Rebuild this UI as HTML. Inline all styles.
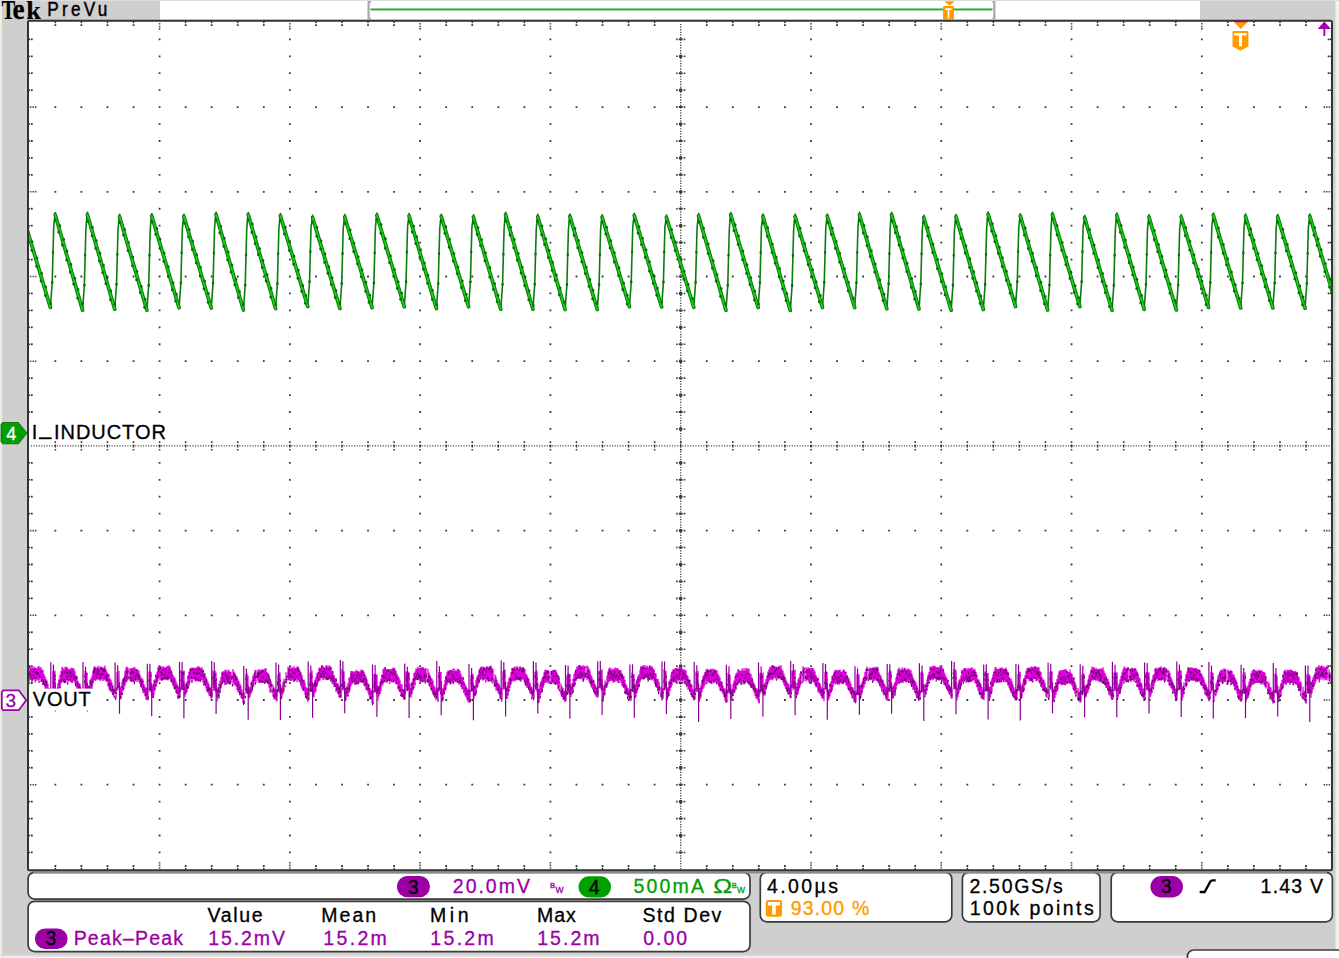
<!DOCTYPE html><html><head><meta charset="utf-8"><style>
html,body{margin:0;padding:0;background:#cfcfcf;}
svg{display:block;}
text{font-family:"Liberation Sans",sans-serif;}
</style></head><body>
<svg width="1339" height="958" viewBox="0 0 1339 958">

<rect x="0" y="0" width="1339" height="958" fill="#cfcfcf"/>
<rect x="0" y="0" width="2" height="958" fill="#ededdf"/>
<rect x="1335.5" y="0" width="3.5" height="958" fill="#f3f3e3"/>
<rect x="0" y="0" width="1339" height="1" fill="#dcdcdc"/>
<rect x="0" y="955" width="1339" height="1.5" fill="#dedede"/>
<rect x="0" y="956.5" width="1339" height="1.5" fill="#f4f4f0"/>
<rect x="160" y="1" width="1040" height="18.7" fill="#ffffff"/>
<rect x="28" y="21" width="1304" height="849" fill="#ffffff"/>
<path d="M158.78 23.00h1.6v1.6h-1.6zM158.78 25.70h1.6v1.6h-1.6zM158.78 28.10h1.6v1.6h-1.6zM158.78 861.90h1.6v1.6h-1.6zM158.78 864.60h1.6v1.6h-1.6zM158.78 867.20h1.6v1.6h-1.6zM289.06 23.00h1.6v1.6h-1.6zM289.06 25.70h1.6v1.6h-1.6zM289.06 28.10h1.6v1.6h-1.6zM289.06 861.90h1.6v1.6h-1.6zM289.06 864.60h1.6v1.6h-1.6zM289.06 867.20h1.6v1.6h-1.6zM419.34 23.00h1.6v1.6h-1.6zM419.34 25.70h1.6v1.6h-1.6zM419.34 28.10h1.6v1.6h-1.6zM419.34 861.90h1.6v1.6h-1.6zM419.34 864.60h1.6v1.6h-1.6zM419.34 867.20h1.6v1.6h-1.6zM549.62 23.00h1.6v1.6h-1.6zM549.62 25.70h1.6v1.6h-1.6zM549.62 28.10h1.6v1.6h-1.6zM549.62 861.90h1.6v1.6h-1.6zM549.62 864.60h1.6v1.6h-1.6zM549.62 867.20h1.6v1.6h-1.6zM810.18 23.00h1.6v1.6h-1.6zM810.18 25.70h1.6v1.6h-1.6zM810.18 28.10h1.6v1.6h-1.6zM810.18 861.90h1.6v1.6h-1.6zM810.18 864.60h1.6v1.6h-1.6zM810.18 867.20h1.6v1.6h-1.6zM940.46 23.00h1.6v1.6h-1.6zM940.46 25.70h1.6v1.6h-1.6zM940.46 28.10h1.6v1.6h-1.6zM940.46 861.90h1.6v1.6h-1.6zM940.46 864.60h1.6v1.6h-1.6zM940.46 867.20h1.6v1.6h-1.6zM1070.74 23.00h1.6v1.6h-1.6zM1070.74 25.70h1.6v1.6h-1.6zM1070.74 28.10h1.6v1.6h-1.6zM1070.74 861.90h1.6v1.6h-1.6zM1070.74 864.60h1.6v1.6h-1.6zM1070.74 867.20h1.6v1.6h-1.6zM1201.02 23.00h1.6v1.6h-1.6zM1201.02 25.70h1.6v1.6h-1.6zM1201.02 28.10h1.6v1.6h-1.6zM1201.02 861.90h1.6v1.6h-1.6zM1201.02 864.60h1.6v1.6h-1.6zM1201.02 867.20h1.6v1.6h-1.6zM29.80 106.30h1.6v1.6h-1.6zM32.50 106.30h1.6v1.6h-1.6zM34.90 106.30h1.6v1.6h-1.6zM1323.50 106.30h1.6v1.6h-1.6zM1325.90 106.30h1.6v1.6h-1.6zM1328.60 106.30h1.6v1.6h-1.6zM29.80 191.00h1.6v1.6h-1.6zM32.50 191.00h1.6v1.6h-1.6zM34.90 191.00h1.6v1.6h-1.6zM1323.50 191.00h1.6v1.6h-1.6zM1325.90 191.00h1.6v1.6h-1.6zM1328.60 191.00h1.6v1.6h-1.6zM29.80 275.70h1.6v1.6h-1.6zM32.50 275.70h1.6v1.6h-1.6zM34.90 275.70h1.6v1.6h-1.6zM1323.50 275.70h1.6v1.6h-1.6zM1325.90 275.70h1.6v1.6h-1.6zM1328.60 275.70h1.6v1.6h-1.6zM29.80 360.40h1.6v1.6h-1.6zM32.50 360.40h1.6v1.6h-1.6zM34.90 360.40h1.6v1.6h-1.6zM1323.50 360.40h1.6v1.6h-1.6zM1325.90 360.40h1.6v1.6h-1.6zM1328.60 360.40h1.6v1.6h-1.6zM29.80 529.80h1.6v1.6h-1.6zM32.50 529.80h1.6v1.6h-1.6zM34.90 529.80h1.6v1.6h-1.6zM1323.50 529.80h1.6v1.6h-1.6zM1325.90 529.80h1.6v1.6h-1.6zM1328.60 529.80h1.6v1.6h-1.6zM29.80 614.50h1.6v1.6h-1.6zM32.50 614.50h1.6v1.6h-1.6zM34.90 614.50h1.6v1.6h-1.6zM1323.50 614.50h1.6v1.6h-1.6zM1325.90 614.50h1.6v1.6h-1.6zM1328.60 614.50h1.6v1.6h-1.6zM29.80 699.20h1.6v1.6h-1.6zM32.50 699.20h1.6v1.6h-1.6zM34.90 699.20h1.6v1.6h-1.6zM1323.50 699.20h1.6v1.6h-1.6zM1325.90 699.20h1.6v1.6h-1.6zM1328.60 699.20h1.6v1.6h-1.6zM29.80 783.90h1.6v1.6h-1.6zM32.50 783.90h1.6v1.6h-1.6zM34.90 783.90h1.6v1.6h-1.6zM1323.50 783.90h1.6v1.6h-1.6zM1325.90 783.90h1.6v1.6h-1.6zM1328.60 783.90h1.6v1.6h-1.6z" fill="#555"/>
<path d="M158.68 38.44h1.8v1.8h-1.8zM158.68 55.38h1.8v1.8h-1.8zM158.68 72.32h1.8v1.8h-1.8zM158.68 89.26h1.8v1.8h-1.8zM158.68 106.20h1.8v1.8h-1.8zM158.68 123.14h1.8v1.8h-1.8zM158.68 140.08h1.8v1.8h-1.8zM158.68 157.02h1.8v1.8h-1.8zM158.68 173.96h1.8v1.8h-1.8zM158.68 190.90h1.8v1.8h-1.8zM158.68 207.84h1.8v1.8h-1.8zM158.68 224.78h1.8v1.8h-1.8zM158.68 241.72h1.8v1.8h-1.8zM158.68 258.66h1.8v1.8h-1.8zM158.68 275.60h1.8v1.8h-1.8zM158.68 292.54h1.8v1.8h-1.8zM158.68 309.48h1.8v1.8h-1.8zM158.68 326.42h1.8v1.8h-1.8zM158.68 343.36h1.8v1.8h-1.8zM158.68 360.30h1.8v1.8h-1.8zM158.68 377.24h1.8v1.8h-1.8zM158.68 394.18h1.8v1.8h-1.8zM158.68 411.12h1.8v1.8h-1.8zM158.68 428.06h1.8v1.8h-1.8zM158.68 445.00h1.8v1.8h-1.8zM158.68 461.94h1.8v1.8h-1.8zM158.68 478.88h1.8v1.8h-1.8zM158.68 495.82h1.8v1.8h-1.8zM158.68 512.76h1.8v1.8h-1.8zM158.68 529.70h1.8v1.8h-1.8zM158.68 546.64h1.8v1.8h-1.8zM158.68 563.58h1.8v1.8h-1.8zM158.68 580.52h1.8v1.8h-1.8zM158.68 597.46h1.8v1.8h-1.8zM158.68 614.40h1.8v1.8h-1.8zM158.68 631.34h1.8v1.8h-1.8zM158.68 648.28h1.8v1.8h-1.8zM158.68 665.22h1.8v1.8h-1.8zM158.68 682.16h1.8v1.8h-1.8zM158.68 699.10h1.8v1.8h-1.8zM158.68 716.04h1.8v1.8h-1.8zM158.68 732.98h1.8v1.8h-1.8zM158.68 749.92h1.8v1.8h-1.8zM158.68 766.86h1.8v1.8h-1.8zM158.68 783.80h1.8v1.8h-1.8zM158.68 800.74h1.8v1.8h-1.8zM158.68 817.68h1.8v1.8h-1.8zM158.68 834.62h1.8v1.8h-1.8zM158.68 851.56h1.8v1.8h-1.8zM288.96 38.44h1.8v1.8h-1.8zM288.96 55.38h1.8v1.8h-1.8zM288.96 72.32h1.8v1.8h-1.8zM288.96 89.26h1.8v1.8h-1.8zM288.96 106.20h1.8v1.8h-1.8zM288.96 123.14h1.8v1.8h-1.8zM288.96 140.08h1.8v1.8h-1.8zM288.96 157.02h1.8v1.8h-1.8zM288.96 173.96h1.8v1.8h-1.8zM288.96 190.90h1.8v1.8h-1.8zM288.96 207.84h1.8v1.8h-1.8zM288.96 224.78h1.8v1.8h-1.8zM288.96 241.72h1.8v1.8h-1.8zM288.96 258.66h1.8v1.8h-1.8zM288.96 275.60h1.8v1.8h-1.8zM288.96 292.54h1.8v1.8h-1.8zM288.96 309.48h1.8v1.8h-1.8zM288.96 326.42h1.8v1.8h-1.8zM288.96 343.36h1.8v1.8h-1.8zM288.96 360.30h1.8v1.8h-1.8zM288.96 377.24h1.8v1.8h-1.8zM288.96 394.18h1.8v1.8h-1.8zM288.96 411.12h1.8v1.8h-1.8zM288.96 428.06h1.8v1.8h-1.8zM288.96 445.00h1.8v1.8h-1.8zM288.96 461.94h1.8v1.8h-1.8zM288.96 478.88h1.8v1.8h-1.8zM288.96 495.82h1.8v1.8h-1.8zM288.96 512.76h1.8v1.8h-1.8zM288.96 529.70h1.8v1.8h-1.8zM288.96 546.64h1.8v1.8h-1.8zM288.96 563.58h1.8v1.8h-1.8zM288.96 580.52h1.8v1.8h-1.8zM288.96 597.46h1.8v1.8h-1.8zM288.96 614.40h1.8v1.8h-1.8zM288.96 631.34h1.8v1.8h-1.8zM288.96 648.28h1.8v1.8h-1.8zM288.96 665.22h1.8v1.8h-1.8zM288.96 682.16h1.8v1.8h-1.8zM288.96 699.10h1.8v1.8h-1.8zM288.96 716.04h1.8v1.8h-1.8zM288.96 732.98h1.8v1.8h-1.8zM288.96 749.92h1.8v1.8h-1.8zM288.96 766.86h1.8v1.8h-1.8zM288.96 783.80h1.8v1.8h-1.8zM288.96 800.74h1.8v1.8h-1.8zM288.96 817.68h1.8v1.8h-1.8zM288.96 834.62h1.8v1.8h-1.8zM288.96 851.56h1.8v1.8h-1.8zM419.24 38.44h1.8v1.8h-1.8zM419.24 55.38h1.8v1.8h-1.8zM419.24 72.32h1.8v1.8h-1.8zM419.24 89.26h1.8v1.8h-1.8zM419.24 106.20h1.8v1.8h-1.8zM419.24 123.14h1.8v1.8h-1.8zM419.24 140.08h1.8v1.8h-1.8zM419.24 157.02h1.8v1.8h-1.8zM419.24 173.96h1.8v1.8h-1.8zM419.24 190.90h1.8v1.8h-1.8zM419.24 207.84h1.8v1.8h-1.8zM419.24 224.78h1.8v1.8h-1.8zM419.24 241.72h1.8v1.8h-1.8zM419.24 258.66h1.8v1.8h-1.8zM419.24 275.60h1.8v1.8h-1.8zM419.24 292.54h1.8v1.8h-1.8zM419.24 309.48h1.8v1.8h-1.8zM419.24 326.42h1.8v1.8h-1.8zM419.24 343.36h1.8v1.8h-1.8zM419.24 360.30h1.8v1.8h-1.8zM419.24 377.24h1.8v1.8h-1.8zM419.24 394.18h1.8v1.8h-1.8zM419.24 411.12h1.8v1.8h-1.8zM419.24 428.06h1.8v1.8h-1.8zM419.24 445.00h1.8v1.8h-1.8zM419.24 461.94h1.8v1.8h-1.8zM419.24 478.88h1.8v1.8h-1.8zM419.24 495.82h1.8v1.8h-1.8zM419.24 512.76h1.8v1.8h-1.8zM419.24 529.70h1.8v1.8h-1.8zM419.24 546.64h1.8v1.8h-1.8zM419.24 563.58h1.8v1.8h-1.8zM419.24 580.52h1.8v1.8h-1.8zM419.24 597.46h1.8v1.8h-1.8zM419.24 614.40h1.8v1.8h-1.8zM419.24 631.34h1.8v1.8h-1.8zM419.24 648.28h1.8v1.8h-1.8zM419.24 665.22h1.8v1.8h-1.8zM419.24 682.16h1.8v1.8h-1.8zM419.24 699.10h1.8v1.8h-1.8zM419.24 716.04h1.8v1.8h-1.8zM419.24 732.98h1.8v1.8h-1.8zM419.24 749.92h1.8v1.8h-1.8zM419.24 766.86h1.8v1.8h-1.8zM419.24 783.80h1.8v1.8h-1.8zM419.24 800.74h1.8v1.8h-1.8zM419.24 817.68h1.8v1.8h-1.8zM419.24 834.62h1.8v1.8h-1.8zM419.24 851.56h1.8v1.8h-1.8zM549.52 38.44h1.8v1.8h-1.8zM549.52 55.38h1.8v1.8h-1.8zM549.52 72.32h1.8v1.8h-1.8zM549.52 89.26h1.8v1.8h-1.8zM549.52 106.20h1.8v1.8h-1.8zM549.52 123.14h1.8v1.8h-1.8zM549.52 140.08h1.8v1.8h-1.8zM549.52 157.02h1.8v1.8h-1.8zM549.52 173.96h1.8v1.8h-1.8zM549.52 190.90h1.8v1.8h-1.8zM549.52 207.84h1.8v1.8h-1.8zM549.52 224.78h1.8v1.8h-1.8zM549.52 241.72h1.8v1.8h-1.8zM549.52 258.66h1.8v1.8h-1.8zM549.52 275.60h1.8v1.8h-1.8zM549.52 292.54h1.8v1.8h-1.8zM549.52 309.48h1.8v1.8h-1.8zM549.52 326.42h1.8v1.8h-1.8zM549.52 343.36h1.8v1.8h-1.8zM549.52 360.30h1.8v1.8h-1.8zM549.52 377.24h1.8v1.8h-1.8zM549.52 394.18h1.8v1.8h-1.8zM549.52 411.12h1.8v1.8h-1.8zM549.52 428.06h1.8v1.8h-1.8zM549.52 445.00h1.8v1.8h-1.8zM549.52 461.94h1.8v1.8h-1.8zM549.52 478.88h1.8v1.8h-1.8zM549.52 495.82h1.8v1.8h-1.8zM549.52 512.76h1.8v1.8h-1.8zM549.52 529.70h1.8v1.8h-1.8zM549.52 546.64h1.8v1.8h-1.8zM549.52 563.58h1.8v1.8h-1.8zM549.52 580.52h1.8v1.8h-1.8zM549.52 597.46h1.8v1.8h-1.8zM549.52 614.40h1.8v1.8h-1.8zM549.52 631.34h1.8v1.8h-1.8zM549.52 648.28h1.8v1.8h-1.8zM549.52 665.22h1.8v1.8h-1.8zM549.52 682.16h1.8v1.8h-1.8zM549.52 699.10h1.8v1.8h-1.8zM549.52 716.04h1.8v1.8h-1.8zM549.52 732.98h1.8v1.8h-1.8zM549.52 749.92h1.8v1.8h-1.8zM549.52 766.86h1.8v1.8h-1.8zM549.52 783.80h1.8v1.8h-1.8zM549.52 800.74h1.8v1.8h-1.8zM549.52 817.68h1.8v1.8h-1.8zM549.52 834.62h1.8v1.8h-1.8zM549.52 851.56h1.8v1.8h-1.8zM810.08 38.44h1.8v1.8h-1.8zM810.08 55.38h1.8v1.8h-1.8zM810.08 72.32h1.8v1.8h-1.8zM810.08 89.26h1.8v1.8h-1.8zM810.08 106.20h1.8v1.8h-1.8zM810.08 123.14h1.8v1.8h-1.8zM810.08 140.08h1.8v1.8h-1.8zM810.08 157.02h1.8v1.8h-1.8zM810.08 173.96h1.8v1.8h-1.8zM810.08 190.90h1.8v1.8h-1.8zM810.08 207.84h1.8v1.8h-1.8zM810.08 224.78h1.8v1.8h-1.8zM810.08 241.72h1.8v1.8h-1.8zM810.08 258.66h1.8v1.8h-1.8zM810.08 275.60h1.8v1.8h-1.8zM810.08 292.54h1.8v1.8h-1.8zM810.08 309.48h1.8v1.8h-1.8zM810.08 326.42h1.8v1.8h-1.8zM810.08 343.36h1.8v1.8h-1.8zM810.08 360.30h1.8v1.8h-1.8zM810.08 377.24h1.8v1.8h-1.8zM810.08 394.18h1.8v1.8h-1.8zM810.08 411.12h1.8v1.8h-1.8zM810.08 428.06h1.8v1.8h-1.8zM810.08 445.00h1.8v1.8h-1.8zM810.08 461.94h1.8v1.8h-1.8zM810.08 478.88h1.8v1.8h-1.8zM810.08 495.82h1.8v1.8h-1.8zM810.08 512.76h1.8v1.8h-1.8zM810.08 529.70h1.8v1.8h-1.8zM810.08 546.64h1.8v1.8h-1.8zM810.08 563.58h1.8v1.8h-1.8zM810.08 580.52h1.8v1.8h-1.8zM810.08 597.46h1.8v1.8h-1.8zM810.08 614.40h1.8v1.8h-1.8zM810.08 631.34h1.8v1.8h-1.8zM810.08 648.28h1.8v1.8h-1.8zM810.08 665.22h1.8v1.8h-1.8zM810.08 682.16h1.8v1.8h-1.8zM810.08 699.10h1.8v1.8h-1.8zM810.08 716.04h1.8v1.8h-1.8zM810.08 732.98h1.8v1.8h-1.8zM810.08 749.92h1.8v1.8h-1.8zM810.08 766.86h1.8v1.8h-1.8zM810.08 783.80h1.8v1.8h-1.8zM810.08 800.74h1.8v1.8h-1.8zM810.08 817.68h1.8v1.8h-1.8zM810.08 834.62h1.8v1.8h-1.8zM810.08 851.56h1.8v1.8h-1.8zM940.36 38.44h1.8v1.8h-1.8zM940.36 55.38h1.8v1.8h-1.8zM940.36 72.32h1.8v1.8h-1.8zM940.36 89.26h1.8v1.8h-1.8zM940.36 106.20h1.8v1.8h-1.8zM940.36 123.14h1.8v1.8h-1.8zM940.36 140.08h1.8v1.8h-1.8zM940.36 157.02h1.8v1.8h-1.8zM940.36 173.96h1.8v1.8h-1.8zM940.36 190.90h1.8v1.8h-1.8zM940.36 207.84h1.8v1.8h-1.8zM940.36 224.78h1.8v1.8h-1.8zM940.36 241.72h1.8v1.8h-1.8zM940.36 258.66h1.8v1.8h-1.8zM940.36 275.60h1.8v1.8h-1.8zM940.36 292.54h1.8v1.8h-1.8zM940.36 309.48h1.8v1.8h-1.8zM940.36 326.42h1.8v1.8h-1.8zM940.36 343.36h1.8v1.8h-1.8zM940.36 360.30h1.8v1.8h-1.8zM940.36 377.24h1.8v1.8h-1.8zM940.36 394.18h1.8v1.8h-1.8zM940.36 411.12h1.8v1.8h-1.8zM940.36 428.06h1.8v1.8h-1.8zM940.36 445.00h1.8v1.8h-1.8zM940.36 461.94h1.8v1.8h-1.8zM940.36 478.88h1.8v1.8h-1.8zM940.36 495.82h1.8v1.8h-1.8zM940.36 512.76h1.8v1.8h-1.8zM940.36 529.70h1.8v1.8h-1.8zM940.36 546.64h1.8v1.8h-1.8zM940.36 563.58h1.8v1.8h-1.8zM940.36 580.52h1.8v1.8h-1.8zM940.36 597.46h1.8v1.8h-1.8zM940.36 614.40h1.8v1.8h-1.8zM940.36 631.34h1.8v1.8h-1.8zM940.36 648.28h1.8v1.8h-1.8zM940.36 665.22h1.8v1.8h-1.8zM940.36 682.16h1.8v1.8h-1.8zM940.36 699.10h1.8v1.8h-1.8zM940.36 716.04h1.8v1.8h-1.8zM940.36 732.98h1.8v1.8h-1.8zM940.36 749.92h1.8v1.8h-1.8zM940.36 766.86h1.8v1.8h-1.8zM940.36 783.80h1.8v1.8h-1.8zM940.36 800.74h1.8v1.8h-1.8zM940.36 817.68h1.8v1.8h-1.8zM940.36 834.62h1.8v1.8h-1.8zM940.36 851.56h1.8v1.8h-1.8zM1070.64 38.44h1.8v1.8h-1.8zM1070.64 55.38h1.8v1.8h-1.8zM1070.64 72.32h1.8v1.8h-1.8zM1070.64 89.26h1.8v1.8h-1.8zM1070.64 106.20h1.8v1.8h-1.8zM1070.64 123.14h1.8v1.8h-1.8zM1070.64 140.08h1.8v1.8h-1.8zM1070.64 157.02h1.8v1.8h-1.8zM1070.64 173.96h1.8v1.8h-1.8zM1070.64 190.90h1.8v1.8h-1.8zM1070.64 207.84h1.8v1.8h-1.8zM1070.64 224.78h1.8v1.8h-1.8zM1070.64 241.72h1.8v1.8h-1.8zM1070.64 258.66h1.8v1.8h-1.8zM1070.64 275.60h1.8v1.8h-1.8zM1070.64 292.54h1.8v1.8h-1.8zM1070.64 309.48h1.8v1.8h-1.8zM1070.64 326.42h1.8v1.8h-1.8zM1070.64 343.36h1.8v1.8h-1.8zM1070.64 360.30h1.8v1.8h-1.8zM1070.64 377.24h1.8v1.8h-1.8zM1070.64 394.18h1.8v1.8h-1.8zM1070.64 411.12h1.8v1.8h-1.8zM1070.64 428.06h1.8v1.8h-1.8zM1070.64 445.00h1.8v1.8h-1.8zM1070.64 461.94h1.8v1.8h-1.8zM1070.64 478.88h1.8v1.8h-1.8zM1070.64 495.82h1.8v1.8h-1.8zM1070.64 512.76h1.8v1.8h-1.8zM1070.64 529.70h1.8v1.8h-1.8zM1070.64 546.64h1.8v1.8h-1.8zM1070.64 563.58h1.8v1.8h-1.8zM1070.64 580.52h1.8v1.8h-1.8zM1070.64 597.46h1.8v1.8h-1.8zM1070.64 614.40h1.8v1.8h-1.8zM1070.64 631.34h1.8v1.8h-1.8zM1070.64 648.28h1.8v1.8h-1.8zM1070.64 665.22h1.8v1.8h-1.8zM1070.64 682.16h1.8v1.8h-1.8zM1070.64 699.10h1.8v1.8h-1.8zM1070.64 716.04h1.8v1.8h-1.8zM1070.64 732.98h1.8v1.8h-1.8zM1070.64 749.92h1.8v1.8h-1.8zM1070.64 766.86h1.8v1.8h-1.8zM1070.64 783.80h1.8v1.8h-1.8zM1070.64 800.74h1.8v1.8h-1.8zM1070.64 817.68h1.8v1.8h-1.8zM1070.64 834.62h1.8v1.8h-1.8zM1070.64 851.56h1.8v1.8h-1.8zM1200.92 38.44h1.8v1.8h-1.8zM1200.92 55.38h1.8v1.8h-1.8zM1200.92 72.32h1.8v1.8h-1.8zM1200.92 89.26h1.8v1.8h-1.8zM1200.92 106.20h1.8v1.8h-1.8zM1200.92 123.14h1.8v1.8h-1.8zM1200.92 140.08h1.8v1.8h-1.8zM1200.92 157.02h1.8v1.8h-1.8zM1200.92 173.96h1.8v1.8h-1.8zM1200.92 190.90h1.8v1.8h-1.8zM1200.92 207.84h1.8v1.8h-1.8zM1200.92 224.78h1.8v1.8h-1.8zM1200.92 241.72h1.8v1.8h-1.8zM1200.92 258.66h1.8v1.8h-1.8zM1200.92 275.60h1.8v1.8h-1.8zM1200.92 292.54h1.8v1.8h-1.8zM1200.92 309.48h1.8v1.8h-1.8zM1200.92 326.42h1.8v1.8h-1.8zM1200.92 343.36h1.8v1.8h-1.8zM1200.92 360.30h1.8v1.8h-1.8zM1200.92 377.24h1.8v1.8h-1.8zM1200.92 394.18h1.8v1.8h-1.8zM1200.92 411.12h1.8v1.8h-1.8zM1200.92 428.06h1.8v1.8h-1.8zM1200.92 445.00h1.8v1.8h-1.8zM1200.92 461.94h1.8v1.8h-1.8zM1200.92 478.88h1.8v1.8h-1.8zM1200.92 495.82h1.8v1.8h-1.8zM1200.92 512.76h1.8v1.8h-1.8zM1200.92 529.70h1.8v1.8h-1.8zM1200.92 546.64h1.8v1.8h-1.8zM1200.92 563.58h1.8v1.8h-1.8zM1200.92 580.52h1.8v1.8h-1.8zM1200.92 597.46h1.8v1.8h-1.8zM1200.92 614.40h1.8v1.8h-1.8zM1200.92 631.34h1.8v1.8h-1.8zM1200.92 648.28h1.8v1.8h-1.8zM1200.92 665.22h1.8v1.8h-1.8zM1200.92 682.16h1.8v1.8h-1.8zM1200.92 699.10h1.8v1.8h-1.8zM1200.92 716.04h1.8v1.8h-1.8zM1200.92 732.98h1.8v1.8h-1.8zM1200.92 749.92h1.8v1.8h-1.8zM1200.92 766.86h1.8v1.8h-1.8zM1200.92 783.80h1.8v1.8h-1.8zM1200.92 800.74h1.8v1.8h-1.8zM1200.92 817.68h1.8v1.8h-1.8zM1200.92 834.62h1.8v1.8h-1.8zM1200.92 851.56h1.8v1.8h-1.8zM54.46 106.20h1.8v1.8h-1.8zM80.51 106.20h1.8v1.8h-1.8zM106.57 106.20h1.8v1.8h-1.8zM132.62 106.20h1.8v1.8h-1.8zM184.74 106.20h1.8v1.8h-1.8zM210.79 106.20h1.8v1.8h-1.8zM236.85 106.20h1.8v1.8h-1.8zM262.90 106.20h1.8v1.8h-1.8zM315.02 106.20h1.8v1.8h-1.8zM341.07 106.20h1.8v1.8h-1.8zM367.13 106.20h1.8v1.8h-1.8zM393.18 106.20h1.8v1.8h-1.8zM445.30 106.20h1.8v1.8h-1.8zM471.35 106.20h1.8v1.8h-1.8zM497.41 106.20h1.8v1.8h-1.8zM523.46 106.20h1.8v1.8h-1.8zM575.58 106.20h1.8v1.8h-1.8zM601.63 106.20h1.8v1.8h-1.8zM627.69 106.20h1.8v1.8h-1.8zM653.74 106.20h1.8v1.8h-1.8zM705.86 106.20h1.8v1.8h-1.8zM731.91 106.20h1.8v1.8h-1.8zM757.97 106.20h1.8v1.8h-1.8zM784.02 106.20h1.8v1.8h-1.8zM836.14 106.20h1.8v1.8h-1.8zM862.19 106.20h1.8v1.8h-1.8zM888.25 106.20h1.8v1.8h-1.8zM914.30 106.20h1.8v1.8h-1.8zM966.42 106.20h1.8v1.8h-1.8zM992.47 106.20h1.8v1.8h-1.8zM1018.53 106.20h1.8v1.8h-1.8zM1044.58 106.20h1.8v1.8h-1.8zM1096.70 106.20h1.8v1.8h-1.8zM1122.75 106.20h1.8v1.8h-1.8zM1148.81 106.20h1.8v1.8h-1.8zM1174.86 106.20h1.8v1.8h-1.8zM1226.98 106.20h1.8v1.8h-1.8zM1253.03 106.20h1.8v1.8h-1.8zM1279.09 106.20h1.8v1.8h-1.8zM1305.14 106.20h1.8v1.8h-1.8zM54.46 190.90h1.8v1.8h-1.8zM80.51 190.90h1.8v1.8h-1.8zM106.57 190.90h1.8v1.8h-1.8zM132.62 190.90h1.8v1.8h-1.8zM184.74 190.90h1.8v1.8h-1.8zM210.79 190.90h1.8v1.8h-1.8zM236.85 190.90h1.8v1.8h-1.8zM262.90 190.90h1.8v1.8h-1.8zM315.02 190.90h1.8v1.8h-1.8zM341.07 190.90h1.8v1.8h-1.8zM367.13 190.90h1.8v1.8h-1.8zM393.18 190.90h1.8v1.8h-1.8zM445.30 190.90h1.8v1.8h-1.8zM471.35 190.90h1.8v1.8h-1.8zM497.41 190.90h1.8v1.8h-1.8zM523.46 190.90h1.8v1.8h-1.8zM575.58 190.90h1.8v1.8h-1.8zM601.63 190.90h1.8v1.8h-1.8zM627.69 190.90h1.8v1.8h-1.8zM653.74 190.90h1.8v1.8h-1.8zM705.86 190.90h1.8v1.8h-1.8zM731.91 190.90h1.8v1.8h-1.8zM757.97 190.90h1.8v1.8h-1.8zM784.02 190.90h1.8v1.8h-1.8zM836.14 190.90h1.8v1.8h-1.8zM862.19 190.90h1.8v1.8h-1.8zM888.25 190.90h1.8v1.8h-1.8zM914.30 190.90h1.8v1.8h-1.8zM966.42 190.90h1.8v1.8h-1.8zM992.47 190.90h1.8v1.8h-1.8zM1018.53 190.90h1.8v1.8h-1.8zM1044.58 190.90h1.8v1.8h-1.8zM1096.70 190.90h1.8v1.8h-1.8zM1122.75 190.90h1.8v1.8h-1.8zM1148.81 190.90h1.8v1.8h-1.8zM1174.86 190.90h1.8v1.8h-1.8zM1226.98 190.90h1.8v1.8h-1.8zM1253.03 190.90h1.8v1.8h-1.8zM1279.09 190.90h1.8v1.8h-1.8zM1305.14 190.90h1.8v1.8h-1.8zM54.46 275.60h1.8v1.8h-1.8zM80.51 275.60h1.8v1.8h-1.8zM106.57 275.60h1.8v1.8h-1.8zM132.62 275.60h1.8v1.8h-1.8zM184.74 275.60h1.8v1.8h-1.8zM210.79 275.60h1.8v1.8h-1.8zM236.85 275.60h1.8v1.8h-1.8zM262.90 275.60h1.8v1.8h-1.8zM315.02 275.60h1.8v1.8h-1.8zM341.07 275.60h1.8v1.8h-1.8zM367.13 275.60h1.8v1.8h-1.8zM393.18 275.60h1.8v1.8h-1.8zM445.30 275.60h1.8v1.8h-1.8zM471.35 275.60h1.8v1.8h-1.8zM497.41 275.60h1.8v1.8h-1.8zM523.46 275.60h1.8v1.8h-1.8zM575.58 275.60h1.8v1.8h-1.8zM601.63 275.60h1.8v1.8h-1.8zM627.69 275.60h1.8v1.8h-1.8zM653.74 275.60h1.8v1.8h-1.8zM705.86 275.60h1.8v1.8h-1.8zM731.91 275.60h1.8v1.8h-1.8zM757.97 275.60h1.8v1.8h-1.8zM784.02 275.60h1.8v1.8h-1.8zM836.14 275.60h1.8v1.8h-1.8zM862.19 275.60h1.8v1.8h-1.8zM888.25 275.60h1.8v1.8h-1.8zM914.30 275.60h1.8v1.8h-1.8zM966.42 275.60h1.8v1.8h-1.8zM992.47 275.60h1.8v1.8h-1.8zM1018.53 275.60h1.8v1.8h-1.8zM1044.58 275.60h1.8v1.8h-1.8zM1096.70 275.60h1.8v1.8h-1.8zM1122.75 275.60h1.8v1.8h-1.8zM1148.81 275.60h1.8v1.8h-1.8zM1174.86 275.60h1.8v1.8h-1.8zM1226.98 275.60h1.8v1.8h-1.8zM1253.03 275.60h1.8v1.8h-1.8zM1279.09 275.60h1.8v1.8h-1.8zM1305.14 275.60h1.8v1.8h-1.8zM54.46 360.30h1.8v1.8h-1.8zM80.51 360.30h1.8v1.8h-1.8zM106.57 360.30h1.8v1.8h-1.8zM132.62 360.30h1.8v1.8h-1.8zM184.74 360.30h1.8v1.8h-1.8zM210.79 360.30h1.8v1.8h-1.8zM236.85 360.30h1.8v1.8h-1.8zM262.90 360.30h1.8v1.8h-1.8zM315.02 360.30h1.8v1.8h-1.8zM341.07 360.30h1.8v1.8h-1.8zM367.13 360.30h1.8v1.8h-1.8zM393.18 360.30h1.8v1.8h-1.8zM445.30 360.30h1.8v1.8h-1.8zM471.35 360.30h1.8v1.8h-1.8zM497.41 360.30h1.8v1.8h-1.8zM523.46 360.30h1.8v1.8h-1.8zM575.58 360.30h1.8v1.8h-1.8zM601.63 360.30h1.8v1.8h-1.8zM627.69 360.30h1.8v1.8h-1.8zM653.74 360.30h1.8v1.8h-1.8zM705.86 360.30h1.8v1.8h-1.8zM731.91 360.30h1.8v1.8h-1.8zM757.97 360.30h1.8v1.8h-1.8zM784.02 360.30h1.8v1.8h-1.8zM836.14 360.30h1.8v1.8h-1.8zM862.19 360.30h1.8v1.8h-1.8zM888.25 360.30h1.8v1.8h-1.8zM914.30 360.30h1.8v1.8h-1.8zM966.42 360.30h1.8v1.8h-1.8zM992.47 360.30h1.8v1.8h-1.8zM1018.53 360.30h1.8v1.8h-1.8zM1044.58 360.30h1.8v1.8h-1.8zM1096.70 360.30h1.8v1.8h-1.8zM1122.75 360.30h1.8v1.8h-1.8zM1148.81 360.30h1.8v1.8h-1.8zM1174.86 360.30h1.8v1.8h-1.8zM1226.98 360.30h1.8v1.8h-1.8zM1253.03 360.30h1.8v1.8h-1.8zM1279.09 360.30h1.8v1.8h-1.8zM1305.14 360.30h1.8v1.8h-1.8zM54.46 529.70h1.8v1.8h-1.8zM80.51 529.70h1.8v1.8h-1.8zM106.57 529.70h1.8v1.8h-1.8zM132.62 529.70h1.8v1.8h-1.8zM184.74 529.70h1.8v1.8h-1.8zM210.79 529.70h1.8v1.8h-1.8zM236.85 529.70h1.8v1.8h-1.8zM262.90 529.70h1.8v1.8h-1.8zM315.02 529.70h1.8v1.8h-1.8zM341.07 529.70h1.8v1.8h-1.8zM367.13 529.70h1.8v1.8h-1.8zM393.18 529.70h1.8v1.8h-1.8zM445.30 529.70h1.8v1.8h-1.8zM471.35 529.70h1.8v1.8h-1.8zM497.41 529.70h1.8v1.8h-1.8zM523.46 529.70h1.8v1.8h-1.8zM575.58 529.70h1.8v1.8h-1.8zM601.63 529.70h1.8v1.8h-1.8zM627.69 529.70h1.8v1.8h-1.8zM653.74 529.70h1.8v1.8h-1.8zM705.86 529.70h1.8v1.8h-1.8zM731.91 529.70h1.8v1.8h-1.8zM757.97 529.70h1.8v1.8h-1.8zM784.02 529.70h1.8v1.8h-1.8zM836.14 529.70h1.8v1.8h-1.8zM862.19 529.70h1.8v1.8h-1.8zM888.25 529.70h1.8v1.8h-1.8zM914.30 529.70h1.8v1.8h-1.8zM966.42 529.70h1.8v1.8h-1.8zM992.47 529.70h1.8v1.8h-1.8zM1018.53 529.70h1.8v1.8h-1.8zM1044.58 529.70h1.8v1.8h-1.8zM1096.70 529.70h1.8v1.8h-1.8zM1122.75 529.70h1.8v1.8h-1.8zM1148.81 529.70h1.8v1.8h-1.8zM1174.86 529.70h1.8v1.8h-1.8zM1226.98 529.70h1.8v1.8h-1.8zM1253.03 529.70h1.8v1.8h-1.8zM1279.09 529.70h1.8v1.8h-1.8zM1305.14 529.70h1.8v1.8h-1.8zM54.46 614.40h1.8v1.8h-1.8zM80.51 614.40h1.8v1.8h-1.8zM106.57 614.40h1.8v1.8h-1.8zM132.62 614.40h1.8v1.8h-1.8zM184.74 614.40h1.8v1.8h-1.8zM210.79 614.40h1.8v1.8h-1.8zM236.85 614.40h1.8v1.8h-1.8zM262.90 614.40h1.8v1.8h-1.8zM315.02 614.40h1.8v1.8h-1.8zM341.07 614.40h1.8v1.8h-1.8zM367.13 614.40h1.8v1.8h-1.8zM393.18 614.40h1.8v1.8h-1.8zM445.30 614.40h1.8v1.8h-1.8zM471.35 614.40h1.8v1.8h-1.8zM497.41 614.40h1.8v1.8h-1.8zM523.46 614.40h1.8v1.8h-1.8zM575.58 614.40h1.8v1.8h-1.8zM601.63 614.40h1.8v1.8h-1.8zM627.69 614.40h1.8v1.8h-1.8zM653.74 614.40h1.8v1.8h-1.8zM705.86 614.40h1.8v1.8h-1.8zM731.91 614.40h1.8v1.8h-1.8zM757.97 614.40h1.8v1.8h-1.8zM784.02 614.40h1.8v1.8h-1.8zM836.14 614.40h1.8v1.8h-1.8zM862.19 614.40h1.8v1.8h-1.8zM888.25 614.40h1.8v1.8h-1.8zM914.30 614.40h1.8v1.8h-1.8zM966.42 614.40h1.8v1.8h-1.8zM992.47 614.40h1.8v1.8h-1.8zM1018.53 614.40h1.8v1.8h-1.8zM1044.58 614.40h1.8v1.8h-1.8zM1096.70 614.40h1.8v1.8h-1.8zM1122.75 614.40h1.8v1.8h-1.8zM1148.81 614.40h1.8v1.8h-1.8zM1174.86 614.40h1.8v1.8h-1.8zM1226.98 614.40h1.8v1.8h-1.8zM1253.03 614.40h1.8v1.8h-1.8zM1279.09 614.40h1.8v1.8h-1.8zM1305.14 614.40h1.8v1.8h-1.8zM54.46 699.10h1.8v1.8h-1.8zM80.51 699.10h1.8v1.8h-1.8zM106.57 699.10h1.8v1.8h-1.8zM132.62 699.10h1.8v1.8h-1.8zM184.74 699.10h1.8v1.8h-1.8zM210.79 699.10h1.8v1.8h-1.8zM236.85 699.10h1.8v1.8h-1.8zM262.90 699.10h1.8v1.8h-1.8zM315.02 699.10h1.8v1.8h-1.8zM341.07 699.10h1.8v1.8h-1.8zM367.13 699.10h1.8v1.8h-1.8zM393.18 699.10h1.8v1.8h-1.8zM445.30 699.10h1.8v1.8h-1.8zM471.35 699.10h1.8v1.8h-1.8zM497.41 699.10h1.8v1.8h-1.8zM523.46 699.10h1.8v1.8h-1.8zM575.58 699.10h1.8v1.8h-1.8zM601.63 699.10h1.8v1.8h-1.8zM627.69 699.10h1.8v1.8h-1.8zM653.74 699.10h1.8v1.8h-1.8zM705.86 699.10h1.8v1.8h-1.8zM731.91 699.10h1.8v1.8h-1.8zM757.97 699.10h1.8v1.8h-1.8zM784.02 699.10h1.8v1.8h-1.8zM836.14 699.10h1.8v1.8h-1.8zM862.19 699.10h1.8v1.8h-1.8zM888.25 699.10h1.8v1.8h-1.8zM914.30 699.10h1.8v1.8h-1.8zM966.42 699.10h1.8v1.8h-1.8zM992.47 699.10h1.8v1.8h-1.8zM1018.53 699.10h1.8v1.8h-1.8zM1044.58 699.10h1.8v1.8h-1.8zM1096.70 699.10h1.8v1.8h-1.8zM1122.75 699.10h1.8v1.8h-1.8zM1148.81 699.10h1.8v1.8h-1.8zM1174.86 699.10h1.8v1.8h-1.8zM1226.98 699.10h1.8v1.8h-1.8zM1253.03 699.10h1.8v1.8h-1.8zM1279.09 699.10h1.8v1.8h-1.8zM1305.14 699.10h1.8v1.8h-1.8zM54.46 783.80h1.8v1.8h-1.8zM80.51 783.80h1.8v1.8h-1.8zM106.57 783.80h1.8v1.8h-1.8zM132.62 783.80h1.8v1.8h-1.8zM184.74 783.80h1.8v1.8h-1.8zM210.79 783.80h1.8v1.8h-1.8zM236.85 783.80h1.8v1.8h-1.8zM262.90 783.80h1.8v1.8h-1.8zM315.02 783.80h1.8v1.8h-1.8zM341.07 783.80h1.8v1.8h-1.8zM367.13 783.80h1.8v1.8h-1.8zM393.18 783.80h1.8v1.8h-1.8zM445.30 783.80h1.8v1.8h-1.8zM471.35 783.80h1.8v1.8h-1.8zM497.41 783.80h1.8v1.8h-1.8zM523.46 783.80h1.8v1.8h-1.8zM575.58 783.80h1.8v1.8h-1.8zM601.63 783.80h1.8v1.8h-1.8zM627.69 783.80h1.8v1.8h-1.8zM653.74 783.80h1.8v1.8h-1.8zM705.86 783.80h1.8v1.8h-1.8zM731.91 783.80h1.8v1.8h-1.8zM757.97 783.80h1.8v1.8h-1.8zM784.02 783.80h1.8v1.8h-1.8zM836.14 783.80h1.8v1.8h-1.8zM862.19 783.80h1.8v1.8h-1.8zM888.25 783.80h1.8v1.8h-1.8zM914.30 783.80h1.8v1.8h-1.8zM966.42 783.80h1.8v1.8h-1.8zM992.47 783.80h1.8v1.8h-1.8zM1018.53 783.80h1.8v1.8h-1.8zM1044.58 783.80h1.8v1.8h-1.8zM1096.70 783.80h1.8v1.8h-1.8zM1122.75 783.80h1.8v1.8h-1.8zM1148.81 783.80h1.8v1.8h-1.8zM1174.86 783.80h1.8v1.8h-1.8zM1226.98 783.80h1.8v1.8h-1.8zM1253.03 783.80h1.8v1.8h-1.8zM1279.09 783.80h1.8v1.8h-1.8zM1305.14 783.80h1.8v1.8h-1.8zM54.46 24.30h1.8v1.8h-1.8zM54.46 865.10h1.8v1.8h-1.8zM80.51 24.30h1.8v1.8h-1.8zM80.51 865.10h1.8v1.8h-1.8zM106.57 24.30h1.8v1.8h-1.8zM106.57 865.10h1.8v1.8h-1.8zM132.62 24.30h1.8v1.8h-1.8zM132.62 865.10h1.8v1.8h-1.8zM184.74 24.30h1.8v1.8h-1.8zM184.74 865.10h1.8v1.8h-1.8zM210.79 24.30h1.8v1.8h-1.8zM210.79 865.10h1.8v1.8h-1.8zM236.85 24.30h1.8v1.8h-1.8zM236.85 865.10h1.8v1.8h-1.8zM262.90 24.30h1.8v1.8h-1.8zM262.90 865.10h1.8v1.8h-1.8zM315.02 24.30h1.8v1.8h-1.8zM315.02 865.10h1.8v1.8h-1.8zM341.07 24.30h1.8v1.8h-1.8zM341.07 865.10h1.8v1.8h-1.8zM367.13 24.30h1.8v1.8h-1.8zM367.13 865.10h1.8v1.8h-1.8zM393.18 24.30h1.8v1.8h-1.8zM393.18 865.10h1.8v1.8h-1.8zM445.30 24.30h1.8v1.8h-1.8zM445.30 865.10h1.8v1.8h-1.8zM471.35 24.30h1.8v1.8h-1.8zM471.35 865.10h1.8v1.8h-1.8zM497.41 24.30h1.8v1.8h-1.8zM497.41 865.10h1.8v1.8h-1.8zM523.46 24.30h1.8v1.8h-1.8zM523.46 865.10h1.8v1.8h-1.8zM575.58 24.30h1.8v1.8h-1.8zM575.58 865.10h1.8v1.8h-1.8zM601.63 24.30h1.8v1.8h-1.8zM601.63 865.10h1.8v1.8h-1.8zM627.69 24.30h1.8v1.8h-1.8zM627.69 865.10h1.8v1.8h-1.8zM653.74 24.30h1.8v1.8h-1.8zM653.74 865.10h1.8v1.8h-1.8zM705.86 24.30h1.8v1.8h-1.8zM705.86 865.10h1.8v1.8h-1.8zM731.91 24.30h1.8v1.8h-1.8zM731.91 865.10h1.8v1.8h-1.8zM757.97 24.30h1.8v1.8h-1.8zM757.97 865.10h1.8v1.8h-1.8zM784.02 24.30h1.8v1.8h-1.8zM784.02 865.10h1.8v1.8h-1.8zM836.14 24.30h1.8v1.8h-1.8zM836.14 865.10h1.8v1.8h-1.8zM862.19 24.30h1.8v1.8h-1.8zM862.19 865.10h1.8v1.8h-1.8zM888.25 24.30h1.8v1.8h-1.8zM888.25 865.10h1.8v1.8h-1.8zM914.30 24.30h1.8v1.8h-1.8zM914.30 865.10h1.8v1.8h-1.8zM966.42 24.30h1.8v1.8h-1.8zM966.42 865.10h1.8v1.8h-1.8zM992.47 24.30h1.8v1.8h-1.8zM992.47 865.10h1.8v1.8h-1.8zM1018.53 24.30h1.8v1.8h-1.8zM1018.53 865.10h1.8v1.8h-1.8zM1044.58 24.30h1.8v1.8h-1.8zM1044.58 865.10h1.8v1.8h-1.8zM1096.70 24.30h1.8v1.8h-1.8zM1096.70 865.10h1.8v1.8h-1.8zM1122.75 24.30h1.8v1.8h-1.8zM1122.75 865.10h1.8v1.8h-1.8zM1148.81 24.30h1.8v1.8h-1.8zM1148.81 865.10h1.8v1.8h-1.8zM1174.86 24.30h1.8v1.8h-1.8zM1174.86 865.10h1.8v1.8h-1.8zM1226.98 24.30h1.8v1.8h-1.8zM1226.98 865.10h1.8v1.8h-1.8zM1253.03 24.30h1.8v1.8h-1.8zM1253.03 865.10h1.8v1.8h-1.8zM1279.09 24.30h1.8v1.8h-1.8zM1279.09 865.10h1.8v1.8h-1.8zM1305.14 24.30h1.8v1.8h-1.8zM1305.14 865.10h1.8v1.8h-1.8zM30.90 38.44h1.8v1.8h-1.8zM1327.70 38.44h1.8v1.8h-1.8zM30.90 55.38h1.8v1.8h-1.8zM1327.70 55.38h1.8v1.8h-1.8zM30.90 72.32h1.8v1.8h-1.8zM1327.70 72.32h1.8v1.8h-1.8zM30.90 89.26h1.8v1.8h-1.8zM1327.70 89.26h1.8v1.8h-1.8zM30.90 123.14h1.8v1.8h-1.8zM1327.70 123.14h1.8v1.8h-1.8zM30.90 140.08h1.8v1.8h-1.8zM1327.70 140.08h1.8v1.8h-1.8zM30.90 157.02h1.8v1.8h-1.8zM1327.70 157.02h1.8v1.8h-1.8zM30.90 173.96h1.8v1.8h-1.8zM1327.70 173.96h1.8v1.8h-1.8zM30.90 207.84h1.8v1.8h-1.8zM1327.70 207.84h1.8v1.8h-1.8zM30.90 224.78h1.8v1.8h-1.8zM1327.70 224.78h1.8v1.8h-1.8zM30.90 241.72h1.8v1.8h-1.8zM1327.70 241.72h1.8v1.8h-1.8zM30.90 258.66h1.8v1.8h-1.8zM1327.70 258.66h1.8v1.8h-1.8zM30.90 292.54h1.8v1.8h-1.8zM1327.70 292.54h1.8v1.8h-1.8zM30.90 309.48h1.8v1.8h-1.8zM1327.70 309.48h1.8v1.8h-1.8zM30.90 326.42h1.8v1.8h-1.8zM1327.70 326.42h1.8v1.8h-1.8zM30.90 343.36h1.8v1.8h-1.8zM1327.70 343.36h1.8v1.8h-1.8zM30.90 377.24h1.8v1.8h-1.8zM1327.70 377.24h1.8v1.8h-1.8zM30.90 394.18h1.8v1.8h-1.8zM1327.70 394.18h1.8v1.8h-1.8zM30.90 411.12h1.8v1.8h-1.8zM1327.70 411.12h1.8v1.8h-1.8zM30.90 428.06h1.8v1.8h-1.8zM1327.70 428.06h1.8v1.8h-1.8zM30.90 461.94h1.8v1.8h-1.8zM1327.70 461.94h1.8v1.8h-1.8zM30.90 478.88h1.8v1.8h-1.8zM1327.70 478.88h1.8v1.8h-1.8zM30.90 495.82h1.8v1.8h-1.8zM1327.70 495.82h1.8v1.8h-1.8zM30.90 512.76h1.8v1.8h-1.8zM1327.70 512.76h1.8v1.8h-1.8zM30.90 546.64h1.8v1.8h-1.8zM1327.70 546.64h1.8v1.8h-1.8zM30.90 563.58h1.8v1.8h-1.8zM1327.70 563.58h1.8v1.8h-1.8zM30.90 580.52h1.8v1.8h-1.8zM1327.70 580.52h1.8v1.8h-1.8zM30.90 597.46h1.8v1.8h-1.8zM1327.70 597.46h1.8v1.8h-1.8zM30.90 631.34h1.8v1.8h-1.8zM1327.70 631.34h1.8v1.8h-1.8zM30.90 648.28h1.8v1.8h-1.8zM1327.70 648.28h1.8v1.8h-1.8zM30.90 665.22h1.8v1.8h-1.8zM1327.70 665.22h1.8v1.8h-1.8zM30.90 682.16h1.8v1.8h-1.8zM1327.70 682.16h1.8v1.8h-1.8zM30.90 716.04h1.8v1.8h-1.8zM1327.70 716.04h1.8v1.8h-1.8zM30.90 732.98h1.8v1.8h-1.8zM1327.70 732.98h1.8v1.8h-1.8zM30.90 749.92h1.8v1.8h-1.8zM1327.70 749.92h1.8v1.8h-1.8zM30.90 766.86h1.8v1.8h-1.8zM1327.70 766.86h1.8v1.8h-1.8zM30.90 800.74h1.8v1.8h-1.8zM1327.70 800.74h1.8v1.8h-1.8zM30.90 817.68h1.8v1.8h-1.8zM1327.70 817.68h1.8v1.8h-1.8zM30.90 834.62h1.8v1.8h-1.8zM1327.70 834.62h1.8v1.8h-1.8zM30.90 851.56h1.8v1.8h-1.8zM1327.70 851.56h1.8v1.8h-1.8z" fill="#3a3a3a"/>
<path d="M680.00 23.90h1.4v1.2h-1.4zM680.00 26.51h1.4v1.2h-1.4zM680.00 29.11h1.4v1.2h-1.4zM680.00 31.72h1.4v1.2h-1.4zM680.00 34.32h1.4v1.2h-1.4zM680.00 36.93h1.4v1.2h-1.4zM680.00 39.54h1.4v1.2h-1.4zM680.00 42.14h1.4v1.2h-1.4zM680.00 44.75h1.4v1.2h-1.4zM680.00 47.35h1.4v1.2h-1.4zM680.00 49.96h1.4v1.2h-1.4zM680.00 52.57h1.4v1.2h-1.4zM680.00 55.17h1.4v1.2h-1.4zM680.00 57.78h1.4v1.2h-1.4zM680.00 60.38h1.4v1.2h-1.4zM680.00 62.99h1.4v1.2h-1.4zM680.00 65.60h1.4v1.2h-1.4zM680.00 68.20h1.4v1.2h-1.4zM680.00 70.81h1.4v1.2h-1.4zM680.00 73.41h1.4v1.2h-1.4zM680.00 76.02h1.4v1.2h-1.4zM680.00 78.63h1.4v1.2h-1.4zM680.00 81.23h1.4v1.2h-1.4zM680.00 83.84h1.4v1.2h-1.4zM680.00 86.44h1.4v1.2h-1.4zM680.00 89.05h1.4v1.2h-1.4zM680.00 91.66h1.4v1.2h-1.4zM680.00 94.26h1.4v1.2h-1.4zM680.00 96.87h1.4v1.2h-1.4zM680.00 99.47h1.4v1.2h-1.4zM680.00 102.08h1.4v1.2h-1.4zM680.00 104.69h1.4v1.2h-1.4zM680.00 107.29h1.4v1.2h-1.4zM680.00 109.90h1.4v1.2h-1.4zM680.00 112.50h1.4v1.2h-1.4zM680.00 115.11h1.4v1.2h-1.4zM680.00 117.72h1.4v1.2h-1.4zM680.00 120.32h1.4v1.2h-1.4zM680.00 122.93h1.4v1.2h-1.4zM680.00 125.53h1.4v1.2h-1.4zM680.00 128.14h1.4v1.2h-1.4zM680.00 130.75h1.4v1.2h-1.4zM680.00 133.35h1.4v1.2h-1.4zM680.00 135.96h1.4v1.2h-1.4zM680.00 138.56h1.4v1.2h-1.4zM680.00 141.17h1.4v1.2h-1.4zM680.00 143.78h1.4v1.2h-1.4zM680.00 146.38h1.4v1.2h-1.4zM680.00 148.99h1.4v1.2h-1.4zM680.00 151.59h1.4v1.2h-1.4zM680.00 154.20h1.4v1.2h-1.4zM680.00 156.81h1.4v1.2h-1.4zM680.00 159.41h1.4v1.2h-1.4zM680.00 162.02h1.4v1.2h-1.4zM680.00 164.62h1.4v1.2h-1.4zM680.00 167.23h1.4v1.2h-1.4zM680.00 169.84h1.4v1.2h-1.4zM680.00 172.44h1.4v1.2h-1.4zM680.00 175.05h1.4v1.2h-1.4zM680.00 177.65h1.4v1.2h-1.4zM680.00 180.26h1.4v1.2h-1.4zM680.00 182.87h1.4v1.2h-1.4zM680.00 185.47h1.4v1.2h-1.4zM680.00 188.08h1.4v1.2h-1.4zM680.00 190.68h1.4v1.2h-1.4zM680.00 193.29h1.4v1.2h-1.4zM680.00 195.90h1.4v1.2h-1.4zM680.00 198.50h1.4v1.2h-1.4zM680.00 201.11h1.4v1.2h-1.4zM680.00 203.71h1.4v1.2h-1.4zM680.00 206.32h1.4v1.2h-1.4zM680.00 208.93h1.4v1.2h-1.4zM680.00 211.53h1.4v1.2h-1.4zM680.00 214.14h1.4v1.2h-1.4zM680.00 216.74h1.4v1.2h-1.4zM680.00 219.35h1.4v1.2h-1.4zM680.00 221.96h1.4v1.2h-1.4zM680.00 224.56h1.4v1.2h-1.4zM680.00 227.17h1.4v1.2h-1.4zM680.00 229.77h1.4v1.2h-1.4zM680.00 232.38h1.4v1.2h-1.4zM680.00 234.99h1.4v1.2h-1.4zM680.00 237.59h1.4v1.2h-1.4zM680.00 240.20h1.4v1.2h-1.4zM680.00 242.80h1.4v1.2h-1.4zM680.00 245.41h1.4v1.2h-1.4zM680.00 248.02h1.4v1.2h-1.4zM680.00 250.62h1.4v1.2h-1.4zM680.00 253.23h1.4v1.2h-1.4zM680.00 255.83h1.4v1.2h-1.4zM680.00 258.44h1.4v1.2h-1.4zM680.00 261.05h1.4v1.2h-1.4zM680.00 263.65h1.4v1.2h-1.4zM680.00 266.26h1.4v1.2h-1.4zM680.00 268.86h1.4v1.2h-1.4zM680.00 271.47h1.4v1.2h-1.4zM680.00 274.08h1.4v1.2h-1.4zM680.00 276.68h1.4v1.2h-1.4zM680.00 279.29h1.4v1.2h-1.4zM680.00 281.89h1.4v1.2h-1.4zM680.00 284.50h1.4v1.2h-1.4zM680.00 287.11h1.4v1.2h-1.4zM680.00 289.71h1.4v1.2h-1.4zM680.00 292.32h1.4v1.2h-1.4zM680.00 294.92h1.4v1.2h-1.4zM680.00 297.53h1.4v1.2h-1.4zM680.00 300.14h1.4v1.2h-1.4zM680.00 302.74h1.4v1.2h-1.4zM680.00 305.35h1.4v1.2h-1.4zM680.00 307.95h1.4v1.2h-1.4zM680.00 310.56h1.4v1.2h-1.4zM680.00 313.17h1.4v1.2h-1.4zM680.00 315.77h1.4v1.2h-1.4zM680.00 318.38h1.4v1.2h-1.4zM680.00 320.98h1.4v1.2h-1.4zM680.00 323.59h1.4v1.2h-1.4zM680.00 326.20h1.4v1.2h-1.4zM680.00 328.80h1.4v1.2h-1.4zM680.00 331.41h1.4v1.2h-1.4zM680.00 334.01h1.4v1.2h-1.4zM680.00 336.62h1.4v1.2h-1.4zM680.00 339.23h1.4v1.2h-1.4zM680.00 341.83h1.4v1.2h-1.4zM680.00 344.44h1.4v1.2h-1.4zM680.00 347.04h1.4v1.2h-1.4zM680.00 349.65h1.4v1.2h-1.4zM680.00 352.26h1.4v1.2h-1.4zM680.00 354.86h1.4v1.2h-1.4zM680.00 357.47h1.4v1.2h-1.4zM680.00 360.07h1.4v1.2h-1.4zM680.00 362.68h1.4v1.2h-1.4zM680.00 365.29h1.4v1.2h-1.4zM680.00 367.89h1.4v1.2h-1.4zM680.00 370.50h1.4v1.2h-1.4zM680.00 373.10h1.4v1.2h-1.4zM680.00 375.71h1.4v1.2h-1.4zM680.00 378.32h1.4v1.2h-1.4zM680.00 380.92h1.4v1.2h-1.4zM680.00 383.53h1.4v1.2h-1.4zM680.00 386.13h1.4v1.2h-1.4zM680.00 388.74h1.4v1.2h-1.4zM680.00 391.35h1.4v1.2h-1.4zM680.00 393.95h1.4v1.2h-1.4zM680.00 396.56h1.4v1.2h-1.4zM680.00 399.16h1.4v1.2h-1.4zM680.00 401.77h1.4v1.2h-1.4zM680.00 404.38h1.4v1.2h-1.4zM680.00 406.98h1.4v1.2h-1.4zM680.00 409.59h1.4v1.2h-1.4zM680.00 412.19h1.4v1.2h-1.4zM680.00 414.80h1.4v1.2h-1.4zM680.00 417.41h1.4v1.2h-1.4zM680.00 420.01h1.4v1.2h-1.4zM680.00 422.62h1.4v1.2h-1.4zM680.00 425.22h1.4v1.2h-1.4zM680.00 427.83h1.4v1.2h-1.4zM680.00 430.44h1.4v1.2h-1.4zM680.00 433.04h1.4v1.2h-1.4zM680.00 435.65h1.4v1.2h-1.4zM680.00 438.25h1.4v1.2h-1.4zM680.00 440.86h1.4v1.2h-1.4zM680.00 443.47h1.4v1.2h-1.4zM680.00 446.07h1.4v1.2h-1.4zM680.00 448.68h1.4v1.2h-1.4zM680.00 451.28h1.4v1.2h-1.4zM680.00 453.89h1.4v1.2h-1.4zM680.00 456.50h1.4v1.2h-1.4zM680.00 459.10h1.4v1.2h-1.4zM680.00 461.71h1.4v1.2h-1.4zM680.00 464.31h1.4v1.2h-1.4zM680.00 466.92h1.4v1.2h-1.4zM680.00 469.53h1.4v1.2h-1.4zM680.00 472.13h1.4v1.2h-1.4zM680.00 474.74h1.4v1.2h-1.4zM680.00 477.34h1.4v1.2h-1.4zM680.00 479.95h1.4v1.2h-1.4zM680.00 482.56h1.4v1.2h-1.4zM680.00 485.16h1.4v1.2h-1.4zM680.00 487.77h1.4v1.2h-1.4zM680.00 490.37h1.4v1.2h-1.4zM680.00 492.98h1.4v1.2h-1.4zM680.00 495.59h1.4v1.2h-1.4zM680.00 498.19h1.4v1.2h-1.4zM680.00 500.80h1.4v1.2h-1.4zM680.00 503.40h1.4v1.2h-1.4zM680.00 506.01h1.4v1.2h-1.4zM680.00 508.62h1.4v1.2h-1.4zM680.00 511.22h1.4v1.2h-1.4zM680.00 513.83h1.4v1.2h-1.4zM680.00 516.43h1.4v1.2h-1.4zM680.00 519.04h1.4v1.2h-1.4zM680.00 521.65h1.4v1.2h-1.4zM680.00 524.25h1.4v1.2h-1.4zM680.00 526.86h1.4v1.2h-1.4zM680.00 529.46h1.4v1.2h-1.4zM680.00 532.07h1.4v1.2h-1.4zM680.00 534.68h1.4v1.2h-1.4zM680.00 537.28h1.4v1.2h-1.4zM680.00 539.89h1.4v1.2h-1.4zM680.00 542.49h1.4v1.2h-1.4zM680.00 545.10h1.4v1.2h-1.4zM680.00 547.71h1.4v1.2h-1.4zM680.00 550.31h1.4v1.2h-1.4zM680.00 552.92h1.4v1.2h-1.4zM680.00 555.52h1.4v1.2h-1.4zM680.00 558.13h1.4v1.2h-1.4zM680.00 560.74h1.4v1.2h-1.4zM680.00 563.34h1.4v1.2h-1.4zM680.00 565.95h1.4v1.2h-1.4zM680.00 568.55h1.4v1.2h-1.4zM680.00 571.16h1.4v1.2h-1.4zM680.00 573.77h1.4v1.2h-1.4zM680.00 576.37h1.4v1.2h-1.4zM680.00 578.98h1.4v1.2h-1.4zM680.00 581.58h1.4v1.2h-1.4zM680.00 584.19h1.4v1.2h-1.4zM680.00 586.80h1.4v1.2h-1.4zM680.00 589.40h1.4v1.2h-1.4zM680.00 592.01h1.4v1.2h-1.4zM680.00 594.61h1.4v1.2h-1.4zM680.00 597.22h1.4v1.2h-1.4zM680.00 599.83h1.4v1.2h-1.4zM680.00 602.43h1.4v1.2h-1.4zM680.00 605.04h1.4v1.2h-1.4zM680.00 607.64h1.4v1.2h-1.4zM680.00 610.25h1.4v1.2h-1.4zM680.00 612.86h1.4v1.2h-1.4zM680.00 615.46h1.4v1.2h-1.4zM680.00 618.07h1.4v1.2h-1.4zM680.00 620.67h1.4v1.2h-1.4zM680.00 623.28h1.4v1.2h-1.4zM680.00 625.89h1.4v1.2h-1.4zM680.00 628.49h1.4v1.2h-1.4zM680.00 631.10h1.4v1.2h-1.4zM680.00 633.70h1.4v1.2h-1.4zM680.00 636.31h1.4v1.2h-1.4zM680.00 638.92h1.4v1.2h-1.4zM680.00 641.52h1.4v1.2h-1.4zM680.00 644.13h1.4v1.2h-1.4zM680.00 646.73h1.4v1.2h-1.4zM680.00 649.34h1.4v1.2h-1.4zM680.00 651.95h1.4v1.2h-1.4zM680.00 654.55h1.4v1.2h-1.4zM680.00 657.16h1.4v1.2h-1.4zM680.00 659.76h1.4v1.2h-1.4zM680.00 662.37h1.4v1.2h-1.4zM680.00 664.98h1.4v1.2h-1.4zM680.00 667.58h1.4v1.2h-1.4zM680.00 670.19h1.4v1.2h-1.4zM680.00 672.79h1.4v1.2h-1.4zM680.00 675.40h1.4v1.2h-1.4zM680.00 678.01h1.4v1.2h-1.4zM680.00 680.61h1.4v1.2h-1.4zM680.00 683.22h1.4v1.2h-1.4zM680.00 685.82h1.4v1.2h-1.4zM680.00 688.43h1.4v1.2h-1.4zM680.00 691.04h1.4v1.2h-1.4zM680.00 693.64h1.4v1.2h-1.4zM680.00 696.25h1.4v1.2h-1.4zM680.00 698.85h1.4v1.2h-1.4zM680.00 701.46h1.4v1.2h-1.4zM680.00 704.07h1.4v1.2h-1.4zM680.00 706.67h1.4v1.2h-1.4zM680.00 709.28h1.4v1.2h-1.4zM680.00 711.88h1.4v1.2h-1.4zM680.00 714.49h1.4v1.2h-1.4zM680.00 717.10h1.4v1.2h-1.4zM680.00 719.70h1.4v1.2h-1.4zM680.00 722.31h1.4v1.2h-1.4zM680.00 724.91h1.4v1.2h-1.4zM680.00 727.52h1.4v1.2h-1.4zM680.00 730.13h1.4v1.2h-1.4zM680.00 732.73h1.4v1.2h-1.4zM680.00 735.34h1.4v1.2h-1.4zM680.00 737.94h1.4v1.2h-1.4zM680.00 740.55h1.4v1.2h-1.4zM680.00 743.16h1.4v1.2h-1.4zM680.00 745.76h1.4v1.2h-1.4zM680.00 748.37h1.4v1.2h-1.4zM680.00 750.97h1.4v1.2h-1.4zM680.00 753.58h1.4v1.2h-1.4zM680.00 756.19h1.4v1.2h-1.4zM680.00 758.79h1.4v1.2h-1.4zM680.00 761.40h1.4v1.2h-1.4zM680.00 764.00h1.4v1.2h-1.4zM680.00 766.61h1.4v1.2h-1.4zM680.00 769.22h1.4v1.2h-1.4zM680.00 771.82h1.4v1.2h-1.4zM680.00 774.43h1.4v1.2h-1.4zM680.00 777.03h1.4v1.2h-1.4zM680.00 779.64h1.4v1.2h-1.4zM680.00 782.25h1.4v1.2h-1.4zM680.00 784.85h1.4v1.2h-1.4zM680.00 787.46h1.4v1.2h-1.4zM680.00 790.06h1.4v1.2h-1.4zM680.00 792.67h1.4v1.2h-1.4zM680.00 795.28h1.4v1.2h-1.4zM680.00 797.88h1.4v1.2h-1.4zM680.00 800.49h1.4v1.2h-1.4zM680.00 803.09h1.4v1.2h-1.4zM680.00 805.70h1.4v1.2h-1.4zM680.00 808.31h1.4v1.2h-1.4zM680.00 810.91h1.4v1.2h-1.4zM680.00 813.52h1.4v1.2h-1.4zM680.00 816.12h1.4v1.2h-1.4zM680.00 818.73h1.4v1.2h-1.4zM680.00 821.34h1.4v1.2h-1.4zM680.00 823.94h1.4v1.2h-1.4zM680.00 826.55h1.4v1.2h-1.4zM680.00 829.15h1.4v1.2h-1.4zM680.00 831.76h1.4v1.2h-1.4zM680.00 834.37h1.4v1.2h-1.4zM680.00 836.97h1.4v1.2h-1.4zM680.00 839.58h1.4v1.2h-1.4zM680.00 842.18h1.4v1.2h-1.4zM680.00 844.79h1.4v1.2h-1.4zM680.00 847.40h1.4v1.2h-1.4zM680.00 850.00h1.4v1.2h-1.4zM680.00 852.61h1.4v1.2h-1.4zM680.00 855.21h1.4v1.2h-1.4zM680.00 857.82h1.4v1.2h-1.4zM680.00 860.43h1.4v1.2h-1.4zM680.00 863.03h1.4v1.2h-1.4zM680.00 865.64h1.4v1.2h-1.4zM680.00 868.24h1.4v1.2h-1.4zM30.80 445.20h1.2v1.4h-1.2zM33.41 445.20h1.2v1.4h-1.2zM36.01 445.20h1.2v1.4h-1.2zM38.62 445.20h1.2v1.4h-1.2zM41.22 445.20h1.2v1.4h-1.2zM43.83 445.20h1.2v1.4h-1.2zM46.44 445.20h1.2v1.4h-1.2zM49.04 445.20h1.2v1.4h-1.2zM51.65 445.20h1.2v1.4h-1.2zM54.25 445.20h1.2v1.4h-1.2zM56.86 445.20h1.2v1.4h-1.2zM59.47 445.20h1.2v1.4h-1.2zM62.07 445.20h1.2v1.4h-1.2zM64.68 445.20h1.2v1.4h-1.2zM67.28 445.20h1.2v1.4h-1.2zM69.89 445.20h1.2v1.4h-1.2zM72.50 445.20h1.2v1.4h-1.2zM75.10 445.20h1.2v1.4h-1.2zM77.71 445.20h1.2v1.4h-1.2zM80.31 445.20h1.2v1.4h-1.2zM82.92 445.20h1.2v1.4h-1.2zM85.53 445.20h1.2v1.4h-1.2zM88.13 445.20h1.2v1.4h-1.2zM90.74 445.20h1.2v1.4h-1.2zM93.34 445.20h1.2v1.4h-1.2zM95.95 445.20h1.2v1.4h-1.2zM98.56 445.20h1.2v1.4h-1.2zM101.16 445.20h1.2v1.4h-1.2zM103.77 445.20h1.2v1.4h-1.2zM106.37 445.20h1.2v1.4h-1.2zM108.98 445.20h1.2v1.4h-1.2zM111.59 445.20h1.2v1.4h-1.2zM114.19 445.20h1.2v1.4h-1.2zM116.80 445.20h1.2v1.4h-1.2zM119.40 445.20h1.2v1.4h-1.2zM122.01 445.20h1.2v1.4h-1.2zM124.62 445.20h1.2v1.4h-1.2zM127.22 445.20h1.2v1.4h-1.2zM129.83 445.20h1.2v1.4h-1.2zM132.43 445.20h1.2v1.4h-1.2zM135.04 445.20h1.2v1.4h-1.2zM137.65 445.20h1.2v1.4h-1.2zM140.25 445.20h1.2v1.4h-1.2zM142.86 445.20h1.2v1.4h-1.2zM145.46 445.20h1.2v1.4h-1.2zM148.07 445.20h1.2v1.4h-1.2zM150.68 445.20h1.2v1.4h-1.2zM153.28 445.20h1.2v1.4h-1.2zM155.89 445.20h1.2v1.4h-1.2zM158.49 445.20h1.2v1.4h-1.2zM161.10 445.20h1.2v1.4h-1.2zM163.71 445.20h1.2v1.4h-1.2zM166.31 445.20h1.2v1.4h-1.2zM168.92 445.20h1.2v1.4h-1.2zM171.52 445.20h1.2v1.4h-1.2zM174.13 445.20h1.2v1.4h-1.2zM176.74 445.20h1.2v1.4h-1.2zM179.34 445.20h1.2v1.4h-1.2zM181.95 445.20h1.2v1.4h-1.2zM184.55 445.20h1.2v1.4h-1.2zM187.16 445.20h1.2v1.4h-1.2zM189.77 445.20h1.2v1.4h-1.2zM192.37 445.20h1.2v1.4h-1.2zM194.98 445.20h1.2v1.4h-1.2zM197.58 445.20h1.2v1.4h-1.2zM200.19 445.20h1.2v1.4h-1.2zM202.80 445.20h1.2v1.4h-1.2zM205.40 445.20h1.2v1.4h-1.2zM208.01 445.20h1.2v1.4h-1.2zM210.61 445.20h1.2v1.4h-1.2zM213.22 445.20h1.2v1.4h-1.2zM215.83 445.20h1.2v1.4h-1.2zM218.43 445.20h1.2v1.4h-1.2zM221.04 445.20h1.2v1.4h-1.2zM223.64 445.20h1.2v1.4h-1.2zM226.25 445.20h1.2v1.4h-1.2zM228.86 445.20h1.2v1.4h-1.2zM231.46 445.20h1.2v1.4h-1.2zM234.07 445.20h1.2v1.4h-1.2zM236.67 445.20h1.2v1.4h-1.2zM239.28 445.20h1.2v1.4h-1.2zM241.89 445.20h1.2v1.4h-1.2zM244.49 445.20h1.2v1.4h-1.2zM247.10 445.20h1.2v1.4h-1.2zM249.70 445.20h1.2v1.4h-1.2zM252.31 445.20h1.2v1.4h-1.2zM254.92 445.20h1.2v1.4h-1.2zM257.52 445.20h1.2v1.4h-1.2zM260.13 445.20h1.2v1.4h-1.2zM262.73 445.20h1.2v1.4h-1.2zM265.34 445.20h1.2v1.4h-1.2zM267.95 445.20h1.2v1.4h-1.2zM270.55 445.20h1.2v1.4h-1.2zM273.16 445.20h1.2v1.4h-1.2zM275.76 445.20h1.2v1.4h-1.2zM278.37 445.20h1.2v1.4h-1.2zM280.98 445.20h1.2v1.4h-1.2zM283.58 445.20h1.2v1.4h-1.2zM286.19 445.20h1.2v1.4h-1.2zM288.79 445.20h1.2v1.4h-1.2zM291.40 445.20h1.2v1.4h-1.2zM294.01 445.20h1.2v1.4h-1.2zM296.61 445.20h1.2v1.4h-1.2zM299.22 445.20h1.2v1.4h-1.2zM301.82 445.20h1.2v1.4h-1.2zM304.43 445.20h1.2v1.4h-1.2zM307.04 445.20h1.2v1.4h-1.2zM309.64 445.20h1.2v1.4h-1.2zM312.25 445.20h1.2v1.4h-1.2zM314.85 445.20h1.2v1.4h-1.2zM317.46 445.20h1.2v1.4h-1.2zM320.07 445.20h1.2v1.4h-1.2zM322.67 445.20h1.2v1.4h-1.2zM325.28 445.20h1.2v1.4h-1.2zM327.88 445.20h1.2v1.4h-1.2zM330.49 445.20h1.2v1.4h-1.2zM333.10 445.20h1.2v1.4h-1.2zM335.70 445.20h1.2v1.4h-1.2zM338.31 445.20h1.2v1.4h-1.2zM340.91 445.20h1.2v1.4h-1.2zM343.52 445.20h1.2v1.4h-1.2zM346.13 445.20h1.2v1.4h-1.2zM348.73 445.20h1.2v1.4h-1.2zM351.34 445.20h1.2v1.4h-1.2zM353.94 445.20h1.2v1.4h-1.2zM356.55 445.20h1.2v1.4h-1.2zM359.16 445.20h1.2v1.4h-1.2zM361.76 445.20h1.2v1.4h-1.2zM364.37 445.20h1.2v1.4h-1.2zM366.97 445.20h1.2v1.4h-1.2zM369.58 445.20h1.2v1.4h-1.2zM372.19 445.20h1.2v1.4h-1.2zM374.79 445.20h1.2v1.4h-1.2zM377.40 445.20h1.2v1.4h-1.2zM380.00 445.20h1.2v1.4h-1.2zM382.61 445.20h1.2v1.4h-1.2zM385.22 445.20h1.2v1.4h-1.2zM387.82 445.20h1.2v1.4h-1.2zM390.43 445.20h1.2v1.4h-1.2zM393.03 445.20h1.2v1.4h-1.2zM395.64 445.20h1.2v1.4h-1.2zM398.25 445.20h1.2v1.4h-1.2zM400.85 445.20h1.2v1.4h-1.2zM403.46 445.20h1.2v1.4h-1.2zM406.06 445.20h1.2v1.4h-1.2zM408.67 445.20h1.2v1.4h-1.2zM411.28 445.20h1.2v1.4h-1.2zM413.88 445.20h1.2v1.4h-1.2zM416.49 445.20h1.2v1.4h-1.2zM419.09 445.20h1.2v1.4h-1.2zM421.70 445.20h1.2v1.4h-1.2zM424.31 445.20h1.2v1.4h-1.2zM426.91 445.20h1.2v1.4h-1.2zM429.52 445.20h1.2v1.4h-1.2zM432.12 445.20h1.2v1.4h-1.2zM434.73 445.20h1.2v1.4h-1.2zM437.34 445.20h1.2v1.4h-1.2zM439.94 445.20h1.2v1.4h-1.2zM442.55 445.20h1.2v1.4h-1.2zM445.15 445.20h1.2v1.4h-1.2zM447.76 445.20h1.2v1.4h-1.2zM450.37 445.20h1.2v1.4h-1.2zM452.97 445.20h1.2v1.4h-1.2zM455.58 445.20h1.2v1.4h-1.2zM458.18 445.20h1.2v1.4h-1.2zM460.79 445.20h1.2v1.4h-1.2zM463.40 445.20h1.2v1.4h-1.2zM466.00 445.20h1.2v1.4h-1.2zM468.61 445.20h1.2v1.4h-1.2zM471.21 445.20h1.2v1.4h-1.2zM473.82 445.20h1.2v1.4h-1.2zM476.43 445.20h1.2v1.4h-1.2zM479.03 445.20h1.2v1.4h-1.2zM481.64 445.20h1.2v1.4h-1.2zM484.24 445.20h1.2v1.4h-1.2zM486.85 445.20h1.2v1.4h-1.2zM489.46 445.20h1.2v1.4h-1.2zM492.06 445.20h1.2v1.4h-1.2zM494.67 445.20h1.2v1.4h-1.2zM497.27 445.20h1.2v1.4h-1.2zM499.88 445.20h1.2v1.4h-1.2zM502.49 445.20h1.2v1.4h-1.2zM505.09 445.20h1.2v1.4h-1.2zM507.70 445.20h1.2v1.4h-1.2zM510.30 445.20h1.2v1.4h-1.2zM512.91 445.20h1.2v1.4h-1.2zM515.52 445.20h1.2v1.4h-1.2zM518.12 445.20h1.2v1.4h-1.2zM520.73 445.20h1.2v1.4h-1.2zM523.33 445.20h1.2v1.4h-1.2zM525.94 445.20h1.2v1.4h-1.2zM528.55 445.20h1.2v1.4h-1.2zM531.15 445.20h1.2v1.4h-1.2zM533.76 445.20h1.2v1.4h-1.2zM536.36 445.20h1.2v1.4h-1.2zM538.97 445.20h1.2v1.4h-1.2zM541.58 445.20h1.2v1.4h-1.2zM544.18 445.20h1.2v1.4h-1.2zM546.79 445.20h1.2v1.4h-1.2zM549.39 445.20h1.2v1.4h-1.2zM552.00 445.20h1.2v1.4h-1.2zM554.61 445.20h1.2v1.4h-1.2zM557.21 445.20h1.2v1.4h-1.2zM559.82 445.20h1.2v1.4h-1.2zM562.42 445.20h1.2v1.4h-1.2zM565.03 445.20h1.2v1.4h-1.2zM567.64 445.20h1.2v1.4h-1.2zM570.24 445.20h1.2v1.4h-1.2zM572.85 445.20h1.2v1.4h-1.2zM575.45 445.20h1.2v1.4h-1.2zM578.06 445.20h1.2v1.4h-1.2zM580.67 445.20h1.2v1.4h-1.2zM583.27 445.20h1.2v1.4h-1.2zM585.88 445.20h1.2v1.4h-1.2zM588.48 445.20h1.2v1.4h-1.2zM591.09 445.20h1.2v1.4h-1.2zM593.70 445.20h1.2v1.4h-1.2zM596.30 445.20h1.2v1.4h-1.2zM598.91 445.20h1.2v1.4h-1.2zM601.51 445.20h1.2v1.4h-1.2zM604.12 445.20h1.2v1.4h-1.2zM606.73 445.20h1.2v1.4h-1.2zM609.33 445.20h1.2v1.4h-1.2zM611.94 445.20h1.2v1.4h-1.2zM614.54 445.20h1.2v1.4h-1.2zM617.15 445.20h1.2v1.4h-1.2zM619.76 445.20h1.2v1.4h-1.2zM622.36 445.20h1.2v1.4h-1.2zM624.97 445.20h1.2v1.4h-1.2zM627.57 445.20h1.2v1.4h-1.2zM630.18 445.20h1.2v1.4h-1.2zM632.79 445.20h1.2v1.4h-1.2zM635.39 445.20h1.2v1.4h-1.2zM638.00 445.20h1.2v1.4h-1.2zM640.60 445.20h1.2v1.4h-1.2zM643.21 445.20h1.2v1.4h-1.2zM645.82 445.20h1.2v1.4h-1.2zM648.42 445.20h1.2v1.4h-1.2zM651.03 445.20h1.2v1.4h-1.2zM653.63 445.20h1.2v1.4h-1.2zM656.24 445.20h1.2v1.4h-1.2zM658.85 445.20h1.2v1.4h-1.2zM661.45 445.20h1.2v1.4h-1.2zM664.06 445.20h1.2v1.4h-1.2zM666.66 445.20h1.2v1.4h-1.2zM669.27 445.20h1.2v1.4h-1.2zM671.88 445.20h1.2v1.4h-1.2zM674.48 445.20h1.2v1.4h-1.2zM677.09 445.20h1.2v1.4h-1.2zM679.69 445.20h1.2v1.4h-1.2zM682.30 445.20h1.2v1.4h-1.2zM684.91 445.20h1.2v1.4h-1.2zM687.51 445.20h1.2v1.4h-1.2zM690.12 445.20h1.2v1.4h-1.2zM692.72 445.20h1.2v1.4h-1.2zM695.33 445.20h1.2v1.4h-1.2zM697.94 445.20h1.2v1.4h-1.2zM700.54 445.20h1.2v1.4h-1.2zM703.15 445.20h1.2v1.4h-1.2zM705.75 445.20h1.2v1.4h-1.2zM708.36 445.20h1.2v1.4h-1.2zM710.97 445.20h1.2v1.4h-1.2zM713.57 445.20h1.2v1.4h-1.2zM716.18 445.20h1.2v1.4h-1.2zM718.78 445.20h1.2v1.4h-1.2zM721.39 445.20h1.2v1.4h-1.2zM724.00 445.20h1.2v1.4h-1.2zM726.60 445.20h1.2v1.4h-1.2zM729.21 445.20h1.2v1.4h-1.2zM731.81 445.20h1.2v1.4h-1.2zM734.42 445.20h1.2v1.4h-1.2zM737.03 445.20h1.2v1.4h-1.2zM739.63 445.20h1.2v1.4h-1.2zM742.24 445.20h1.2v1.4h-1.2zM744.84 445.20h1.2v1.4h-1.2zM747.45 445.20h1.2v1.4h-1.2zM750.06 445.20h1.2v1.4h-1.2zM752.66 445.20h1.2v1.4h-1.2zM755.27 445.20h1.2v1.4h-1.2zM757.87 445.20h1.2v1.4h-1.2zM760.48 445.20h1.2v1.4h-1.2zM763.09 445.20h1.2v1.4h-1.2zM765.69 445.20h1.2v1.4h-1.2zM768.30 445.20h1.2v1.4h-1.2zM770.90 445.20h1.2v1.4h-1.2zM773.51 445.20h1.2v1.4h-1.2zM776.12 445.20h1.2v1.4h-1.2zM778.72 445.20h1.2v1.4h-1.2zM781.33 445.20h1.2v1.4h-1.2zM783.93 445.20h1.2v1.4h-1.2zM786.54 445.20h1.2v1.4h-1.2zM789.15 445.20h1.2v1.4h-1.2zM791.75 445.20h1.2v1.4h-1.2zM794.36 445.20h1.2v1.4h-1.2zM796.96 445.20h1.2v1.4h-1.2zM799.57 445.20h1.2v1.4h-1.2zM802.18 445.20h1.2v1.4h-1.2zM804.78 445.20h1.2v1.4h-1.2zM807.39 445.20h1.2v1.4h-1.2zM809.99 445.20h1.2v1.4h-1.2zM812.60 445.20h1.2v1.4h-1.2zM815.21 445.20h1.2v1.4h-1.2zM817.81 445.20h1.2v1.4h-1.2zM820.42 445.20h1.2v1.4h-1.2zM823.02 445.20h1.2v1.4h-1.2zM825.63 445.20h1.2v1.4h-1.2zM828.24 445.20h1.2v1.4h-1.2zM830.84 445.20h1.2v1.4h-1.2zM833.45 445.20h1.2v1.4h-1.2zM836.05 445.20h1.2v1.4h-1.2zM838.66 445.20h1.2v1.4h-1.2zM841.27 445.20h1.2v1.4h-1.2zM843.87 445.20h1.2v1.4h-1.2zM846.48 445.20h1.2v1.4h-1.2zM849.08 445.20h1.2v1.4h-1.2zM851.69 445.20h1.2v1.4h-1.2zM854.30 445.20h1.2v1.4h-1.2zM856.90 445.20h1.2v1.4h-1.2zM859.51 445.20h1.2v1.4h-1.2zM862.11 445.20h1.2v1.4h-1.2zM864.72 445.20h1.2v1.4h-1.2zM867.33 445.20h1.2v1.4h-1.2zM869.93 445.20h1.2v1.4h-1.2zM872.54 445.20h1.2v1.4h-1.2zM875.14 445.20h1.2v1.4h-1.2zM877.75 445.20h1.2v1.4h-1.2zM880.36 445.20h1.2v1.4h-1.2zM882.96 445.20h1.2v1.4h-1.2zM885.57 445.20h1.2v1.4h-1.2zM888.17 445.20h1.2v1.4h-1.2zM890.78 445.20h1.2v1.4h-1.2zM893.39 445.20h1.2v1.4h-1.2zM895.99 445.20h1.2v1.4h-1.2zM898.60 445.20h1.2v1.4h-1.2zM901.20 445.20h1.2v1.4h-1.2zM903.81 445.20h1.2v1.4h-1.2zM906.42 445.20h1.2v1.4h-1.2zM909.02 445.20h1.2v1.4h-1.2zM911.63 445.20h1.2v1.4h-1.2zM914.23 445.20h1.2v1.4h-1.2zM916.84 445.20h1.2v1.4h-1.2zM919.45 445.20h1.2v1.4h-1.2zM922.05 445.20h1.2v1.4h-1.2zM924.66 445.20h1.2v1.4h-1.2zM927.26 445.20h1.2v1.4h-1.2zM929.87 445.20h1.2v1.4h-1.2zM932.48 445.20h1.2v1.4h-1.2zM935.08 445.20h1.2v1.4h-1.2zM937.69 445.20h1.2v1.4h-1.2zM940.29 445.20h1.2v1.4h-1.2zM942.90 445.20h1.2v1.4h-1.2zM945.51 445.20h1.2v1.4h-1.2zM948.11 445.20h1.2v1.4h-1.2zM950.72 445.20h1.2v1.4h-1.2zM953.32 445.20h1.2v1.4h-1.2zM955.93 445.20h1.2v1.4h-1.2zM958.54 445.20h1.2v1.4h-1.2zM961.14 445.20h1.2v1.4h-1.2zM963.75 445.20h1.2v1.4h-1.2zM966.35 445.20h1.2v1.4h-1.2zM968.96 445.20h1.2v1.4h-1.2zM971.57 445.20h1.2v1.4h-1.2zM974.17 445.20h1.2v1.4h-1.2zM976.78 445.20h1.2v1.4h-1.2zM979.38 445.20h1.2v1.4h-1.2zM981.99 445.20h1.2v1.4h-1.2zM984.60 445.20h1.2v1.4h-1.2zM987.20 445.20h1.2v1.4h-1.2zM989.81 445.20h1.2v1.4h-1.2zM992.41 445.20h1.2v1.4h-1.2zM995.02 445.20h1.2v1.4h-1.2zM997.63 445.20h1.2v1.4h-1.2zM1000.23 445.20h1.2v1.4h-1.2zM1002.84 445.20h1.2v1.4h-1.2zM1005.44 445.20h1.2v1.4h-1.2zM1008.05 445.20h1.2v1.4h-1.2zM1010.66 445.20h1.2v1.4h-1.2zM1013.26 445.20h1.2v1.4h-1.2zM1015.87 445.20h1.2v1.4h-1.2zM1018.47 445.20h1.2v1.4h-1.2zM1021.08 445.20h1.2v1.4h-1.2zM1023.69 445.20h1.2v1.4h-1.2zM1026.29 445.20h1.2v1.4h-1.2zM1028.90 445.20h1.2v1.4h-1.2zM1031.50 445.20h1.2v1.4h-1.2zM1034.11 445.20h1.2v1.4h-1.2zM1036.72 445.20h1.2v1.4h-1.2zM1039.32 445.20h1.2v1.4h-1.2zM1041.93 445.20h1.2v1.4h-1.2zM1044.53 445.20h1.2v1.4h-1.2zM1047.14 445.20h1.2v1.4h-1.2zM1049.75 445.20h1.2v1.4h-1.2zM1052.35 445.20h1.2v1.4h-1.2zM1054.96 445.20h1.2v1.4h-1.2zM1057.56 445.20h1.2v1.4h-1.2zM1060.17 445.20h1.2v1.4h-1.2zM1062.78 445.20h1.2v1.4h-1.2zM1065.38 445.20h1.2v1.4h-1.2zM1067.99 445.20h1.2v1.4h-1.2zM1070.59 445.20h1.2v1.4h-1.2zM1073.20 445.20h1.2v1.4h-1.2zM1075.81 445.20h1.2v1.4h-1.2zM1078.41 445.20h1.2v1.4h-1.2zM1081.02 445.20h1.2v1.4h-1.2zM1083.62 445.20h1.2v1.4h-1.2zM1086.23 445.20h1.2v1.4h-1.2zM1088.84 445.20h1.2v1.4h-1.2zM1091.44 445.20h1.2v1.4h-1.2zM1094.05 445.20h1.2v1.4h-1.2zM1096.65 445.20h1.2v1.4h-1.2zM1099.26 445.20h1.2v1.4h-1.2zM1101.87 445.20h1.2v1.4h-1.2zM1104.47 445.20h1.2v1.4h-1.2zM1107.08 445.20h1.2v1.4h-1.2zM1109.68 445.20h1.2v1.4h-1.2zM1112.29 445.20h1.2v1.4h-1.2zM1114.90 445.20h1.2v1.4h-1.2zM1117.50 445.20h1.2v1.4h-1.2zM1120.11 445.20h1.2v1.4h-1.2zM1122.71 445.20h1.2v1.4h-1.2zM1125.32 445.20h1.2v1.4h-1.2zM1127.93 445.20h1.2v1.4h-1.2zM1130.53 445.20h1.2v1.4h-1.2zM1133.14 445.20h1.2v1.4h-1.2zM1135.74 445.20h1.2v1.4h-1.2zM1138.35 445.20h1.2v1.4h-1.2zM1140.96 445.20h1.2v1.4h-1.2zM1143.56 445.20h1.2v1.4h-1.2zM1146.17 445.20h1.2v1.4h-1.2zM1148.77 445.20h1.2v1.4h-1.2zM1151.38 445.20h1.2v1.4h-1.2zM1153.99 445.20h1.2v1.4h-1.2zM1156.59 445.20h1.2v1.4h-1.2zM1159.20 445.20h1.2v1.4h-1.2zM1161.80 445.20h1.2v1.4h-1.2zM1164.41 445.20h1.2v1.4h-1.2zM1167.02 445.20h1.2v1.4h-1.2zM1169.62 445.20h1.2v1.4h-1.2zM1172.23 445.20h1.2v1.4h-1.2zM1174.83 445.20h1.2v1.4h-1.2zM1177.44 445.20h1.2v1.4h-1.2zM1180.05 445.20h1.2v1.4h-1.2zM1182.65 445.20h1.2v1.4h-1.2zM1185.26 445.20h1.2v1.4h-1.2zM1187.86 445.20h1.2v1.4h-1.2zM1190.47 445.20h1.2v1.4h-1.2zM1193.08 445.20h1.2v1.4h-1.2zM1195.68 445.20h1.2v1.4h-1.2zM1198.29 445.20h1.2v1.4h-1.2zM1200.89 445.20h1.2v1.4h-1.2zM1203.50 445.20h1.2v1.4h-1.2zM1206.11 445.20h1.2v1.4h-1.2zM1208.71 445.20h1.2v1.4h-1.2zM1211.32 445.20h1.2v1.4h-1.2zM1213.92 445.20h1.2v1.4h-1.2zM1216.53 445.20h1.2v1.4h-1.2zM1219.14 445.20h1.2v1.4h-1.2zM1221.74 445.20h1.2v1.4h-1.2zM1224.35 445.20h1.2v1.4h-1.2zM1226.95 445.20h1.2v1.4h-1.2zM1229.56 445.20h1.2v1.4h-1.2zM1232.17 445.20h1.2v1.4h-1.2zM1234.77 445.20h1.2v1.4h-1.2zM1237.38 445.20h1.2v1.4h-1.2zM1239.98 445.20h1.2v1.4h-1.2zM1242.59 445.20h1.2v1.4h-1.2zM1245.20 445.20h1.2v1.4h-1.2zM1247.80 445.20h1.2v1.4h-1.2zM1250.41 445.20h1.2v1.4h-1.2zM1253.01 445.20h1.2v1.4h-1.2zM1255.62 445.20h1.2v1.4h-1.2zM1258.23 445.20h1.2v1.4h-1.2zM1260.83 445.20h1.2v1.4h-1.2zM1263.44 445.20h1.2v1.4h-1.2zM1266.04 445.20h1.2v1.4h-1.2zM1268.65 445.20h1.2v1.4h-1.2zM1271.26 445.20h1.2v1.4h-1.2zM1273.86 445.20h1.2v1.4h-1.2zM1276.47 445.20h1.2v1.4h-1.2zM1279.07 445.20h1.2v1.4h-1.2zM1281.68 445.20h1.2v1.4h-1.2zM1284.29 445.20h1.2v1.4h-1.2zM1286.89 445.20h1.2v1.4h-1.2zM1289.50 445.20h1.2v1.4h-1.2zM1292.10 445.20h1.2v1.4h-1.2zM1294.71 445.20h1.2v1.4h-1.2zM1297.32 445.20h1.2v1.4h-1.2zM1299.92 445.20h1.2v1.4h-1.2zM1302.53 445.20h1.2v1.4h-1.2zM1305.13 445.20h1.2v1.4h-1.2zM1307.74 445.20h1.2v1.4h-1.2zM1310.35 445.20h1.2v1.4h-1.2zM1312.95 445.20h1.2v1.4h-1.2zM1315.56 445.20h1.2v1.4h-1.2zM1318.16 445.20h1.2v1.4h-1.2zM1320.77 445.20h1.2v1.4h-1.2zM1323.38 445.20h1.2v1.4h-1.2zM1325.98 445.20h1.2v1.4h-1.2zM1328.59 445.20h1.2v1.4h-1.2z" fill="#4a4a4a"/>
<path d="M676.10 38.54h1.6v1.6h-1.6zM683.70 38.54h1.6v1.6h-1.6zM678.80 38.34h3.8v2.0h-3.8zM676.10 55.48h1.6v1.6h-1.6zM683.70 55.48h1.6v1.6h-1.6zM678.80 56.28a1.9 1.9 0 1 0 3.8 0a1.9 1.9 0 1 0 -3.8 0zM676.10 72.42h1.6v1.6h-1.6zM683.70 72.42h1.6v1.6h-1.6zM678.80 72.22h3.8v2.0h-3.8zM676.10 89.36h1.6v1.6h-1.6zM683.70 89.36h1.6v1.6h-1.6zM678.80 90.16a1.9 1.9 0 1 0 3.8 0a1.9 1.9 0 1 0 -3.8 0zM676.10 106.30h1.6v1.6h-1.6zM683.70 106.30h1.6v1.6h-1.6zM678.80 106.10h3.8v2.0h-3.8zM676.10 123.24h1.6v1.6h-1.6zM683.70 123.24h1.6v1.6h-1.6zM678.80 124.04a1.9 1.9 0 1 0 3.8 0a1.9 1.9 0 1 0 -3.8 0zM676.10 140.18h1.6v1.6h-1.6zM683.70 140.18h1.6v1.6h-1.6zM678.80 139.98h3.8v2.0h-3.8zM676.10 157.12h1.6v1.6h-1.6zM683.70 157.12h1.6v1.6h-1.6zM678.80 157.92a1.9 1.9 0 1 0 3.8 0a1.9 1.9 0 1 0 -3.8 0zM676.10 174.06h1.6v1.6h-1.6zM683.70 174.06h1.6v1.6h-1.6zM678.80 173.86h3.8v2.0h-3.8zM676.10 191.00h1.6v1.6h-1.6zM683.70 191.00h1.6v1.6h-1.6zM678.80 191.80a1.9 1.9 0 1 0 3.8 0a1.9 1.9 0 1 0 -3.8 0zM676.10 207.94h1.6v1.6h-1.6zM683.70 207.94h1.6v1.6h-1.6zM678.80 207.74h3.8v2.0h-3.8zM676.10 224.88h1.6v1.6h-1.6zM683.70 224.88h1.6v1.6h-1.6zM678.80 225.68a1.9 1.9 0 1 0 3.8 0a1.9 1.9 0 1 0 -3.8 0zM676.10 241.82h1.6v1.6h-1.6zM683.70 241.82h1.6v1.6h-1.6zM678.80 241.62h3.8v2.0h-3.8zM676.10 258.76h1.6v1.6h-1.6zM683.70 258.76h1.6v1.6h-1.6zM678.80 259.56a1.9 1.9 0 1 0 3.8 0a1.9 1.9 0 1 0 -3.8 0zM676.10 275.70h1.6v1.6h-1.6zM683.70 275.70h1.6v1.6h-1.6zM678.80 275.50h3.8v2.0h-3.8zM676.10 292.64h1.6v1.6h-1.6zM683.70 292.64h1.6v1.6h-1.6zM678.80 293.44a1.9 1.9 0 1 0 3.8 0a1.9 1.9 0 1 0 -3.8 0zM676.10 309.58h1.6v1.6h-1.6zM683.70 309.58h1.6v1.6h-1.6zM678.80 309.38h3.8v2.0h-3.8zM676.10 326.52h1.6v1.6h-1.6zM683.70 326.52h1.6v1.6h-1.6zM678.80 327.32a1.9 1.9 0 1 0 3.8 0a1.9 1.9 0 1 0 -3.8 0zM676.10 343.46h1.6v1.6h-1.6zM683.70 343.46h1.6v1.6h-1.6zM678.80 343.26h3.8v2.0h-3.8zM676.10 360.40h1.6v1.6h-1.6zM683.70 360.40h1.6v1.6h-1.6zM678.80 361.20a1.9 1.9 0 1 0 3.8 0a1.9 1.9 0 1 0 -3.8 0zM676.10 377.34h1.6v1.6h-1.6zM683.70 377.34h1.6v1.6h-1.6zM678.80 377.14h3.8v2.0h-3.8zM676.10 394.28h1.6v1.6h-1.6zM683.70 394.28h1.6v1.6h-1.6zM678.80 395.08a1.9 1.9 0 1 0 3.8 0a1.9 1.9 0 1 0 -3.8 0zM676.10 411.22h1.6v1.6h-1.6zM683.70 411.22h1.6v1.6h-1.6zM678.80 411.02h3.8v2.0h-3.8zM676.10 428.16h1.6v1.6h-1.6zM683.70 428.16h1.6v1.6h-1.6zM678.80 428.96a1.9 1.9 0 1 0 3.8 0a1.9 1.9 0 1 0 -3.8 0zM676.10 462.04h1.6v1.6h-1.6zM683.70 462.04h1.6v1.6h-1.6zM678.80 462.84a1.9 1.9 0 1 0 3.8 0a1.9 1.9 0 1 0 -3.8 0zM676.10 478.98h1.6v1.6h-1.6zM683.70 478.98h1.6v1.6h-1.6zM678.80 478.78h3.8v2.0h-3.8zM676.10 495.92h1.6v1.6h-1.6zM683.70 495.92h1.6v1.6h-1.6zM678.80 496.72a1.9 1.9 0 1 0 3.8 0a1.9 1.9 0 1 0 -3.8 0zM676.10 512.86h1.6v1.6h-1.6zM683.70 512.86h1.6v1.6h-1.6zM678.80 512.66h3.8v2.0h-3.8zM676.10 529.80h1.6v1.6h-1.6zM683.70 529.80h1.6v1.6h-1.6zM678.80 530.60a1.9 1.9 0 1 0 3.8 0a1.9 1.9 0 1 0 -3.8 0zM676.10 546.74h1.6v1.6h-1.6zM683.70 546.74h1.6v1.6h-1.6zM678.80 546.54h3.8v2.0h-3.8zM676.10 563.68h1.6v1.6h-1.6zM683.70 563.68h1.6v1.6h-1.6zM678.80 564.48a1.9 1.9 0 1 0 3.8 0a1.9 1.9 0 1 0 -3.8 0zM676.10 580.62h1.6v1.6h-1.6zM683.70 580.62h1.6v1.6h-1.6zM678.80 580.42h3.8v2.0h-3.8zM676.10 597.56h1.6v1.6h-1.6zM683.70 597.56h1.6v1.6h-1.6zM678.80 598.36a1.9 1.9 0 1 0 3.8 0a1.9 1.9 0 1 0 -3.8 0zM676.10 614.50h1.6v1.6h-1.6zM683.70 614.50h1.6v1.6h-1.6zM678.80 614.30h3.8v2.0h-3.8zM676.10 631.44h1.6v1.6h-1.6zM683.70 631.44h1.6v1.6h-1.6zM678.80 632.24a1.9 1.9 0 1 0 3.8 0a1.9 1.9 0 1 0 -3.8 0zM676.10 648.38h1.6v1.6h-1.6zM683.70 648.38h1.6v1.6h-1.6zM678.80 648.18h3.8v2.0h-3.8zM676.10 665.32h1.6v1.6h-1.6zM683.70 665.32h1.6v1.6h-1.6zM678.80 666.12a1.9 1.9 0 1 0 3.8 0a1.9 1.9 0 1 0 -3.8 0zM676.10 682.26h1.6v1.6h-1.6zM683.70 682.26h1.6v1.6h-1.6zM678.80 682.06h3.8v2.0h-3.8zM676.10 699.20h1.6v1.6h-1.6zM683.70 699.20h1.6v1.6h-1.6zM678.80 700.00a1.9 1.9 0 1 0 3.8 0a1.9 1.9 0 1 0 -3.8 0zM676.10 716.14h1.6v1.6h-1.6zM683.70 716.14h1.6v1.6h-1.6zM678.80 715.94h3.8v2.0h-3.8zM676.10 733.08h1.6v1.6h-1.6zM683.70 733.08h1.6v1.6h-1.6zM678.80 733.88a1.9 1.9 0 1 0 3.8 0a1.9 1.9 0 1 0 -3.8 0zM676.10 750.02h1.6v1.6h-1.6zM683.70 750.02h1.6v1.6h-1.6zM678.80 749.82h3.8v2.0h-3.8zM676.10 766.96h1.6v1.6h-1.6zM683.70 766.96h1.6v1.6h-1.6zM678.80 767.76a1.9 1.9 0 1 0 3.8 0a1.9 1.9 0 1 0 -3.8 0zM676.10 783.90h1.6v1.6h-1.6zM683.70 783.90h1.6v1.6h-1.6zM678.80 783.70h3.8v2.0h-3.8zM676.10 800.84h1.6v1.6h-1.6zM683.70 800.84h1.6v1.6h-1.6zM678.80 801.64a1.9 1.9 0 1 0 3.8 0a1.9 1.9 0 1 0 -3.8 0zM676.10 817.78h1.6v1.6h-1.6zM683.70 817.78h1.6v1.6h-1.6zM678.80 817.58h3.8v2.0h-3.8zM676.10 834.72h1.6v1.6h-1.6zM683.70 834.72h1.6v1.6h-1.6zM678.80 835.52a1.9 1.9 0 1 0 3.8 0a1.9 1.9 0 1 0 -3.8 0zM676.10 851.66h1.6v1.6h-1.6zM683.70 851.66h1.6v1.6h-1.6zM678.80 851.46h3.8v2.0h-3.8zM54.56 441.30h1.6v1.6h-1.6zM54.56 448.90h1.6v1.6h-1.6zM54.66 444.40h1.4v3h-1.4zM80.61 441.30h1.6v1.6h-1.6zM80.61 448.90h1.6v1.6h-1.6zM80.71 444.40h1.4v3h-1.4zM106.67 441.30h1.6v1.6h-1.6zM106.67 448.90h1.6v1.6h-1.6zM106.77 444.40h1.4v3h-1.4zM132.72 441.30h1.6v1.6h-1.6zM132.72 448.90h1.6v1.6h-1.6zM132.82 444.40h1.4v3h-1.4zM158.78 441.30h1.6v1.6h-1.6zM158.78 448.90h1.6v1.6h-1.6zM158.88 444.40h1.4v3h-1.4zM184.84 441.30h1.6v1.6h-1.6zM184.84 448.90h1.6v1.6h-1.6zM184.94 444.40h1.4v3h-1.4zM210.89 441.30h1.6v1.6h-1.6zM210.89 448.90h1.6v1.6h-1.6zM210.99 444.40h1.4v3h-1.4zM236.95 441.30h1.6v1.6h-1.6zM236.95 448.90h1.6v1.6h-1.6zM237.05 444.40h1.4v3h-1.4zM263.00 441.30h1.6v1.6h-1.6zM263.00 448.90h1.6v1.6h-1.6zM263.10 444.40h1.4v3h-1.4zM289.06 441.30h1.6v1.6h-1.6zM289.06 448.90h1.6v1.6h-1.6zM289.16 444.40h1.4v3h-1.4zM315.12 441.30h1.6v1.6h-1.6zM315.12 448.90h1.6v1.6h-1.6zM315.22 444.40h1.4v3h-1.4zM341.17 441.30h1.6v1.6h-1.6zM341.17 448.90h1.6v1.6h-1.6zM341.27 444.40h1.4v3h-1.4zM367.23 441.30h1.6v1.6h-1.6zM367.23 448.90h1.6v1.6h-1.6zM367.33 444.40h1.4v3h-1.4zM393.28 441.30h1.6v1.6h-1.6zM393.28 448.90h1.6v1.6h-1.6zM393.38 444.40h1.4v3h-1.4zM419.34 441.30h1.6v1.6h-1.6zM419.34 448.90h1.6v1.6h-1.6zM419.44 444.40h1.4v3h-1.4zM445.40 441.30h1.6v1.6h-1.6zM445.40 448.90h1.6v1.6h-1.6zM445.50 444.40h1.4v3h-1.4zM471.45 441.30h1.6v1.6h-1.6zM471.45 448.90h1.6v1.6h-1.6zM471.55 444.40h1.4v3h-1.4zM497.51 441.30h1.6v1.6h-1.6zM497.51 448.90h1.6v1.6h-1.6zM497.61 444.40h1.4v3h-1.4zM523.56 441.30h1.6v1.6h-1.6zM523.56 448.90h1.6v1.6h-1.6zM523.66 444.40h1.4v3h-1.4zM549.62 441.30h1.6v1.6h-1.6zM549.62 448.90h1.6v1.6h-1.6zM549.72 444.40h1.4v3h-1.4zM575.68 441.30h1.6v1.6h-1.6zM575.68 448.90h1.6v1.6h-1.6zM575.78 444.40h1.4v3h-1.4zM601.73 441.30h1.6v1.6h-1.6zM601.73 448.90h1.6v1.6h-1.6zM601.83 444.40h1.4v3h-1.4zM627.79 441.30h1.6v1.6h-1.6zM627.79 448.90h1.6v1.6h-1.6zM627.89 444.40h1.4v3h-1.4zM653.84 441.30h1.6v1.6h-1.6zM653.84 448.90h1.6v1.6h-1.6zM653.94 444.40h1.4v3h-1.4zM679.90 441.30h1.6v1.6h-1.6zM679.90 448.90h1.6v1.6h-1.6zM680.00 444.40h1.4v3h-1.4zM705.96 441.30h1.6v1.6h-1.6zM705.96 448.90h1.6v1.6h-1.6zM706.06 444.40h1.4v3h-1.4zM732.01 441.30h1.6v1.6h-1.6zM732.01 448.90h1.6v1.6h-1.6zM732.11 444.40h1.4v3h-1.4zM758.07 441.30h1.6v1.6h-1.6zM758.07 448.90h1.6v1.6h-1.6zM758.17 444.40h1.4v3h-1.4zM784.12 441.30h1.6v1.6h-1.6zM784.12 448.90h1.6v1.6h-1.6zM784.22 444.40h1.4v3h-1.4zM810.18 441.30h1.6v1.6h-1.6zM810.18 448.90h1.6v1.6h-1.6zM810.28 444.40h1.4v3h-1.4zM836.24 441.30h1.6v1.6h-1.6zM836.24 448.90h1.6v1.6h-1.6zM836.34 444.40h1.4v3h-1.4zM862.29 441.30h1.6v1.6h-1.6zM862.29 448.90h1.6v1.6h-1.6zM862.39 444.40h1.4v3h-1.4zM888.35 441.30h1.6v1.6h-1.6zM888.35 448.90h1.6v1.6h-1.6zM888.45 444.40h1.4v3h-1.4zM914.40 441.30h1.6v1.6h-1.6zM914.40 448.90h1.6v1.6h-1.6zM914.50 444.40h1.4v3h-1.4zM940.46 441.30h1.6v1.6h-1.6zM940.46 448.90h1.6v1.6h-1.6zM940.56 444.40h1.4v3h-1.4zM966.52 441.30h1.6v1.6h-1.6zM966.52 448.90h1.6v1.6h-1.6zM966.62 444.40h1.4v3h-1.4zM992.57 441.30h1.6v1.6h-1.6zM992.57 448.90h1.6v1.6h-1.6zM992.67 444.40h1.4v3h-1.4zM1018.63 441.30h1.6v1.6h-1.6zM1018.63 448.90h1.6v1.6h-1.6zM1018.73 444.40h1.4v3h-1.4zM1044.68 441.30h1.6v1.6h-1.6zM1044.68 448.90h1.6v1.6h-1.6zM1044.78 444.40h1.4v3h-1.4zM1070.74 441.30h1.6v1.6h-1.6zM1070.74 448.90h1.6v1.6h-1.6zM1070.84 444.40h1.4v3h-1.4zM1096.80 441.30h1.6v1.6h-1.6zM1096.80 448.90h1.6v1.6h-1.6zM1096.90 444.40h1.4v3h-1.4zM1122.85 441.30h1.6v1.6h-1.6zM1122.85 448.90h1.6v1.6h-1.6zM1122.95 444.40h1.4v3h-1.4zM1148.91 441.30h1.6v1.6h-1.6zM1148.91 448.90h1.6v1.6h-1.6zM1149.01 444.40h1.4v3h-1.4zM1174.96 441.30h1.6v1.6h-1.6zM1174.96 448.90h1.6v1.6h-1.6zM1175.06 444.40h1.4v3h-1.4zM1201.02 441.30h1.6v1.6h-1.6zM1201.02 448.90h1.6v1.6h-1.6zM1201.12 444.40h1.4v3h-1.4zM1227.08 441.30h1.6v1.6h-1.6zM1227.08 448.90h1.6v1.6h-1.6zM1227.18 444.40h1.4v3h-1.4zM1253.13 441.30h1.6v1.6h-1.6zM1253.13 448.90h1.6v1.6h-1.6zM1253.23 444.40h1.4v3h-1.4zM1279.19 441.30h1.6v1.6h-1.6zM1279.19 448.90h1.6v1.6h-1.6zM1279.29 444.40h1.4v3h-1.4zM1305.24 441.30h1.6v1.6h-1.6zM1305.24 448.90h1.6v1.6h-1.6zM1305.34 444.40h1.4v3h-1.4z" fill="#3a3a3a"/>
<path d="M54.06 21.5h2.6l-1.3 2z M54.06 869.5h2.6l-1.3 -2zM80.11 21.5h2.6l-1.3 2z M80.11 869.5h2.6l-1.3 -2zM106.17 21.5h2.6l-1.3 2z M106.17 869.5h2.6l-1.3 -2zM132.22 21.5h2.6l-1.3 2z M132.22 869.5h2.6l-1.3 -2zM184.34 21.5h2.6l-1.3 2z M184.34 869.5h2.6l-1.3 -2zM210.39 21.5h2.6l-1.3 2z M210.39 869.5h2.6l-1.3 -2zM236.45 21.5h2.6l-1.3 2z M236.45 869.5h2.6l-1.3 -2zM262.50 21.5h2.6l-1.3 2z M262.50 869.5h2.6l-1.3 -2zM314.62 21.5h2.6l-1.3 2z M314.62 869.5h2.6l-1.3 -2zM340.67 21.5h2.6l-1.3 2z M340.67 869.5h2.6l-1.3 -2zM366.73 21.5h2.6l-1.3 2z M366.73 869.5h2.6l-1.3 -2zM392.78 21.5h2.6l-1.3 2z M392.78 869.5h2.6l-1.3 -2zM444.90 21.5h2.6l-1.3 2z M444.90 869.5h2.6l-1.3 -2zM470.95 21.5h2.6l-1.3 2z M470.95 869.5h2.6l-1.3 -2zM497.01 21.5h2.6l-1.3 2z M497.01 869.5h2.6l-1.3 -2zM523.06 21.5h2.6l-1.3 2z M523.06 869.5h2.6l-1.3 -2zM575.18 21.5h2.6l-1.3 2z M575.18 869.5h2.6l-1.3 -2zM601.23 21.5h2.6l-1.3 2z M601.23 869.5h2.6l-1.3 -2zM627.29 21.5h2.6l-1.3 2z M627.29 869.5h2.6l-1.3 -2zM653.34 21.5h2.6l-1.3 2z M653.34 869.5h2.6l-1.3 -2zM705.46 21.5h2.6l-1.3 2z M705.46 869.5h2.6l-1.3 -2zM731.51 21.5h2.6l-1.3 2z M731.51 869.5h2.6l-1.3 -2zM757.57 21.5h2.6l-1.3 2z M757.57 869.5h2.6l-1.3 -2zM783.62 21.5h2.6l-1.3 2z M783.62 869.5h2.6l-1.3 -2zM835.74 21.5h2.6l-1.3 2z M835.74 869.5h2.6l-1.3 -2zM861.79 21.5h2.6l-1.3 2z M861.79 869.5h2.6l-1.3 -2zM887.85 21.5h2.6l-1.3 2z M887.85 869.5h2.6l-1.3 -2zM913.90 21.5h2.6l-1.3 2z M913.90 869.5h2.6l-1.3 -2zM966.02 21.5h2.6l-1.3 2z M966.02 869.5h2.6l-1.3 -2zM992.07 21.5h2.6l-1.3 2z M992.07 869.5h2.6l-1.3 -2zM1018.13 21.5h2.6l-1.3 2z M1018.13 869.5h2.6l-1.3 -2zM1044.18 21.5h2.6l-1.3 2z M1044.18 869.5h2.6l-1.3 -2zM1096.30 21.5h2.6l-1.3 2z M1096.30 869.5h2.6l-1.3 -2zM1122.35 21.5h2.6l-1.3 2z M1122.35 869.5h2.6l-1.3 -2zM1148.41 21.5h2.6l-1.3 2z M1148.41 869.5h2.6l-1.3 -2zM1174.46 21.5h2.6l-1.3 2z M1174.46 869.5h2.6l-1.3 -2zM1226.58 21.5h2.6l-1.3 2z M1226.58 869.5h2.6l-1.3 -2zM1252.63 21.5h2.6l-1.3 2z M1252.63 869.5h2.6l-1.3 -2zM1278.69 21.5h2.6l-1.3 2z M1278.69 869.5h2.6l-1.3 -2zM1304.74 21.5h2.6l-1.3 2z M1304.74 869.5h2.6l-1.3 -2zM28.5 38.04v2.6l2 -1.3z M1331.5 38.04v2.6l-2 -1.3zM28.5 54.98v2.6l2 -1.3z M1331.5 54.98v2.6l-2 -1.3zM28.5 71.92v2.6l2 -1.3z M1331.5 71.92v2.6l-2 -1.3zM28.5 88.86v2.6l2 -1.3z M1331.5 88.86v2.6l-2 -1.3zM28.5 122.74v2.6l2 -1.3z M1331.5 122.74v2.6l-2 -1.3zM28.5 139.68v2.6l2 -1.3z M1331.5 139.68v2.6l-2 -1.3zM28.5 156.62v2.6l2 -1.3z M1331.5 156.62v2.6l-2 -1.3zM28.5 173.56v2.6l2 -1.3z M1331.5 173.56v2.6l-2 -1.3zM28.5 207.44v2.6l2 -1.3z M1331.5 207.44v2.6l-2 -1.3zM28.5 224.38v2.6l2 -1.3z M1331.5 224.38v2.6l-2 -1.3zM28.5 241.32v2.6l2 -1.3z M1331.5 241.32v2.6l-2 -1.3zM28.5 258.26v2.6l2 -1.3z M1331.5 258.26v2.6l-2 -1.3zM28.5 292.14v2.6l2 -1.3z M1331.5 292.14v2.6l-2 -1.3zM28.5 309.08v2.6l2 -1.3z M1331.5 309.08v2.6l-2 -1.3zM28.5 326.02v2.6l2 -1.3z M1331.5 326.02v2.6l-2 -1.3zM28.5 342.96v2.6l2 -1.3z M1331.5 342.96v2.6l-2 -1.3zM28.5 376.84v2.6l2 -1.3z M1331.5 376.84v2.6l-2 -1.3zM28.5 393.78v2.6l2 -1.3z M1331.5 393.78v2.6l-2 -1.3zM28.5 410.72v2.6l2 -1.3z M1331.5 410.72v2.6l-2 -1.3zM28.5 427.66v2.6l2 -1.3z M1331.5 427.66v2.6l-2 -1.3zM28.5 461.54v2.6l2 -1.3z M1331.5 461.54v2.6l-2 -1.3zM28.5 478.48v2.6l2 -1.3z M1331.5 478.48v2.6l-2 -1.3zM28.5 495.42v2.6l2 -1.3z M1331.5 495.42v2.6l-2 -1.3zM28.5 512.36v2.6l2 -1.3z M1331.5 512.36v2.6l-2 -1.3zM28.5 546.24v2.6l2 -1.3z M1331.5 546.24v2.6l-2 -1.3zM28.5 563.18v2.6l2 -1.3z M1331.5 563.18v2.6l-2 -1.3zM28.5 580.12v2.6l2 -1.3z M1331.5 580.12v2.6l-2 -1.3zM28.5 597.06v2.6l2 -1.3z M1331.5 597.06v2.6l-2 -1.3zM28.5 630.94v2.6l2 -1.3z M1331.5 630.94v2.6l-2 -1.3zM28.5 647.88v2.6l2 -1.3z M1331.5 647.88v2.6l-2 -1.3zM28.5 664.82v2.6l2 -1.3z M1331.5 664.82v2.6l-2 -1.3zM28.5 681.76v2.6l2 -1.3z M1331.5 681.76v2.6l-2 -1.3zM28.5 715.64v2.6l2 -1.3z M1331.5 715.64v2.6l-2 -1.3zM28.5 732.58v2.6l2 -1.3z M1331.5 732.58v2.6l-2 -1.3zM28.5 749.52v2.6l2 -1.3z M1331.5 749.52v2.6l-2 -1.3zM28.5 766.46v2.6l2 -1.3z M1331.5 766.46v2.6l-2 -1.3zM28.5 800.34v2.6l2 -1.3z M1331.5 800.34v2.6l-2 -1.3zM28.5 817.28v2.6l2 -1.3z M1331.5 817.28v2.6l-2 -1.3zM28.5 834.22v2.6l2 -1.3z M1331.5 834.22v2.6l-2 -1.3zM28.5 851.16v2.6l2 -1.3z M1331.5 851.16v2.6l-2 -1.3z" fill="#111"/>
<rect x="28" y="20.85" width="1304" height="849.4" rx="1.5" fill="none" stroke="#2f3532" stroke-width="2.0"/>
<defs><clipPath id="gclip"><rect x="29" y="22" width="1302" height="847"/></clipPath></defs>
<g clip-path="url(#gclip)">
<path d="M18.23 306.93L20.03 281.93L20.83 251.93L21.53 226.93L22.23 221.06L23.23 213.06M50.40 307.45L52.20 282.45L53.00 252.45L53.70 227.45L54.40 219.80L55.40 211.80M82.57 310.12L84.37 285.12L85.17 255.12L85.87 230.12L86.57 219.70L87.57 211.70M114.74 309.23L116.54 284.23L117.34 254.23L118.04 229.23L118.74 221.70L119.74 213.70M146.91 310.15L148.71 285.15L149.51 255.15L150.21 230.15L150.91 221.00L151.91 213.00M179.08 307.80L180.88 282.80L181.68 252.80L182.38 227.80L183.08 221.58L184.08 213.58M211.25 308.09L213.05 283.09L213.85 253.09L214.55 228.09L215.25 219.56L216.25 211.56M243.42 310.01L245.22 285.01L246.02 255.01L246.72 230.01L247.42 219.84L248.42 211.84M275.59 308.54L277.39 283.54L278.19 253.54L278.89 228.54L279.59 220.86L280.59 212.86M307.76 306.51L309.56 281.51L310.36 251.51L311.06 226.51L311.76 222.55L312.76 214.55M339.93 308.45L341.73 283.45L342.53 253.45L343.23 228.45L343.93 221.93L344.93 213.93M372.10 307.80L373.90 282.80L374.70 252.80L375.40 227.80L376.10 220.47L377.10 212.47M404.27 306.80L406.07 281.80L406.87 251.80L407.57 226.80L408.27 220.96L409.27 212.96M436.44 308.52L438.24 283.52L439.04 253.52L439.74 228.52L440.44 221.56L441.44 213.56M468.61 306.76L470.41 281.76L471.21 251.76L471.91 226.76L472.61 222.21L473.61 214.21M500.78 309.25L502.58 284.25L503.38 254.25L504.08 229.25L504.78 219.70L505.78 211.70M532.95 309.11L534.75 284.11L535.55 254.11L536.25 229.11L536.95 221.70L537.95 213.70M565.12 309.54L566.92 284.54L567.72 254.54L568.42 229.54L569.12 221.36L570.12 213.36M597.29 309.57L599.09 284.57L599.89 254.57L600.59 229.57L601.29 222.18L602.29 214.18M629.46 306.75L631.26 281.75L632.06 251.75L632.76 226.75L633.46 220.58L634.46 212.58M661.63 306.92L663.43 281.92L664.23 251.92L664.93 226.92L665.63 222.40L666.63 214.40M693.80 307.25L695.60 282.25L696.40 252.25L697.10 227.25L697.80 220.90L698.80 212.90M725.97 310.18L727.77 285.18L728.57 255.18L729.27 230.18L729.97 219.83L730.97 211.83M758.14 307.46L759.94 282.46L760.74 252.46L761.44 227.46L762.14 221.36L763.14 213.36M790.31 310.42L792.11 285.42L792.91 255.42L793.61 230.42L794.31 221.51L795.31 213.51M822.48 307.37L824.28 282.37L825.08 252.37L825.78 227.37L826.48 221.39L827.48 213.39M854.65 307.52L856.45 282.52L857.25 252.52L857.95 227.52L858.65 219.69L859.65 211.69M886.82 308.70L888.62 283.70L889.42 253.70L890.12 228.70L890.82 219.82L891.82 211.82M918.99 308.87L920.79 283.87L921.59 253.87L922.29 228.87L922.99 222.59L923.99 214.59M951.16 310.17L952.96 285.17L953.76 255.17L954.46 230.17L955.16 221.80L956.16 213.80M983.33 309.42L985.13 284.42L985.93 254.42L986.63 229.42L987.33 219.38L988.33 211.38M1015.50 306.57L1017.30 281.57L1018.10 251.57L1018.80 226.57L1019.50 221.12L1020.50 213.12M1047.67 310.01L1049.47 285.01L1050.27 255.01L1050.97 230.01L1051.67 219.62L1052.67 211.62M1079.84 306.68L1081.64 281.68L1082.44 251.68L1083.14 226.68L1083.84 222.74L1084.84 214.74M1112.01 310.21L1113.81 285.21L1114.61 255.21L1115.31 230.21L1116.01 220.31L1117.01 212.31M1144.18 309.35L1145.98 284.35L1146.78 254.35L1147.48 229.35L1148.18 222.10L1149.18 214.10M1176.35 309.91L1178.15 284.91L1178.95 254.91L1179.65 229.91L1180.35 222.07L1181.35 214.07M1208.52 307.42L1210.32 282.42L1211.12 252.42L1211.82 227.42L1212.52 220.28L1213.52 212.28M1240.69 307.97L1242.49 282.97L1243.29 252.97L1243.99 227.97L1244.69 221.23L1245.69 213.23M1272.86 307.93L1274.66 282.93L1275.46 252.93L1276.16 227.93L1276.86 221.83L1277.86 213.83M1305.03 308.32L1306.83 283.32L1307.63 253.32L1308.33 228.32L1309.03 221.30L1310.03 213.30M1337.20 308.09L1339.00 283.09L1339.80 253.09L1340.50 228.09L1341.20 219.67L1342.20 211.67" fill="none" stroke="#0b7d0b" stroke-width="1.6" stroke-linejoin="round"/>
<path d="M23.03 216.06L50.40 307.45M55.20 214.80L82.57 310.12M87.37 214.70L114.74 309.23M119.54 216.70L146.91 310.15M151.71 216.00L179.08 307.80M183.88 216.58L211.25 308.09M216.05 214.56L243.42 310.01M248.22 214.84L275.59 308.54M280.39 215.86L307.76 306.51M312.56 217.55L339.93 308.45M344.73 216.93L372.10 307.80M376.90 215.47L404.27 306.80M409.07 215.96L436.44 308.52M441.24 216.56L468.61 306.76M473.41 217.21L500.78 309.25M505.58 214.70L532.95 309.11M537.75 216.70L565.12 309.54M569.92 216.36L597.29 309.57M602.09 217.18L629.46 306.75M634.26 215.58L661.63 306.92M666.43 217.40L693.80 307.25M698.60 215.90L725.97 310.18M730.77 214.83L758.14 307.46M762.94 216.36L790.31 310.42M795.11 216.51L822.48 307.37M827.28 216.39L854.65 307.52M859.45 214.69L886.82 308.70M891.62 214.82L918.99 308.87M923.79 217.59L951.16 310.17M955.96 216.80L983.33 309.42M988.13 214.38L1015.50 306.57M1020.30 216.12L1047.67 310.01M1052.47 214.62L1079.84 306.68M1084.64 217.74L1112.01 310.21M1116.81 215.31L1144.18 309.35M1148.98 217.10L1176.35 309.91M1181.15 217.07L1208.52 307.42M1213.32 215.28L1240.69 307.97M1245.49 216.23L1272.86 307.93M1277.66 216.83L1305.03 308.32M1309.83 216.30L1337.20 308.09M1342.00 214.67L1369.37 307.16" fill="none" stroke="#0a740a" stroke-width="3.7" stroke-linecap="round" stroke-linejoin="round"/>
<path d="M23.03 216.06L50.40 307.45M55.20 214.80L82.57 310.12M87.37 214.70L114.74 309.23M119.54 216.70L146.91 310.15M151.71 216.00L179.08 307.80M183.88 216.58L211.25 308.09M216.05 214.56L243.42 310.01M248.22 214.84L275.59 308.54M280.39 215.86L307.76 306.51M312.56 217.55L339.93 308.45M344.73 216.93L372.10 307.80M376.90 215.47L404.27 306.80M409.07 215.96L436.44 308.52M441.24 216.56L468.61 306.76M473.41 217.21L500.78 309.25M505.58 214.70L532.95 309.11M537.75 216.70L565.12 309.54M569.92 216.36L597.29 309.57M602.09 217.18L629.46 306.75M634.26 215.58L661.63 306.92M666.43 217.40L693.80 307.25M698.60 215.90L725.97 310.18M730.77 214.83L758.14 307.46M762.94 216.36L790.31 310.42M795.11 216.51L822.48 307.37M827.28 216.39L854.65 307.52M859.45 214.69L886.82 308.70M891.62 214.82L918.99 308.87M923.79 217.59L951.16 310.17M955.96 216.80L983.33 309.42M988.13 214.38L1015.50 306.57M1020.30 216.12L1047.67 310.01M1052.47 214.62L1079.84 306.68M1084.64 217.74L1112.01 310.21M1116.81 215.31L1144.18 309.35M1148.98 217.10L1176.35 309.91M1181.15 217.07L1208.52 307.42M1213.32 215.28L1240.69 307.97M1245.49 216.23L1272.86 307.93M1277.66 216.83L1305.03 308.32M1309.83 216.30L1337.20 308.09M1342.00 214.67L1369.37 307.16" fill="none" stroke="#16d016" stroke-width="1.8" stroke-linecap="round" stroke-linejoin="round"/>
<path d="M20.03 281.93m-1.3 0a1.3 1.6 0 1 0 2.6 0a1.3 1.6 0 1 0 -2.6 0M20.83 251.93m-1.2 0a1.2 1.6 0 1 0 2.4 0a1.2 1.6 0 1 0 -2.4 0M21.80 221.50a1.4 1.5 0 1 0 2.8 0a1.4 1.5 0 1 0 -2.8 0M26.56 227.65a1.4 1.5 0 1 0 2.8 0a1.4 1.5 0 1 0 -2.8 0M25.96 235.38a1.4 1.5 0 1 0 2.8 0a1.4 1.5 0 1 0 -2.8 0M30.75 241.63a1.4 1.5 0 1 0 2.8 0a1.4 1.5 0 1 0 -2.8 0M30.42 250.29a1.4 1.5 0 1 0 2.8 0a1.4 1.5 0 1 0 -2.8 0M35.65 257.98a1.4 1.5 0 1 0 2.8 0a1.4 1.5 0 1 0 -2.8 0M35.17 266.15a1.4 1.5 0 1 0 2.8 0a1.4 1.5 0 1 0 -2.8 0M40.21 273.23a1.4 1.5 0 1 0 2.8 0a1.4 1.5 0 1 0 -2.8 0M39.62 281.01a1.4 1.5 0 1 0 2.8 0a1.4 1.5 0 1 0 -2.8 0M44.28 286.81a1.4 1.5 0 1 0 2.8 0a1.4 1.5 0 1 0 -2.8 0M43.99 295.61a1.4 1.5 0 1 0 2.8 0a1.4 1.5 0 1 0 -2.8 0M49.25 303.41a1.4 1.5 0 1 0 2.8 0a1.4 1.5 0 1 0 -2.8 0M52.20 282.45m-1.3 0a1.3 1.6 0 1 0 2.6 0a1.3 1.6 0 1 0 -2.6 0M53.00 252.45m-1.2 0a1.2 1.6 0 1 0 2.4 0a1.2 1.6 0 1 0 -2.4 0M53.94 220.36a1.4 1.5 0 1 0 2.8 0a1.4 1.5 0 1 0 -2.8 0M58.42 225.83a1.4 1.5 0 1 0 2.8 0a1.4 1.5 0 1 0 -2.8 0M57.27 231.94a1.4 1.5 0 1 0 2.8 0a1.4 1.5 0 1 0 -2.8 0M62.29 239.31a1.4 1.5 0 1 0 2.8 0a1.4 1.5 0 1 0 -2.8 0M60.99 244.91a1.4 1.5 0 1 0 2.8 0a1.4 1.5 0 1 0 -2.8 0M65.62 250.88a1.4 1.5 0 1 0 2.8 0a1.4 1.5 0 1 0 -2.8 0M65.30 259.91a1.4 1.5 0 1 0 2.8 0a1.4 1.5 0 1 0 -2.8 0M69.46 264.25a1.4 1.5 0 1 0 2.8 0a1.4 1.5 0 1 0 -2.8 0M68.76 271.96a1.4 1.5 0 1 0 2.8 0a1.4 1.5 0 1 0 -2.8 0M73.51 278.37a1.4 1.5 0 1 0 2.8 0a1.4 1.5 0 1 0 -2.8 0M72.24 284.10a1.4 1.5 0 1 0 2.8 0a1.4 1.5 0 1 0 -2.8 0M76.73 289.59a1.4 1.5 0 1 0 2.8 0a1.4 1.5 0 1 0 -2.8 0M76.20 297.88a1.4 1.5 0 1 0 2.8 0a1.4 1.5 0 1 0 -2.8 0M80.77 303.65a1.4 1.5 0 1 0 2.8 0a1.4 1.5 0 1 0 -2.8 0M84.37 285.12m-1.3 0a1.3 1.6 0 1 0 2.6 0a1.3 1.6 0 1 0 -2.6 0M85.17 255.12m-1.2 0a1.2 1.6 0 1 0 2.4 0a1.2 1.6 0 1 0 -2.4 0M86.52 221.62a1.4 1.5 0 1 0 2.8 0a1.4 1.5 0 1 0 -2.8 0M91.03 227.13a1.4 1.5 0 1 0 2.8 0a1.4 1.5 0 1 0 -2.8 0M90.64 235.87a1.4 1.5 0 1 0 2.8 0a1.4 1.5 0 1 0 -2.8 0M95.00 240.85a1.4 1.5 0 1 0 2.8 0a1.4 1.5 0 1 0 -2.8 0M94.24 248.28a1.4 1.5 0 1 0 2.8 0a1.4 1.5 0 1 0 -2.8 0M98.62 253.36a1.4 1.5 0 1 0 2.8 0a1.4 1.5 0 1 0 -2.8 0M97.93 261.02a1.4 1.5 0 1 0 2.8 0a1.4 1.5 0 1 0 -2.8 0M102.09 265.33a1.4 1.5 0 1 0 2.8 0a1.4 1.5 0 1 0 -2.8 0M101.25 272.52a1.4 1.5 0 1 0 2.8 0a1.4 1.5 0 1 0 -2.8 0M105.69 277.75a1.4 1.5 0 1 0 2.8 0a1.4 1.5 0 1 0 -2.8 0M104.43 283.49a1.4 1.5 0 1 0 2.8 0a1.4 1.5 0 1 0 -2.8 0M109.42 290.65a1.4 1.5 0 1 0 2.8 0a1.4 1.5 0 1 0 -2.8 0M109.13 299.73a1.4 1.5 0 1 0 2.8 0a1.4 1.5 0 1 0 -2.8 0M113.38 304.34a1.4 1.5 0 1 0 2.8 0a1.4 1.5 0 1 0 -2.8 0M116.54 284.23m-1.3 0a1.3 1.6 0 1 0 2.6 0a1.3 1.6 0 1 0 -2.6 0M117.34 254.23m-1.2 0a1.2 1.6 0 1 0 2.4 0a1.2 1.6 0 1 0 -2.4 0M118.40 222.56a1.4 1.5 0 1 0 2.8 0a1.4 1.5 0 1 0 -2.8 0M123.32 229.41a1.4 1.5 0 1 0 2.8 0a1.4 1.5 0 1 0 -2.8 0M122.06 235.08a1.4 1.5 0 1 0 2.8 0a1.4 1.5 0 1 0 -2.8 0M127.15 242.48a1.4 1.5 0 1 0 2.8 0a1.4 1.5 0 1 0 -2.8 0M126.58 250.49a1.4 1.5 0 1 0 2.8 0a1.4 1.5 0 1 0 -2.8 0M131.40 257.01a1.4 1.5 0 1 0 2.8 0a1.4 1.5 0 1 0 -2.8 0M131.07 265.84a1.4 1.5 0 1 0 2.8 0a1.4 1.5 0 1 0 -2.8 0M135.55 271.17a1.4 1.5 0 1 0 2.8 0a1.4 1.5 0 1 0 -2.8 0M135.17 279.82a1.4 1.5 0 1 0 2.8 0a1.4 1.5 0 1 0 -2.8 0M140.02 286.43a1.4 1.5 0 1 0 2.8 0a1.4 1.5 0 1 0 -2.8 0M138.89 292.52a1.4 1.5 0 1 0 2.8 0a1.4 1.5 0 1 0 -2.8 0M143.78 299.25a1.4 1.5 0 1 0 2.8 0a1.4 1.5 0 1 0 -2.8 0M143.16 307.13a1.4 1.5 0 1 0 2.8 0a1.4 1.5 0 1 0 -2.8 0M148.71 285.15m-1.3 0a1.3 1.6 0 1 0 2.6 0a1.3 1.6 0 1 0 -2.6 0M149.51 255.15m-1.2 0a1.2 1.6 0 1 0 2.4 0a1.2 1.6 0 1 0 -2.4 0M150.67 222.10a1.4 1.5 0 1 0 2.8 0a1.4 1.5 0 1 0 -2.8 0M155.53 228.61a1.4 1.5 0 1 0 2.8 0a1.4 1.5 0 1 0 -2.8 0M154.31 234.32a1.4 1.5 0 1 0 2.8 0a1.4 1.5 0 1 0 -2.8 0M158.59 238.88a1.4 1.5 0 1 0 2.8 0a1.4 1.5 0 1 0 -2.8 0M158.45 248.20a1.4 1.5 0 1 0 2.8 0a1.4 1.5 0 1 0 -2.8 0M162.78 252.93a1.4 1.5 0 1 0 2.8 0a1.4 1.5 0 1 0 -2.8 0M162.31 261.15a1.4 1.5 0 1 0 2.8 0a1.4 1.5 0 1 0 -2.8 0M166.93 266.84a1.4 1.5 0 1 0 2.8 0a1.4 1.5 0 1 0 -2.8 0M166.78 276.13a1.4 1.5 0 1 0 2.8 0a1.4 1.5 0 1 0 -2.8 0M171.68 282.77a1.4 1.5 0 1 0 2.8 0a1.4 1.5 0 1 0 -2.8 0M170.80 289.63a1.4 1.5 0 1 0 2.8 0a1.4 1.5 0 1 0 -2.8 0M175.09 294.22a1.4 1.5 0 1 0 2.8 0a1.4 1.5 0 1 0 -2.8 0M174.20 301.03a1.4 1.5 0 1 0 2.8 0a1.4 1.5 0 1 0 -2.8 0M180.88 282.80m-1.3 0a1.3 1.6 0 1 0 2.6 0a1.3 1.6 0 1 0 -2.6 0M181.68 252.80m-1.2 0a1.2 1.6 0 1 0 2.4 0a1.2 1.6 0 1 0 -2.4 0M182.99 223.18a1.4 1.5 0 1 0 2.8 0a1.4 1.5 0 1 0 -2.8 0M187.84 229.61a1.4 1.5 0 1 0 2.8 0a1.4 1.5 0 1 0 -2.8 0M187.12 237.00a1.4 1.5 0 1 0 2.8 0a1.4 1.5 0 1 0 -2.8 0M191.33 241.29a1.4 1.5 0 1 0 2.8 0a1.4 1.5 0 1 0 -2.8 0M190.89 249.60a1.4 1.5 0 1 0 2.8 0a1.4 1.5 0 1 0 -2.8 0M195.34 254.71a1.4 1.5 0 1 0 2.8 0a1.4 1.5 0 1 0 -2.8 0M194.85 262.82a1.4 1.5 0 1 0 2.8 0a1.4 1.5 0 1 0 -2.8 0M199.12 267.34a1.4 1.5 0 1 0 2.8 0a1.4 1.5 0 1 0 -2.8 0M198.78 275.96a1.4 1.5 0 1 0 2.8 0a1.4 1.5 0 1 0 -2.8 0M203.21 281.02a1.4 1.5 0 1 0 2.8 0a1.4 1.5 0 1 0 -2.8 0M202.58 288.66a1.4 1.5 0 1 0 2.8 0a1.4 1.5 0 1 0 -2.8 0M206.98 293.61a1.4 1.5 0 1 0 2.8 0a1.4 1.5 0 1 0 -2.8 0M206.65 302.28a1.4 1.5 0 1 0 2.8 0a1.4 1.5 0 1 0 -2.8 0M213.05 283.09m-1.3 0a1.3 1.6 0 1 0 2.6 0a1.3 1.6 0 1 0 -2.6 0M213.85 253.09m-1.2 0a1.2 1.6 0 1 0 2.4 0a1.2 1.6 0 1 0 -2.4 0M214.70 219.83a1.4 1.5 0 1 0 2.8 0a1.4 1.5 0 1 0 -2.8 0M219.47 226.29a1.4 1.5 0 1 0 2.8 0a1.4 1.5 0 1 0 -2.8 0M218.39 232.67a1.4 1.5 0 1 0 2.8 0a1.4 1.5 0 1 0 -2.8 0M222.91 238.29a1.4 1.5 0 1 0 2.8 0a1.4 1.5 0 1 0 -2.8 0M222.31 246.36a1.4 1.5 0 1 0 2.8 0a1.4 1.5 0 1 0 -2.8 0M226.85 252.05a1.4 1.5 0 1 0 2.8 0a1.4 1.5 0 1 0 -2.8 0M226.17 259.82a1.4 1.5 0 1 0 2.8 0a1.4 1.5 0 1 0 -2.8 0M230.59 265.07a1.4 1.5 0 1 0 2.8 0a1.4 1.5 0 1 0 -2.8 0M229.63 271.89a1.4 1.5 0 1 0 2.8 0a1.4 1.5 0 1 0 -2.8 0M234.65 279.21a1.4 1.5 0 1 0 2.8 0a1.4 1.5 0 1 0 -2.8 0M233.34 284.83a1.4 1.5 0 1 0 2.8 0a1.4 1.5 0 1 0 -2.8 0M238.16 291.46a1.4 1.5 0 1 0 2.8 0a1.4 1.5 0 1 0 -2.8 0M236.97 297.47a1.4 1.5 0 1 0 2.8 0a1.4 1.5 0 1 0 -2.8 0M241.96 304.71a1.4 1.5 0 1 0 2.8 0a1.4 1.5 0 1 0 -2.8 0M245.22 285.01m-1.3 0a1.3 1.6 0 1 0 2.6 0a1.3 1.6 0 1 0 -2.6 0M246.02 255.01m-1.2 0a1.2 1.6 0 1 0 2.4 0a1.2 1.6 0 1 0 -2.4 0M246.79 219.74a1.4 1.5 0 1 0 2.8 0a1.4 1.5 0 1 0 -2.8 0M250.97 224.04a1.4 1.5 0 1 0 2.8 0a1.4 1.5 0 1 0 -2.8 0M250.42 232.15a1.4 1.5 0 1 0 2.8 0a1.4 1.5 0 1 0 -2.8 0M254.67 236.72a1.4 1.5 0 1 0 2.8 0a1.4 1.5 0 1 0 -2.8 0M253.71 243.41a1.4 1.5 0 1 0 2.8 0a1.4 1.5 0 1 0 -2.8 0M258.18 248.72a1.4 1.5 0 1 0 2.8 0a1.4 1.5 0 1 0 -2.8 0M256.92 254.41a1.4 1.5 0 1 0 2.8 0a1.4 1.5 0 1 0 -2.8 0M261.64 260.58a1.4 1.5 0 1 0 2.8 0a1.4 1.5 0 1 0 -2.8 0M260.74 267.48a1.4 1.5 0 1 0 2.8 0a1.4 1.5 0 1 0 -2.8 0M265.75 274.66a1.4 1.5 0 1 0 2.8 0a1.4 1.5 0 1 0 -2.8 0M264.68 280.98a1.4 1.5 0 1 0 2.8 0a1.4 1.5 0 1 0 -2.8 0M269.70 288.16a1.4 1.5 0 1 0 2.8 0a1.4 1.5 0 1 0 -2.8 0M269.34 296.92a1.4 1.5 0 1 0 2.8 0a1.4 1.5 0 1 0 -2.8 0M274.48 304.55a1.4 1.5 0 1 0 2.8 0a1.4 1.5 0 1 0 -2.8 0M277.39 283.54m-1.3 0a1.3 1.6 0 1 0 2.6 0a1.3 1.6 0 1 0 -2.6 0M278.19 253.54m-1.2 0a1.2 1.6 0 1 0 2.4 0a1.2 1.6 0 1 0 -2.4 0M278.95 220.56a1.4 1.5 0 1 0 2.8 0a1.4 1.5 0 1 0 -2.8 0M283.93 227.38a1.4 1.5 0 1 0 2.8 0a1.4 1.5 0 1 0 -2.8 0M282.98 233.93a1.4 1.5 0 1 0 2.8 0a1.4 1.5 0 1 0 -2.8 0M288.13 241.29a1.4 1.5 0 1 0 2.8 0a1.4 1.5 0 1 0 -2.8 0M287.95 250.38a1.4 1.5 0 1 0 2.8 0a1.4 1.5 0 1 0 -2.8 0M292.64 256.24a1.4 1.5 0 1 0 2.8 0a1.4 1.5 0 1 0 -2.8 0M292.11 264.16a1.4 1.5 0 1 0 2.8 0a1.4 1.5 0 1 0 -2.8 0M296.91 270.38a1.4 1.5 0 1 0 2.8 0a1.4 1.5 0 1 0 -2.8 0M296.40 278.37a1.4 1.5 0 1 0 2.8 0a1.4 1.5 0 1 0 -2.8 0M301.49 285.52a1.4 1.5 0 1 0 2.8 0a1.4 1.5 0 1 0 -2.8 0M300.33 291.38a1.4 1.5 0 1 0 2.8 0a1.4 1.5 0 1 0 -2.8 0M304.48 295.45a1.4 1.5 0 1 0 2.8 0a1.4 1.5 0 1 0 -2.8 0M303.94 303.34a1.4 1.5 0 1 0 2.8 0a1.4 1.5 0 1 0 -2.8 0M309.56 281.51m-1.3 0a1.3 1.6 0 1 0 2.6 0a1.3 1.6 0 1 0 -2.6 0M310.36 251.51m-1.2 0a1.2 1.6 0 1 0 2.4 0a1.2 1.6 0 1 0 -2.4 0M311.08 222.15a1.4 1.5 0 1 0 2.8 0a1.4 1.5 0 1 0 -2.8 0M315.57 227.36a1.4 1.5 0 1 0 2.8 0a1.4 1.5 0 1 0 -2.8 0M315.30 236.14a1.4 1.5 0 1 0 2.8 0a1.4 1.5 0 1 0 -2.8 0M319.71 241.08a1.4 1.5 0 1 0 2.8 0a1.4 1.5 0 1 0 -2.8 0M319.15 248.95a1.4 1.5 0 1 0 2.8 0a1.4 1.5 0 1 0 -2.8 0M323.62 254.08a1.4 1.5 0 1 0 2.8 0a1.4 1.5 0 1 0 -2.8 0M323.17 262.28a1.4 1.5 0 1 0 2.8 0a1.4 1.5 0 1 0 -2.8 0M327.52 267.04a1.4 1.5 0 1 0 2.8 0a1.4 1.5 0 1 0 -2.8 0M326.45 273.20a1.4 1.5 0 1 0 2.8 0a1.4 1.5 0 1 0 -2.8 0M330.72 277.66a1.4 1.5 0 1 0 2.8 0a1.4 1.5 0 1 0 -2.8 0M329.92 284.72a1.4 1.5 0 1 0 2.8 0a1.4 1.5 0 1 0 -2.8 0M334.63 290.65a1.4 1.5 0 1 0 2.8 0a1.4 1.5 0 1 0 -2.8 0M333.81 297.62a1.4 1.5 0 1 0 2.8 0a1.4 1.5 0 1 0 -2.8 0M338.40 303.17a1.4 1.5 0 1 0 2.8 0a1.4 1.5 0 1 0 -2.8 0M341.73 283.45m-1.3 0a1.3 1.6 0 1 0 2.6 0a1.3 1.6 0 1 0 -2.6 0M342.53 253.45m-1.2 0a1.2 1.6 0 1 0 2.4 0a1.2 1.6 0 1 0 -2.4 0M343.90 223.67a1.4 1.5 0 1 0 2.8 0a1.4 1.5 0 1 0 -2.8 0M348.76 230.10a1.4 1.5 0 1 0 2.8 0a1.4 1.5 0 1 0 -2.8 0M348.34 238.43a1.4 1.5 0 1 0 2.8 0a1.4 1.5 0 1 0 -2.8 0M352.64 242.97a1.4 1.5 0 1 0 2.8 0a1.4 1.5 0 1 0 -2.8 0M352.25 251.38a1.4 1.5 0 1 0 2.8 0a1.4 1.5 0 1 0 -2.8 0M356.85 256.95a1.4 1.5 0 1 0 2.8 0a1.4 1.5 0 1 0 -2.8 0M356.05 264.02a1.4 1.5 0 1 0 2.8 0a1.4 1.5 0 1 0 -2.8 0M360.67 269.66a1.4 1.5 0 1 0 2.8 0a1.4 1.5 0 1 0 -2.8 0M359.92 276.86a1.4 1.5 0 1 0 2.8 0a1.4 1.5 0 1 0 -2.8 0M364.50 282.34a1.4 1.5 0 1 0 2.8 0a1.4 1.5 0 1 0 -2.8 0M364.24 291.22a1.4 1.5 0 1 0 2.8 0a1.4 1.5 0 1 0 -2.8 0M368.39 295.26a1.4 1.5 0 1 0 2.8 0a1.4 1.5 0 1 0 -2.8 0M367.56 302.23a1.4 1.5 0 1 0 2.8 0a1.4 1.5 0 1 0 -2.8 0M373.90 282.80m-1.3 0a1.3 1.6 0 1 0 2.6 0a1.3 1.6 0 1 0 -2.6 0M374.70 252.80m-1.2 0a1.2 1.6 0 1 0 2.4 0a1.2 1.6 0 1 0 -2.4 0M375.34 219.80a1.4 1.5 0 1 0 2.8 0a1.4 1.5 0 1 0 -2.8 0M379.70 224.61a1.4 1.5 0 1 0 2.8 0a1.4 1.5 0 1 0 -2.8 0M379.35 233.18a1.4 1.5 0 1 0 2.8 0a1.4 1.5 0 1 0 -2.8 0M383.98 238.87a1.4 1.5 0 1 0 2.8 0a1.4 1.5 0 1 0 -2.8 0M383.86 248.25a1.4 1.5 0 1 0 2.8 0a1.4 1.5 0 1 0 -2.8 0M389.12 256.03a1.4 1.5 0 1 0 2.8 0a1.4 1.5 0 1 0 -2.8 0M388.13 262.50a1.4 1.5 0 1 0 2.8 0a1.4 1.5 0 1 0 -2.8 0M393.16 269.52a1.4 1.5 0 1 0 2.8 0a1.4 1.5 0 1 0 -2.8 0M392.25 276.24a1.4 1.5 0 1 0 2.8 0a1.4 1.5 0 1 0 -2.8 0M396.80 281.67a1.4 1.5 0 1 0 2.8 0a1.4 1.5 0 1 0 -2.8 0M395.88 288.36a1.4 1.5 0 1 0 2.8 0a1.4 1.5 0 1 0 -2.8 0M400.26 293.21a1.4 1.5 0 1 0 2.8 0a1.4 1.5 0 1 0 -2.8 0M399.13 299.21a1.4 1.5 0 1 0 2.8 0a1.4 1.5 0 1 0 -2.8 0M406.07 281.80m-1.3 0a1.3 1.6 0 1 0 2.6 0a1.3 1.6 0 1 0 -2.6 0M406.87 251.80m-1.2 0a1.2 1.6 0 1 0 2.4 0a1.2 1.6 0 1 0 -2.4 0M407.97 221.91a1.4 1.5 0 1 0 2.8 0a1.4 1.5 0 1 0 -2.8 0M412.21 226.38a1.4 1.5 0 1 0 2.8 0a1.4 1.5 0 1 0 -2.8 0M410.98 232.08a1.4 1.5 0 1 0 2.8 0a1.4 1.5 0 1 0 -2.8 0M415.28 236.75a1.4 1.5 0 1 0 2.8 0a1.4 1.5 0 1 0 -2.8 0M414.35 243.48a1.4 1.5 0 1 0 2.8 0a1.4 1.5 0 1 0 -2.8 0M419.15 249.85a1.4 1.5 0 1 0 2.8 0a1.4 1.5 0 1 0 -2.8 0M418.44 257.31a1.4 1.5 0 1 0 2.8 0a1.4 1.5 0 1 0 -2.8 0M423.05 263.03a1.4 1.5 0 1 0 2.8 0a1.4 1.5 0 1 0 -2.8 0M422.00 269.35a1.4 1.5 0 1 0 2.8 0a1.4 1.5 0 1 0 -2.8 0M426.65 275.20a1.4 1.5 0 1 0 2.8 0a1.4 1.5 0 1 0 -2.8 0M426.09 283.20a1.4 1.5 0 1 0 2.8 0a1.4 1.5 0 1 0 -2.8 0M431.06 290.13a1.4 1.5 0 1 0 2.8 0a1.4 1.5 0 1 0 -2.8 0M430.88 299.40a1.4 1.5 0 1 0 2.8 0a1.4 1.5 0 1 0 -2.8 0M435.34 304.59a1.4 1.5 0 1 0 2.8 0a1.4 1.5 0 1 0 -2.8 0M438.24 283.52m-1.3 0a1.3 1.6 0 1 0 2.6 0a1.3 1.6 0 1 0 -2.6 0M439.04 253.52m-1.2 0a1.2 1.6 0 1 0 2.4 0a1.2 1.6 0 1 0 -2.4 0M439.71 220.97a1.4 1.5 0 1 0 2.8 0a1.4 1.5 0 1 0 -2.8 0M444.33 226.54a1.4 1.5 0 1 0 2.8 0a1.4 1.5 0 1 0 -2.8 0M443.42 233.18a1.4 1.5 0 1 0 2.8 0a1.4 1.5 0 1 0 -2.8 0M448.27 239.51a1.4 1.5 0 1 0 2.8 0a1.4 1.5 0 1 0 -2.8 0M447.72 247.35a1.4 1.5 0 1 0 2.8 0a1.4 1.5 0 1 0 -2.8 0M452.53 253.57a1.4 1.5 0 1 0 2.8 0a1.4 1.5 0 1 0 -2.8 0M451.93 261.22a1.4 1.5 0 1 0 2.8 0a1.4 1.5 0 1 0 -2.8 0M456.61 267.01a1.4 1.5 0 1 0 2.8 0a1.4 1.5 0 1 0 -2.8 0M455.70 273.65a1.4 1.5 0 1 0 2.8 0a1.4 1.5 0 1 0 -2.8 0M460.89 281.10a1.4 1.5 0 1 0 2.8 0a1.4 1.5 0 1 0 -2.8 0M459.94 287.62a1.4 1.5 0 1 0 2.8 0a1.4 1.5 0 1 0 -2.8 0M464.84 294.13a1.4 1.5 0 1 0 2.8 0a1.4 1.5 0 1 0 -2.8 0M463.87 300.57a1.4 1.5 0 1 0 2.8 0a1.4 1.5 0 1 0 -2.8 0M470.41 281.76m-1.3 0a1.3 1.6 0 1 0 2.6 0a1.3 1.6 0 1 0 -2.6 0M471.21 251.76m-1.2 0a1.2 1.6 0 1 0 2.4 0a1.2 1.6 0 1 0 -2.4 0M472.16 222.63a1.4 1.5 0 1 0 2.8 0a1.4 1.5 0 1 0 -2.8 0M476.60 227.74a1.4 1.5 0 1 0 2.8 0a1.4 1.5 0 1 0 -2.8 0M475.72 234.60a1.4 1.5 0 1 0 2.8 0a1.4 1.5 0 1 0 -2.8 0M480.20 239.84a1.4 1.5 0 1 0 2.8 0a1.4 1.5 0 1 0 -2.8 0M479.03 245.72a1.4 1.5 0 1 0 2.8 0a1.4 1.5 0 1 0 -2.8 0M484.10 252.97a1.4 1.5 0 1 0 2.8 0a1.4 1.5 0 1 0 -2.8 0M483.47 260.66a1.4 1.5 0 1 0 2.8 0a1.4 1.5 0 1 0 -2.8 0M488.50 267.74a1.4 1.5 0 1 0 2.8 0a1.4 1.5 0 1 0 -2.8 0M488.35 277.06a1.4 1.5 0 1 0 2.8 0a1.4 1.5 0 1 0 -2.8 0M493.27 283.81a1.4 1.5 0 1 0 2.8 0a1.4 1.5 0 1 0 -2.8 0M492.02 289.43a1.4 1.5 0 1 0 2.8 0a1.4 1.5 0 1 0 -2.8 0M496.67 295.24a1.4 1.5 0 1 0 2.8 0a1.4 1.5 0 1 0 -2.8 0M495.70 301.80a1.4 1.5 0 1 0 2.8 0a1.4 1.5 0 1 0 -2.8 0M502.58 284.25m-1.3 0a1.3 1.6 0 1 0 2.6 0a1.3 1.6 0 1 0 -2.6 0M503.38 254.25m-1.2 0a1.2 1.6 0 1 0 2.4 0a1.2 1.6 0 1 0 -2.4 0M504.64 221.33a1.4 1.5 0 1 0 2.8 0a1.4 1.5 0 1 0 -2.8 0M509.28 227.26a1.4 1.5 0 1 0 2.8 0a1.4 1.5 0 1 0 -2.8 0M508.58 234.89a1.4 1.5 0 1 0 2.8 0a1.4 1.5 0 1 0 -2.8 0M512.86 239.61a1.4 1.5 0 1 0 2.8 0a1.4 1.5 0 1 0 -2.8 0M512.29 247.71a1.4 1.5 0 1 0 2.8 0a1.4 1.5 0 1 0 -2.8 0M516.88 253.47a1.4 1.5 0 1 0 2.8 0a1.4 1.5 0 1 0 -2.8 0M515.89 260.13a1.4 1.5 0 1 0 2.8 0a1.4 1.5 0 1 0 -2.8 0M520.89 267.31a1.4 1.5 0 1 0 2.8 0a1.4 1.5 0 1 0 -2.8 0M519.65 273.09a1.4 1.5 0 1 0 2.8 0a1.4 1.5 0 1 0 -2.8 0M523.73 277.12a1.4 1.5 0 1 0 2.8 0a1.4 1.5 0 1 0 -2.8 0M523.24 285.48a1.4 1.5 0 1 0 2.8 0a1.4 1.5 0 1 0 -2.8 0M527.74 290.95a1.4 1.5 0 1 0 2.8 0a1.4 1.5 0 1 0 -2.8 0M527.35 299.65a1.4 1.5 0 1 0 2.8 0a1.4 1.5 0 1 0 -2.8 0M531.95 305.46a1.4 1.5 0 1 0 2.8 0a1.4 1.5 0 1 0 -2.8 0M534.75 284.11m-1.3 0a1.3 1.6 0 1 0 2.6 0a1.3 1.6 0 1 0 -2.6 0M535.55 254.11m-1.2 0a1.2 1.6 0 1 0 2.4 0a1.2 1.6 0 1 0 -2.4 0M536.18 221.09a1.4 1.5 0 1 0 2.8 0a1.4 1.5 0 1 0 -2.8 0M540.52 225.89a1.4 1.5 0 1 0 2.8 0a1.4 1.5 0 1 0 -2.8 0M540.19 234.67a1.4 1.5 0 1 0 2.8 0a1.4 1.5 0 1 0 -2.8 0M544.33 238.82a1.4 1.5 0 1 0 2.8 0a1.4 1.5 0 1 0 -2.8 0M543.07 244.44a1.4 1.5 0 1 0 2.8 0a1.4 1.5 0 1 0 -2.8 0M547.81 250.63a1.4 1.5 0 1 0 2.8 0a1.4 1.5 0 1 0 -2.8 0M546.90 257.45a1.4 1.5 0 1 0 2.8 0a1.4 1.5 0 1 0 -2.8 0M551.24 262.25a1.4 1.5 0 1 0 2.8 0a1.4 1.5 0 1 0 -2.8 0M550.64 270.13a1.4 1.5 0 1 0 2.8 0a1.4 1.5 0 1 0 -2.8 0M554.97 274.90a1.4 1.5 0 1 0 2.8 0a1.4 1.5 0 1 0 -2.8 0M553.72 280.58a1.4 1.5 0 1 0 2.8 0a1.4 1.5 0 1 0 -2.8 0M558.81 287.93a1.4 1.5 0 1 0 2.8 0a1.4 1.5 0 1 0 -2.8 0M557.90 294.76a1.4 1.5 0 1 0 2.8 0a1.4 1.5 0 1 0 -2.8 0M562.94 301.95a1.4 1.5 0 1 0 2.8 0a1.4 1.5 0 1 0 -2.8 0M566.92 284.54m-1.3 0a1.3 1.6 0 1 0 2.6 0a1.3 1.6 0 1 0 -2.6 0M567.72 254.54m-1.2 0a1.2 1.6 0 1 0 2.4 0a1.2 1.6 0 1 0 -2.4 0M568.58 221.53a1.4 1.5 0 1 0 2.8 0a1.4 1.5 0 1 0 -2.8 0M573.55 228.53a1.4 1.5 0 1 0 2.8 0a1.4 1.5 0 1 0 -2.8 0M572.64 235.35a1.4 1.5 0 1 0 2.8 0a1.4 1.5 0 1 0 -2.8 0M577.07 240.53a1.4 1.5 0 1 0 2.8 0a1.4 1.5 0 1 0 -2.8 0M576.31 247.87a1.4 1.5 0 1 0 2.8 0a1.4 1.5 0 1 0 -2.8 0M580.58 252.45a1.4 1.5 0 1 0 2.8 0a1.4 1.5 0 1 0 -2.8 0M580.38 261.73a1.4 1.5 0 1 0 2.8 0a1.4 1.5 0 1 0 -2.8 0M584.92 267.24a1.4 1.5 0 1 0 2.8 0a1.4 1.5 0 1 0 -2.8 0M583.85 273.55a1.4 1.5 0 1 0 2.8 0a1.4 1.5 0 1 0 -2.8 0M588.52 279.49a1.4 1.5 0 1 0 2.8 0a1.4 1.5 0 1 0 -2.8 0M587.55 286.13a1.4 1.5 0 1 0 2.8 0a1.4 1.5 0 1 0 -2.8 0M591.67 290.22a1.4 1.5 0 1 0 2.8 0a1.4 1.5 0 1 0 -2.8 0M591.23 298.66a1.4 1.5 0 1 0 2.8 0a1.4 1.5 0 1 0 -2.8 0M595.48 303.20a1.4 1.5 0 1 0 2.8 0a1.4 1.5 0 1 0 -2.8 0M599.09 284.57m-1.3 0a1.3 1.6 0 1 0 2.6 0a1.3 1.6 0 1 0 -2.6 0M599.89 254.57m-1.2 0a1.2 1.6 0 1 0 2.4 0a1.2 1.6 0 1 0 -2.4 0M600.66 221.88a1.4 1.5 0 1 0 2.8 0a1.4 1.5 0 1 0 -2.8 0M605.29 227.43a1.4 1.5 0 1 0 2.8 0a1.4 1.5 0 1 0 -2.8 0M604.40 234.10a1.4 1.5 0 1 0 2.8 0a1.4 1.5 0 1 0 -2.8 0M609.39 240.85a1.4 1.5 0 1 0 2.8 0a1.4 1.5 0 1 0 -2.8 0M608.61 247.91a1.4 1.5 0 1 0 2.8 0a1.4 1.5 0 1 0 -2.8 0M613.01 252.70a1.4 1.5 0 1 0 2.8 0a1.4 1.5 0 1 0 -2.8 0M612.94 262.05a1.4 1.5 0 1 0 2.8 0a1.4 1.5 0 1 0 -2.8 0M617.62 267.81a1.4 1.5 0 1 0 2.8 0a1.4 1.5 0 1 0 -2.8 0M617.12 275.74a1.4 1.5 0 1 0 2.8 0a1.4 1.5 0 1 0 -2.8 0M622.28 283.06a1.4 1.5 0 1 0 2.8 0a1.4 1.5 0 1 0 -2.8 0M621.36 289.63a1.4 1.5 0 1 0 2.8 0a1.4 1.5 0 1 0 -2.8 0M626.00 295.22a1.4 1.5 0 1 0 2.8 0a1.4 1.5 0 1 0 -2.8 0M625.76 304.02a1.4 1.5 0 1 0 2.8 0a1.4 1.5 0 1 0 -2.8 0M631.26 281.75m-1.3 0a1.3 1.6 0 1 0 2.6 0a1.3 1.6 0 1 0 -2.6 0M632.06 251.75m-1.2 0a1.2 1.6 0 1 0 2.4 0a1.2 1.6 0 1 0 -2.4 0M632.91 220.62a1.4 1.5 0 1 0 2.8 0a1.4 1.5 0 1 0 -2.8 0M637.67 226.75a1.4 1.5 0 1 0 2.8 0a1.4 1.5 0 1 0 -2.8 0M636.66 233.14a1.4 1.5 0 1 0 2.8 0a1.4 1.5 0 1 0 -2.8 0M641.12 238.27a1.4 1.5 0 1 0 2.8 0a1.4 1.5 0 1 0 -2.8 0M640.03 244.40a1.4 1.5 0 1 0 2.8 0a1.4 1.5 0 1 0 -2.8 0M644.66 250.08a1.4 1.5 0 1 0 2.8 0a1.4 1.5 0 1 0 -2.8 0M643.86 257.15a1.4 1.5 0 1 0 2.8 0a1.4 1.5 0 1 0 -2.8 0M648.13 261.66a1.4 1.5 0 1 0 2.8 0a1.4 1.5 0 1 0 -2.8 0M647.99 270.95a1.4 1.5 0 1 0 2.8 0a1.4 1.5 0 1 0 -2.8 0M652.25 275.41a1.4 1.5 0 1 0 2.8 0a1.4 1.5 0 1 0 -2.8 0M651.69 283.28a1.4 1.5 0 1 0 2.8 0a1.4 1.5 0 1 0 -2.8 0M656.13 288.37a1.4 1.5 0 1 0 2.8 0a1.4 1.5 0 1 0 -2.8 0M655.25 295.18a1.4 1.5 0 1 0 2.8 0a1.4 1.5 0 1 0 -2.8 0M660.20 301.95a1.4 1.5 0 1 0 2.8 0a1.4 1.5 0 1 0 -2.8 0M663.43 281.92m-1.3 0a1.3 1.6 0 1 0 2.6 0a1.3 1.6 0 1 0 -2.6 0M664.23 251.92m-1.2 0a1.2 1.6 0 1 0 2.4 0a1.2 1.6 0 1 0 -2.4 0M664.97 222.01a1.4 1.5 0 1 0 2.8 0a1.4 1.5 0 1 0 -2.8 0M670.18 229.51a1.4 1.5 0 1 0 2.8 0a1.4 1.5 0 1 0 -2.8 0M669.68 237.47a1.4 1.5 0 1 0 2.8 0a1.4 1.5 0 1 0 -2.8 0M673.96 241.92a1.4 1.5 0 1 0 2.8 0a1.4 1.5 0 1 0 -2.8 0M673.64 250.46a1.4 1.5 0 1 0 2.8 0a1.4 1.5 0 1 0 -2.8 0M678.79 257.78a1.4 1.5 0 1 0 2.8 0a1.4 1.5 0 1 0 -2.8 0M678.62 266.82a1.4 1.5 0 1 0 2.8 0a1.4 1.5 0 1 0 -2.8 0M682.90 271.27a1.4 1.5 0 1 0 2.8 0a1.4 1.5 0 1 0 -2.8 0M682.41 279.26a1.4 1.5 0 1 0 2.8 0a1.4 1.5 0 1 0 -2.8 0M686.84 284.19a1.4 1.5 0 1 0 2.8 0a1.4 1.5 0 1 0 -2.8 0M685.97 290.93a1.4 1.5 0 1 0 2.8 0a1.4 1.5 0 1 0 -2.8 0M691.20 298.50a1.4 1.5 0 1 0 2.8 0a1.4 1.5 0 1 0 -2.8 0M695.60 282.25m-1.3 0a1.3 1.6 0 1 0 2.6 0a1.3 1.6 0 1 0 -2.6 0M696.40 252.25m-1.2 0a1.2 1.6 0 1 0 2.4 0a1.2 1.6 0 1 0 -2.4 0M697.57 222.21a1.4 1.5 0 1 0 2.8 0a1.4 1.5 0 1 0 -2.8 0M702.20 228.09a1.4 1.5 0 1 0 2.8 0a1.4 1.5 0 1 0 -2.8 0M701.93 237.22a1.4 1.5 0 1 0 2.8 0a1.4 1.5 0 1 0 -2.8 0M706.84 244.10a1.4 1.5 0 1 0 2.8 0a1.4 1.5 0 1 0 -2.8 0M706.66 253.50a1.4 1.5 0 1 0 2.8 0a1.4 1.5 0 1 0 -2.8 0M711.69 260.79a1.4 1.5 0 1 0 2.8 0a1.4 1.5 0 1 0 -2.8 0M710.97 268.37a1.4 1.5 0 1 0 2.8 0a1.4 1.5 0 1 0 -2.8 0M715.65 274.43a1.4 1.5 0 1 0 2.8 0a1.4 1.5 0 1 0 -2.8 0M714.68 281.12a1.4 1.5 0 1 0 2.8 0a1.4 1.5 0 1 0 -2.8 0M719.80 288.71a1.4 1.5 0 1 0 2.8 0a1.4 1.5 0 1 0 -2.8 0M719.09 296.33a1.4 1.5 0 1 0 2.8 0a1.4 1.5 0 1 0 -2.8 0M724.21 303.91a1.4 1.5 0 1 0 2.8 0a1.4 1.5 0 1 0 -2.8 0M727.77 285.18m-1.3 0a1.3 1.6 0 1 0 2.6 0a1.3 1.6 0 1 0 -2.6 0M728.57 255.18m-1.2 0a1.2 1.6 0 1 0 2.4 0a1.2 1.6 0 1 0 -2.4 0M729.35 219.72a1.4 1.5 0 1 0 2.8 0a1.4 1.5 0 1 0 -2.8 0M733.79 224.86a1.4 1.5 0 1 0 2.8 0a1.4 1.5 0 1 0 -2.8 0M732.53 230.48a1.4 1.5 0 1 0 2.8 0a1.4 1.5 0 1 0 -2.8 0M737.12 236.12a1.4 1.5 0 1 0 2.8 0a1.4 1.5 0 1 0 -2.8 0M736.66 244.44a1.4 1.5 0 1 0 2.8 0a1.4 1.5 0 1 0 -2.8 0M741.48 250.88a1.4 1.5 0 1 0 2.8 0a1.4 1.5 0 1 0 -2.8 0M741.18 259.74a1.4 1.5 0 1 0 2.8 0a1.4 1.5 0 1 0 -2.8 0M745.60 264.83a1.4 1.5 0 1 0 2.8 0a1.4 1.5 0 1 0 -2.8 0M745.16 273.20a1.4 1.5 0 1 0 2.8 0a1.4 1.5 0 1 0 -2.8 0M749.43 277.79a1.4 1.5 0 1 0 2.8 0a1.4 1.5 0 1 0 -2.8 0M748.47 284.42a1.4 1.5 0 1 0 2.8 0a1.4 1.5 0 1 0 -2.8 0M753.34 291.02a1.4 1.5 0 1 0 2.8 0a1.4 1.5 0 1 0 -2.8 0M753.07 300.00a1.4 1.5 0 1 0 2.8 0a1.4 1.5 0 1 0 -2.8 0M757.18 304.01a1.4 1.5 0 1 0 2.8 0a1.4 1.5 0 1 0 -2.8 0M759.94 282.46m-1.3 0a1.3 1.6 0 1 0 2.6 0a1.3 1.6 0 1 0 -2.6 0M760.74 252.46m-1.2 0a1.2 1.6 0 1 0 2.4 0a1.2 1.6 0 1 0 -2.4 0M761.98 222.88a1.4 1.5 0 1 0 2.8 0a1.4 1.5 0 1 0 -2.8 0M766.32 227.77a1.4 1.5 0 1 0 2.8 0a1.4 1.5 0 1 0 -2.8 0M765.85 236.17a1.4 1.5 0 1 0 2.8 0a1.4 1.5 0 1 0 -2.8 0M771.04 243.98a1.4 1.5 0 1 0 2.8 0a1.4 1.5 0 1 0 -2.8 0M770.60 252.51a1.4 1.5 0 1 0 2.8 0a1.4 1.5 0 1 0 -2.8 0M774.89 257.22a1.4 1.5 0 1 0 2.8 0a1.4 1.5 0 1 0 -2.8 0M773.68 263.08a1.4 1.5 0 1 0 2.8 0a1.4 1.5 0 1 0 -2.8 0M778.19 268.56a1.4 1.5 0 1 0 2.8 0a1.4 1.5 0 1 0 -2.8 0M777.67 276.80a1.4 1.5 0 1 0 2.8 0a1.4 1.5 0 1 0 -2.8 0M781.84 281.11a1.4 1.5 0 1 0 2.8 0a1.4 1.5 0 1 0 -2.8 0M781.15 288.74a1.4 1.5 0 1 0 2.8 0a1.4 1.5 0 1 0 -2.8 0M785.48 293.62a1.4 1.5 0 1 0 2.8 0a1.4 1.5 0 1 0 -2.8 0M784.58 300.54a1.4 1.5 0 1 0 2.8 0a1.4 1.5 0 1 0 -2.8 0M792.11 285.42m-1.3 0a1.3 1.6 0 1 0 2.6 0a1.3 1.6 0 1 0 -2.6 0M792.91 255.42m-1.2 0a1.2 1.6 0 1 0 2.4 0a1.2 1.6 0 1 0 -2.4 0M793.67 221.23a1.4 1.5 0 1 0 2.8 0a1.4 1.5 0 1 0 -2.8 0M798.72 228.30a1.4 1.5 0 1 0 2.8 0a1.4 1.5 0 1 0 -2.8 0M798.10 235.93a1.4 1.5 0 1 0 2.8 0a1.4 1.5 0 1 0 -2.8 0M803.29 243.48a1.4 1.5 0 1 0 2.8 0a1.4 1.5 0 1 0 -2.8 0M802.53 250.65a1.4 1.5 0 1 0 2.8 0a1.4 1.5 0 1 0 -2.8 0M807.36 256.98a1.4 1.5 0 1 0 2.8 0a1.4 1.5 0 1 0 -2.8 0M806.74 264.62a1.4 1.5 0 1 0 2.8 0a1.4 1.5 0 1 0 -2.8 0M811.25 269.87a1.4 1.5 0 1 0 2.8 0a1.4 1.5 0 1 0 -2.8 0M810.44 276.90a1.4 1.5 0 1 0 2.8 0a1.4 1.5 0 1 0 -2.8 0M814.84 281.80a1.4 1.5 0 1 0 2.8 0a1.4 1.5 0 1 0 -2.8 0M813.68 287.65a1.4 1.5 0 1 0 2.8 0a1.4 1.5 0 1 0 -2.8 0M818.93 295.38a1.4 1.5 0 1 0 2.8 0a1.4 1.5 0 1 0 -2.8 0M817.89 301.63a1.4 1.5 0 1 0 2.8 0a1.4 1.5 0 1 0 -2.8 0M824.28 282.37m-1.3 0a1.3 1.6 0 1 0 2.6 0a1.3 1.6 0 1 0 -2.6 0M825.08 252.37m-1.2 0a1.2 1.6 0 1 0 2.4 0a1.2 1.6 0 1 0 -2.4 0M826.27 222.57a1.4 1.5 0 1 0 2.8 0a1.4 1.5 0 1 0 -2.8 0M830.88 228.16a1.4 1.5 0 1 0 2.8 0a1.4 1.5 0 1 0 -2.8 0M829.81 234.33a1.4 1.5 0 1 0 2.8 0a1.4 1.5 0 1 0 -2.8 0M834.91 241.60a1.4 1.5 0 1 0 2.8 0a1.4 1.5 0 1 0 -2.8 0M833.99 248.25a1.4 1.5 0 1 0 2.8 0a1.4 1.5 0 1 0 -2.8 0M838.47 253.44a1.4 1.5 0 1 0 2.8 0a1.4 1.5 0 1 0 -2.8 0M838.12 262.00a1.4 1.5 0 1 0 2.8 0a1.4 1.5 0 1 0 -2.8 0M843.06 268.72a1.4 1.5 0 1 0 2.8 0a1.4 1.5 0 1 0 -2.8 0M842.61 276.96a1.4 1.5 0 1 0 2.8 0a1.4 1.5 0 1 0 -2.8 0M847.13 282.27a1.4 1.5 0 1 0 2.8 0a1.4 1.5 0 1 0 -2.8 0M846.72 290.65a1.4 1.5 0 1 0 2.8 0a1.4 1.5 0 1 0 -2.8 0M851.87 298.06a1.4 1.5 0 1 0 2.8 0a1.4 1.5 0 1 0 -2.8 0M856.45 282.52m-1.3 0a1.3 1.6 0 1 0 2.6 0a1.3 1.6 0 1 0 -2.6 0M857.25 252.52m-1.2 0a1.2 1.6 0 1 0 2.4 0a1.2 1.6 0 1 0 -2.4 0M858.27 220.46a1.4 1.5 0 1 0 2.8 0a1.4 1.5 0 1 0 -2.8 0M862.68 225.59a1.4 1.5 0 1 0 2.8 0a1.4 1.5 0 1 0 -2.8 0M861.90 232.94a1.4 1.5 0 1 0 2.8 0a1.4 1.5 0 1 0 -2.8 0M866.00 236.98a1.4 1.5 0 1 0 2.8 0a1.4 1.5 0 1 0 -2.8 0M865.63 245.73a1.4 1.5 0 1 0 2.8 0a1.4 1.5 0 1 0 -2.8 0M870.00 250.71a1.4 1.5 0 1 0 2.8 0a1.4 1.5 0 1 0 -2.8 0M868.75 256.45a1.4 1.5 0 1 0 2.8 0a1.4 1.5 0 1 0 -2.8 0M873.83 263.89a1.4 1.5 0 1 0 2.8 0a1.4 1.5 0 1 0 -2.8 0M873.31 272.10a1.4 1.5 0 1 0 2.8 0a1.4 1.5 0 1 0 -2.8 0M878.46 279.78a1.4 1.5 0 1 0 2.8 0a1.4 1.5 0 1 0 -2.8 0M877.86 287.76a1.4 1.5 0 1 0 2.8 0a1.4 1.5 0 1 0 -2.8 0M882.65 294.19a1.4 1.5 0 1 0 2.8 0a1.4 1.5 0 1 0 -2.8 0M881.55 300.40a1.4 1.5 0 1 0 2.8 0a1.4 1.5 0 1 0 -2.8 0M888.62 283.70m-1.3 0a1.3 1.6 0 1 0 2.6 0a1.3 1.6 0 1 0 -2.6 0M889.42 253.70m-1.2 0a1.2 1.6 0 1 0 2.4 0a1.2 1.6 0 1 0 -2.4 0M890.58 221.08a1.4 1.5 0 1 0 2.8 0a1.4 1.5 0 1 0 -2.8 0M895.14 226.71a1.4 1.5 0 1 0 2.8 0a1.4 1.5 0 1 0 -2.8 0M893.89 232.43a1.4 1.5 0 1 0 2.8 0a1.4 1.5 0 1 0 -2.8 0M898.11 236.91a1.4 1.5 0 1 0 2.8 0a1.4 1.5 0 1 0 -2.8 0M897.57 245.10a1.4 1.5 0 1 0 2.8 0a1.4 1.5 0 1 0 -2.8 0M901.86 249.81a1.4 1.5 0 1 0 2.8 0a1.4 1.5 0 1 0 -2.8 0M901.32 257.97a1.4 1.5 0 1 0 2.8 0a1.4 1.5 0 1 0 -2.8 0M905.79 263.33a1.4 1.5 0 1 0 2.8 0a1.4 1.5 0 1 0 -2.8 0M905.27 271.56a1.4 1.5 0 1 0 2.8 0a1.4 1.5 0 1 0 -2.8 0M910.23 278.57a1.4 1.5 0 1 0 2.8 0a1.4 1.5 0 1 0 -2.8 0M909.84 287.26a1.4 1.5 0 1 0 2.8 0a1.4 1.5 0 1 0 -2.8 0M913.98 291.46a1.4 1.5 0 1 0 2.8 0a1.4 1.5 0 1 0 -2.8 0M913.26 298.99a1.4 1.5 0 1 0 2.8 0a1.4 1.5 0 1 0 -2.8 0M917.45 303.37a1.4 1.5 0 1 0 2.8 0a1.4 1.5 0 1 0 -2.8 0M920.79 283.87m-1.3 0a1.3 1.6 0 1 0 2.6 0a1.3 1.6 0 1 0 -2.6 0M921.59 253.87m-1.2 0a1.2 1.6 0 1 0 2.4 0a1.2 1.6 0 1 0 -2.4 0M922.23 221.99a1.4 1.5 0 1 0 2.8 0a1.4 1.5 0 1 0 -2.8 0M926.81 227.62a1.4 1.5 0 1 0 2.8 0a1.4 1.5 0 1 0 -2.8 0M926.40 236.07a1.4 1.5 0 1 0 2.8 0a1.4 1.5 0 1 0 -2.8 0M931.63 243.91a1.4 1.5 0 1 0 2.8 0a1.4 1.5 0 1 0 -2.8 0M931.26 252.54a1.4 1.5 0 1 0 2.8 0a1.4 1.5 0 1 0 -2.8 0M936.23 259.48a1.4 1.5 0 1 0 2.8 0a1.4 1.5 0 1 0 -2.8 0M935.97 268.47a1.4 1.5 0 1 0 2.8 0a1.4 1.5 0 1 0 -2.8 0M940.42 273.64a1.4 1.5 0 1 0 2.8 0a1.4 1.5 0 1 0 -2.8 0M939.84 281.56a1.4 1.5 0 1 0 2.8 0a1.4 1.5 0 1 0 -2.8 0M944.27 286.66a1.4 1.5 0 1 0 2.8 0a1.4 1.5 0 1 0 -2.8 0M943.71 294.64a1.4 1.5 0 1 0 2.8 0a1.4 1.5 0 1 0 -2.8 0M948.79 301.94a1.4 1.5 0 1 0 2.8 0a1.4 1.5 0 1 0 -2.8 0M952.96 285.17m-1.3 0a1.3 1.6 0 1 0 2.6 0a1.3 1.6 0 1 0 -2.6 0M953.76 255.17m-1.2 0a1.2 1.6 0 1 0 2.4 0a1.2 1.6 0 1 0 -2.4 0M954.61 221.90a1.4 1.5 0 1 0 2.8 0a1.4 1.5 0 1 0 -2.8 0M959.76 229.44a1.4 1.5 0 1 0 2.8 0a1.4 1.5 0 1 0 -2.8 0M959.46 238.31a1.4 1.5 0 1 0 2.8 0a1.4 1.5 0 1 0 -2.8 0M964.56 245.69a1.4 1.5 0 1 0 2.8 0a1.4 1.5 0 1 0 -2.8 0M963.81 253.06a1.4 1.5 0 1 0 2.8 0a1.4 1.5 0 1 0 -2.8 0M968.44 258.84a1.4 1.5 0 1 0 2.8 0a1.4 1.5 0 1 0 -2.8 0M968.09 267.51a1.4 1.5 0 1 0 2.8 0a1.4 1.5 0 1 0 -2.8 0M972.28 271.84a1.4 1.5 0 1 0 2.8 0a1.4 1.5 0 1 0 -2.8 0M971.25 278.22a1.4 1.5 0 1 0 2.8 0a1.4 1.5 0 1 0 -2.8 0M975.51 282.76a1.4 1.5 0 1 0 2.8 0a1.4 1.5 0 1 0 -2.8 0M975.00 290.92a1.4 1.5 0 1 0 2.8 0a1.4 1.5 0 1 0 -2.8 0M979.44 296.06a1.4 1.5 0 1 0 2.8 0a1.4 1.5 0 1 0 -2.8 0M978.65 303.27a1.4 1.5 0 1 0 2.8 0a1.4 1.5 0 1 0 -2.8 0M985.13 284.42m-1.3 0a1.3 1.6 0 1 0 2.6 0a1.3 1.6 0 1 0 -2.6 0M985.93 254.42m-1.2 0a1.2 1.6 0 1 0 2.4 0a1.2 1.6 0 1 0 -2.4 0M986.59 218.85a1.4 1.5 0 1 0 2.8 0a1.4 1.5 0 1 0 -2.8 0M991.00 223.83a1.4 1.5 0 1 0 2.8 0a1.4 1.5 0 1 0 -2.8 0M990.17 230.90a1.4 1.5 0 1 0 2.8 0a1.4 1.5 0 1 0 -2.8 0M994.51 235.67a1.4 1.5 0 1 0 2.8 0a1.4 1.5 0 1 0 -2.8 0M993.43 241.85a1.4 1.5 0 1 0 2.8 0a1.4 1.5 0 1 0 -2.8 0M997.97 247.31a1.4 1.5 0 1 0 2.8 0a1.4 1.5 0 1 0 -2.8 0M996.88 253.49a1.4 1.5 0 1 0 2.8 0a1.4 1.5 0 1 0 -2.8 0M1001.05 257.71a1.4 1.5 0 1 0 2.8 0a1.4 1.5 0 1 0 -2.8 0M1000.73 266.47a1.4 1.5 0 1 0 2.8 0a1.4 1.5 0 1 0 -2.8 0M1005.09 271.32a1.4 1.5 0 1 0 2.8 0a1.4 1.5 0 1 0 -2.8 0M1004.82 280.23a1.4 1.5 0 1 0 2.8 0a1.4 1.5 0 1 0 -2.8 0M1009.18 285.06a1.4 1.5 0 1 0 2.8 0a1.4 1.5 0 1 0 -2.8 0M1008.62 293.01a1.4 1.5 0 1 0 2.8 0a1.4 1.5 0 1 0 -2.8 0M1013.36 299.15a1.4 1.5 0 1 0 2.8 0a1.4 1.5 0 1 0 -2.8 0M1017.30 281.57m-1.3 0a1.3 1.6 0 1 0 2.6 0a1.3 1.6 0 1 0 -2.6 0M1018.10 251.57m-1.2 0a1.2 1.6 0 1 0 2.4 0a1.2 1.6 0 1 0 -2.4 0M1018.71 220.49a1.4 1.5 0 1 0 2.8 0a1.4 1.5 0 1 0 -2.8 0M1023.85 228.11a1.4 1.5 0 1 0 2.8 0a1.4 1.5 0 1 0 -2.8 0M1022.94 234.98a1.4 1.5 0 1 0 2.8 0a1.4 1.5 0 1 0 -2.8 0M1027.64 241.09a1.4 1.5 0 1 0 2.8 0a1.4 1.5 0 1 0 -2.8 0M1026.85 248.41a1.4 1.5 0 1 0 2.8 0a1.4 1.5 0 1 0 -2.8 0M1031.22 253.37a1.4 1.5 0 1 0 2.8 0a1.4 1.5 0 1 0 -2.8 0M1030.50 260.91a1.4 1.5 0 1 0 2.8 0a1.4 1.5 0 1 0 -2.8 0M1035.33 267.47a1.4 1.5 0 1 0 2.8 0a1.4 1.5 0 1 0 -2.8 0M1034.82 275.75a1.4 1.5 0 1 0 2.8 0a1.4 1.5 0 1 0 -2.8 0M1039.64 282.27a1.4 1.5 0 1 0 2.8 0a1.4 1.5 0 1 0 -2.8 0M1039.16 290.62a1.4 1.5 0 1 0 2.8 0a1.4 1.5 0 1 0 -2.8 0M1043.82 296.62a1.4 1.5 0 1 0 2.8 0a1.4 1.5 0 1 0 -2.8 0M1042.97 303.69a1.4 1.5 0 1 0 2.8 0a1.4 1.5 0 1 0 -2.8 0M1049.47 285.01m-1.3 0a1.3 1.6 0 1 0 2.6 0a1.3 1.6 0 1 0 -2.6 0M1050.27 255.01m-1.2 0a1.2 1.6 0 1 0 2.4 0a1.2 1.6 0 1 0 -2.4 0M1050.90 218.97a1.4 1.5 0 1 0 2.8 0a1.4 1.5 0 1 0 -2.8 0M1055.74 225.42a1.4 1.5 0 1 0 2.8 0a1.4 1.5 0 1 0 -2.8 0M1055.61 234.81a1.4 1.5 0 1 0 2.8 0a1.4 1.5 0 1 0 -2.8 0M1060.83 242.54a1.4 1.5 0 1 0 2.8 0a1.4 1.5 0 1 0 -2.8 0M1060.24 250.37a1.4 1.5 0 1 0 2.8 0a1.4 1.5 0 1 0 -2.8 0M1065.16 257.11a1.4 1.5 0 1 0 2.8 0a1.4 1.5 0 1 0 -2.8 0M1064.46 264.58a1.4 1.5 0 1 0 2.8 0a1.4 1.5 0 1 0 -2.8 0M1069.66 272.22a1.4 1.5 0 1 0 2.8 0a1.4 1.5 0 1 0 -2.8 0M1068.50 278.16a1.4 1.5 0 1 0 2.8 0a1.4 1.5 0 1 0 -2.8 0M1073.70 285.82a1.4 1.5 0 1 0 2.8 0a1.4 1.5 0 1 0 -2.8 0M1072.69 292.26a1.4 1.5 0 1 0 2.8 0a1.4 1.5 0 1 0 -2.8 0M1077.27 297.85a1.4 1.5 0 1 0 2.8 0a1.4 1.5 0 1 0 -2.8 0M1076.10 303.74a1.4 1.5 0 1 0 2.8 0a1.4 1.5 0 1 0 -2.8 0M1081.64 281.68m-1.3 0a1.3 1.6 0 1 0 2.6 0a1.3 1.6 0 1 0 -2.6 0M1082.44 251.68m-1.2 0a1.2 1.6 0 1 0 2.4 0a1.2 1.6 0 1 0 -2.4 0M1083.30 222.88a1.4 1.5 0 1 0 2.8 0a1.4 1.5 0 1 0 -2.8 0M1088.18 229.50a1.4 1.5 0 1 0 2.8 0a1.4 1.5 0 1 0 -2.8 0M1087.71 237.77a1.4 1.5 0 1 0 2.8 0a1.4 1.5 0 1 0 -2.8 0M1092.78 245.04a1.4 1.5 0 1 0 2.8 0a1.4 1.5 0 1 0 -2.8 0M1092.29 253.25a1.4 1.5 0 1 0 2.8 0a1.4 1.5 0 1 0 -2.8 0M1097.21 260.00a1.4 1.5 0 1 0 2.8 0a1.4 1.5 0 1 0 -2.8 0M1096.50 267.46a1.4 1.5 0 1 0 2.8 0a1.4 1.5 0 1 0 -2.8 0M1101.24 273.60a1.4 1.5 0 1 0 2.8 0a1.4 1.5 0 1 0 -2.8 0M1100.67 281.58a1.4 1.5 0 1 0 2.8 0a1.4 1.5 0 1 0 -2.8 0M1104.88 285.91a1.4 1.5 0 1 0 2.8 0a1.4 1.5 0 1 0 -2.8 0M1103.92 292.54a1.4 1.5 0 1 0 2.8 0a1.4 1.5 0 1 0 -2.8 0M1108.67 298.72a1.4 1.5 0 1 0 2.8 0a1.4 1.5 0 1 0 -2.8 0M1108.03 306.43a1.4 1.5 0 1 0 2.8 0a1.4 1.5 0 1 0 -2.8 0M1113.81 285.21m-1.3 0a1.3 1.6 0 1 0 2.6 0a1.3 1.6 0 1 0 -2.6 0M1114.61 255.21m-1.2 0a1.2 1.6 0 1 0 2.4 0a1.2 1.6 0 1 0 -2.4 0M1115.72 221.37a1.4 1.5 0 1 0 2.8 0a1.4 1.5 0 1 0 -2.8 0M1119.82 225.44a1.4 1.5 0 1 0 2.8 0a1.4 1.5 0 1 0 -2.8 0M1118.87 232.21a1.4 1.5 0 1 0 2.8 0a1.4 1.5 0 1 0 -2.8 0M1124.06 240.01a1.4 1.5 0 1 0 2.8 0a1.4 1.5 0 1 0 -2.8 0M1123.23 247.19a1.4 1.5 0 1 0 2.8 0a1.4 1.5 0 1 0 -2.8 0M1128.42 255.01a1.4 1.5 0 1 0 2.8 0a1.4 1.5 0 1 0 -2.8 0M1127.68 262.49a1.4 1.5 0 1 0 2.8 0a1.4 1.5 0 1 0 -2.8 0M1131.91 266.97a1.4 1.5 0 1 0 2.8 0a1.4 1.5 0 1 0 -2.8 0M1131.25 274.73a1.4 1.5 0 1 0 2.8 0a1.4 1.5 0 1 0 -2.8 0M1135.51 279.35a1.4 1.5 0 1 0 2.8 0a1.4 1.5 0 1 0 -2.8 0M1135.28 288.58a1.4 1.5 0 1 0 2.8 0a1.4 1.5 0 1 0 -2.8 0M1140.23 295.59a1.4 1.5 0 1 0 2.8 0a1.4 1.5 0 1 0 -2.8 0M1139.39 302.69a1.4 1.5 0 1 0 2.8 0a1.4 1.5 0 1 0 -2.8 0M1145.98 284.35m-1.3 0a1.3 1.6 0 1 0 2.6 0a1.3 1.6 0 1 0 -2.6 0M1146.78 254.35m-1.2 0a1.2 1.6 0 1 0 2.4 0a1.2 1.6 0 1 0 -2.4 0M1147.87 223.03a1.4 1.5 0 1 0 2.8 0a1.4 1.5 0 1 0 -2.8 0M1152.97 230.43a1.4 1.5 0 1 0 2.8 0a1.4 1.5 0 1 0 -2.8 0M1152.76 239.60a1.4 1.5 0 1 0 2.8 0a1.4 1.5 0 1 0 -2.8 0M1157.14 244.57a1.4 1.5 0 1 0 2.8 0a1.4 1.5 0 1 0 -2.8 0M1156.27 251.51a1.4 1.5 0 1 0 2.8 0a1.4 1.5 0 1 0 -2.8 0M1160.62 256.35a1.4 1.5 0 1 0 2.8 0a1.4 1.5 0 1 0 -2.8 0M1159.56 262.67a1.4 1.5 0 1 0 2.8 0a1.4 1.5 0 1 0 -2.8 0M1164.62 269.92a1.4 1.5 0 1 0 2.8 0a1.4 1.5 0 1 0 -2.8 0M1163.66 276.57a1.4 1.5 0 1 0 2.8 0a1.4 1.5 0 1 0 -2.8 0M1168.74 283.91a1.4 1.5 0 1 0 2.8 0a1.4 1.5 0 1 0 -2.8 0M1168.48 292.90a1.4 1.5 0 1 0 2.8 0a1.4 1.5 0 1 0 -2.8 0M1173.66 300.58a1.4 1.5 0 1 0 2.8 0a1.4 1.5 0 1 0 -2.8 0M1178.15 284.91m-1.3 0a1.3 1.6 0 1 0 2.6 0a1.3 1.6 0 1 0 -2.6 0M1178.95 254.91m-1.2 0a1.2 1.6 0 1 0 2.4 0a1.2 1.6 0 1 0 -2.4 0M1180.16 223.24a1.4 1.5 0 1 0 2.8 0a1.4 1.5 0 1 0 -2.8 0M1184.37 227.49a1.4 1.5 0 1 0 2.8 0a1.4 1.5 0 1 0 -2.8 0M1183.86 235.47a1.4 1.5 0 1 0 2.8 0a1.4 1.5 0 1 0 -2.8 0M1188.57 241.37a1.4 1.5 0 1 0 2.8 0a1.4 1.5 0 1 0 -2.8 0M1188.25 249.96a1.4 1.5 0 1 0 2.8 0a1.4 1.5 0 1 0 -2.8 0M1192.62 254.73a1.4 1.5 0 1 0 2.8 0a1.4 1.5 0 1 0 -2.8 0M1192.14 262.81a1.4 1.5 0 1 0 2.8 0a1.4 1.5 0 1 0 -2.8 0M1197.00 269.18a1.4 1.5 0 1 0 2.8 0a1.4 1.5 0 1 0 -2.8 0M1196.27 276.43a1.4 1.5 0 1 0 2.8 0a1.4 1.5 0 1 0 -2.8 0M1200.69 281.36a1.4 1.5 0 1 0 2.8 0a1.4 1.5 0 1 0 -2.8 0M1199.98 288.68a1.4 1.5 0 1 0 2.8 0a1.4 1.5 0 1 0 -2.8 0M1204.88 295.21a1.4 1.5 0 1 0 2.8 0a1.4 1.5 0 1 0 -2.8 0M1204.77 304.51a1.4 1.5 0 1 0 2.8 0a1.4 1.5 0 1 0 -2.8 0M1210.32 282.42m-1.3 0a1.3 1.6 0 1 0 2.6 0a1.3 1.6 0 1 0 -2.6 0M1211.12 252.42m-1.2 0a1.2 1.6 0 1 0 2.4 0a1.2 1.6 0 1 0 -2.4 0M1212.06 220.69a1.4 1.5 0 1 0 2.8 0a1.4 1.5 0 1 0 -2.8 0M1217.11 227.93a1.4 1.5 0 1 0 2.8 0a1.4 1.5 0 1 0 -2.8 0M1216.90 237.09a1.4 1.5 0 1 0 2.8 0a1.4 1.5 0 1 0 -2.8 0M1222.03 244.56a1.4 1.5 0 1 0 2.8 0a1.4 1.5 0 1 0 -2.8 0M1221.69 253.31a1.4 1.5 0 1 0 2.8 0a1.4 1.5 0 1 0 -2.8 0M1226.25 258.87a1.4 1.5 0 1 0 2.8 0a1.4 1.5 0 1 0 -2.8 0M1225.04 264.64a1.4 1.5 0 1 0 2.8 0a1.4 1.5 0 1 0 -2.8 0M1230.12 271.99a1.4 1.5 0 1 0 2.8 0a1.4 1.5 0 1 0 -2.8 0M1229.36 279.29a1.4 1.5 0 1 0 2.8 0a1.4 1.5 0 1 0 -2.8 0M1233.90 284.78a1.4 1.5 0 1 0 2.8 0a1.4 1.5 0 1 0 -2.8 0M1232.80 290.92a1.4 1.5 0 1 0 2.8 0a1.4 1.5 0 1 0 -2.8 0M1237.87 298.22a1.4 1.5 0 1 0 2.8 0a1.4 1.5 0 1 0 -2.8 0M1242.49 282.97m-1.3 0a1.3 1.6 0 1 0 2.6 0a1.3 1.6 0 1 0 -2.6 0M1243.29 252.97m-1.2 0a1.2 1.6 0 1 0 2.4 0a1.2 1.6 0 1 0 -2.4 0M1244.64 222.98a1.4 1.5 0 1 0 2.8 0a1.4 1.5 0 1 0 -2.8 0M1249.37 229.02a1.4 1.5 0 1 0 2.8 0a1.4 1.5 0 1 0 -2.8 0M1248.16 234.76a1.4 1.5 0 1 0 2.8 0a1.4 1.5 0 1 0 -2.8 0M1252.68 240.11a1.4 1.5 0 1 0 2.8 0a1.4 1.5 0 1 0 -2.8 0M1252.15 248.13a1.4 1.5 0 1 0 2.8 0a1.4 1.5 0 1 0 -2.8 0M1256.71 253.61a1.4 1.5 0 1 0 2.8 0a1.4 1.5 0 1 0 -2.8 0M1255.59 259.66a1.4 1.5 0 1 0 2.8 0a1.4 1.5 0 1 0 -2.8 0M1260.34 265.78a1.4 1.5 0 1 0 2.8 0a1.4 1.5 0 1 0 -2.8 0M1259.86 273.95a1.4 1.5 0 1 0 2.8 0a1.4 1.5 0 1 0 -2.8 0M1264.34 279.17a1.4 1.5 0 1 0 2.8 0a1.4 1.5 0 1 0 -2.8 0M1263.66 286.70a1.4 1.5 0 1 0 2.8 0a1.4 1.5 0 1 0 -2.8 0M1268.23 292.23a1.4 1.5 0 1 0 2.8 0a1.4 1.5 0 1 0 -2.8 0M1267.79 300.52a1.4 1.5 0 1 0 2.8 0a1.4 1.5 0 1 0 -2.8 0M1274.66 282.93m-1.3 0a1.3 1.6 0 1 0 2.6 0a1.3 1.6 0 1 0 -2.6 0M1275.46 252.93m-1.2 0a1.2 1.6 0 1 0 2.4 0a1.2 1.6 0 1 0 -2.4 0M1276.42 222.25a1.4 1.5 0 1 0 2.8 0a1.4 1.5 0 1 0 -2.8 0M1281.46 229.33a1.4 1.5 0 1 0 2.8 0a1.4 1.5 0 1 0 -2.8 0M1281.08 237.83a1.4 1.5 0 1 0 2.8 0a1.4 1.5 0 1 0 -2.8 0M1285.96 244.39a1.4 1.5 0 1 0 2.8 0a1.4 1.5 0 1 0 -2.8 0M1284.94 250.74a1.4 1.5 0 1 0 2.8 0a1.4 1.5 0 1 0 -2.8 0M1289.63 256.64a1.4 1.5 0 1 0 2.8 0a1.4 1.5 0 1 0 -2.8 0M1289.52 266.06a1.4 1.5 0 1 0 2.8 0a1.4 1.5 0 1 0 -2.8 0M1294.47 272.83a1.4 1.5 0 1 0 2.8 0a1.4 1.5 0 1 0 -2.8 0M1293.36 278.87a1.4 1.5 0 1 0 2.8 0a1.4 1.5 0 1 0 -2.8 0M1298.42 286.04a1.4 1.5 0 1 0 2.8 0a1.4 1.5 0 1 0 -2.8 0M1297.52 292.79a1.4 1.5 0 1 0 2.8 0a1.4 1.5 0 1 0 -2.8 0M1301.71 297.01a1.4 1.5 0 1 0 2.8 0a1.4 1.5 0 1 0 -2.8 0M1301.08 304.69a1.4 1.5 0 1 0 2.8 0a1.4 1.5 0 1 0 -2.8 0M1306.83 283.32m-1.3 0a1.3 1.6 0 1 0 2.6 0a1.3 1.6 0 1 0 -2.6 0M1307.63 253.32m-1.2 0a1.2 1.6 0 1 0 2.4 0a1.2 1.6 0 1 0 -2.4 0M1308.88 222.70a1.4 1.5 0 1 0 2.8 0a1.4 1.5 0 1 0 -2.8 0M1313.24 227.55a1.4 1.5 0 1 0 2.8 0a1.4 1.5 0 1 0 -2.8 0M1312.52 234.91a1.4 1.5 0 1 0 2.8 0a1.4 1.5 0 1 0 -2.8 0M1316.68 239.08a1.4 1.5 0 1 0 2.8 0a1.4 1.5 0 1 0 -2.8 0M1315.62 245.30a1.4 1.5 0 1 0 2.8 0a1.4 1.5 0 1 0 -2.8 0M1319.85 249.69a1.4 1.5 0 1 0 2.8 0a1.4 1.5 0 1 0 -2.8 0M1318.86 256.16a1.4 1.5 0 1 0 2.8 0a1.4 1.5 0 1 0 -2.8 0M1323.93 263.38a1.4 1.5 0 1 0 2.8 0a1.4 1.5 0 1 0 -2.8 0M1323.41 271.44a1.4 1.5 0 1 0 2.8 0a1.4 1.5 0 1 0 -2.8 0M1328.61 279.09a1.4 1.5 0 1 0 2.8 0a1.4 1.5 0 1 0 -2.8 0M1328.08 287.10a1.4 1.5 0 1 0 2.8 0a1.4 1.5 0 1 0 -2.8 0M1333.07 294.02a1.4 1.5 0 1 0 2.8 0a1.4 1.5 0 1 0 -2.8 0M1332.31 301.30a1.4 1.5 0 1 0 2.8 0a1.4 1.5 0 1 0 -2.8 0M1339.00 283.09m-1.3 0a1.3 1.6 0 1 0 2.6 0a1.3 1.6 0 1 0 -2.6 0M1339.80 253.09m-1.2 0a1.2 1.6 0 1 0 2.4 0a1.2 1.6 0 1 0 -2.4 0M1341.17 221.51a1.4 1.5 0 1 0 2.8 0a1.4 1.5 0 1 0 -2.8 0M1346.03 228.08a1.4 1.5 0 1 0 2.8 0a1.4 1.5 0 1 0 -2.8 0M1345.32 235.55a1.4 1.5 0 1 0 2.8 0a1.4 1.5 0 1 0 -2.8 0M1350.47 243.09a1.4 1.5 0 1 0 2.8 0a1.4 1.5 0 1 0 -2.8 0M1350.31 252.42a1.4 1.5 0 1 0 2.8 0a1.4 1.5 0 1 0 -2.8 0M1354.70 257.38a1.4 1.5 0 1 0 2.8 0a1.4 1.5 0 1 0 -2.8 0M1353.99 264.84a1.4 1.5 0 1 0 2.8 0a1.4 1.5 0 1 0 -2.8 0M1358.47 270.11a1.4 1.5 0 1 0 2.8 0a1.4 1.5 0 1 0 -2.8 0M1357.68 277.32a1.4 1.5 0 1 0 2.8 0a1.4 1.5 0 1 0 -2.8 0M1362.53 283.85a1.4 1.5 0 1 0 2.8 0a1.4 1.5 0 1 0 -2.8 0M1361.80 291.25a1.4 1.5 0 1 0 2.8 0a1.4 1.5 0 1 0 -2.8 0M1366.14 296.06a1.4 1.5 0 1 0 2.8 0a1.4 1.5 0 1 0 -2.8 0M1365.09 302.37a1.4 1.5 0 1 0 2.8 0a1.4 1.5 0 1 0 -2.8 0" fill="#0a6e0a"/>
<path d="M29.0 670.1V681.1M30.0 665.8V679.3M31.0 668.1V678.7M32.0 666.0V681.2M33.0 668.2V680.5M34.0 666.4V679.0M35.0 667.6V680.5M36.0 667.7V681.2M37.0 668.3V679.6M38.0 666.5V680.4M39.0 666.0V680.6M40.0 668.3V678.7M41.0 667.0V681.5M42.0 669.5V682.1M43.0 670.1V685.2M44.0 673.9V684.7M45.0 676.2V687.3M46.0 678.9V689.1M47.0 680.5V693.6M48.0 683.9V694.4M50.0 688.5V698.5M51.0 689.7V700.2M53.0 671.3V690.8M54.0 671.4V690.2M55.0 670.4V689.0M56.0 688.6V698.4M58.0 682.9V693.6M59.0 679.2V690.2M60.0 675.1V688.1M61.0 671.1V683.5M62.0 666.8V680.0M63.0 667.7V682.5M64.0 669.4V681.0M65.0 666.8V682.0M66.0 667.1V682.4M67.0 666.8V680.3M68.0 668.4V682.6M69.0 668.9V680.7M70.0 669.5V681.4M71.0 667.7V682.3M72.0 668.0V682.6M73.0 668.1V681.5M74.0 668.7V681.3M75.0 671.3V683.2M76.0 675.2V686.7M77.0 676.1V690.2M78.0 681.0V691.3M79.0 683.1V693.8M80.0 683.7V693.9M81.0 687.5V696.0M82.0 689.9V700.5M83.0 689.0V701.0M84.0 689.8V700.0M85.0 670.8V691.7M86.0 671.9V692.0M87.0 672.7V692.1M88.0 686.4V698.1M89.0 685.4V697.9M90.0 679.7V693.8M91.0 678.4V689.5M92.0 675.4V687.1M93.0 670.7V683.4M94.0 666.4V680.0M95.0 666.4V681.0M96.0 667.7V680.5M97.0 667.2V679.8M98.0 665.8V679.0M99.0 668.3V680.0M100.0 666.2V681.3M101.0 666.8V679.7M102.0 667.3V678.6M103.0 667.8V679.1M104.0 667.2V680.6M105.0 665.4V679.8M106.0 669.2V681.7M107.0 671.4V681.6M108.0 673.4V686.4M109.0 674.1V688.5M110.0 678.5V689.2M111.0 679.7V690.9M112.0 682.8V693.3M113.0 685.2V695.3M114.0 688.8V697.5M116.0 687.9V698.2M117.0 672.0V691.0M119.0 670.8V689.4M120.0 687.5V699.8M121.0 686.3V699.1M122.0 681.5V694.7M123.0 678.7V690.9M124.0 677.1V689.0M125.0 670.8V685.8M126.0 667.5V682.8M127.0 666.4V681.8M128.0 667.7V680.1M130.0 668.2V680.9M131.0 668.4V681.5M132.0 668.1V681.6M133.0 668.0V682.1M134.0 666.7V682.3M135.0 667.5V681.8M136.0 669.2V679.7M137.0 668.9V682.1M138.0 669.7V680.3M139.0 670.7V682.3M140.0 674.5V684.5M141.0 676.9V687.6M142.0 678.5V688.6M143.0 679.3V693.1M144.0 684.1V693.3M145.0 686.5V696.3M146.0 688.0V699.7M147.0 687.6V700.2M148.0 688.7V700.2M149.0 671.7V690.1M150.0 670.8V692.2M151.0 672.1V691.1M152.0 686.8V697.7M153.0 684.7V697.9M154.0 680.2V695.1M155.0 679.3V690.7M156.0 674.2V686.9M157.0 671.8V683.3M158.0 667.2V681.3M159.0 665.5V678.3M160.0 666.4V680.4M161.0 666.6V679.6M162.0 667.4V680.6M163.0 665.9V678.9M164.0 667.3V680.3M165.0 667.2V679.4M166.0 667.5V679.8M167.0 665.8V679.2M168.0 666.3V679.6M169.0 665.3V678.1M170.0 666.4V679.4M171.0 669.9V682.1M172.0 672.6V683.3M173.0 675.3V685.3M174.0 676.5V688.5M175.0 678.0V689.0M176.0 680.8V693.0M177.0 683.5V694.1M178.0 685.6V697.4M179.0 687.0V698.5M180.0 687.6V697.2M181.0 670.2V690.7M182.0 671.9V689.0M183.0 671.4V690.0M184.0 670.5V690.1M185.0 685.9V696.9M186.0 683.2V694.3M187.0 680.9V691.9M188.0 675.5V689.2M189.0 671.5V686.1M190.0 668.4V680.6M191.0 667.8V679.1M192.0 667.8V681.2M193.0 667.7V678.8M194.0 667.4V679.8M195.0 668.5V681.4M196.0 667.4V680.9M197.0 667.6V681.4M198.0 665.9V680.8M199.0 666.4V681.3M200.0 667.6V681.1M201.0 668.3V680.5M202.0 667.2V679.7M203.0 669.4V682.8M204.0 672.9V684.9M205.0 673.1V685.2M206.0 677.0V688.5M207.0 679.6V691.1M208.0 681.8V693.0M209.0 683.9V695.6M210.0 686.7V696.2M211.0 688.3V698.8M212.0 689.1V698.0M213.0 670.5V688.6M214.0 672.2V690.5M215.0 670.6V689.8M216.0 672.5V690.6M217.0 688.5V701.5M218.0 686.9V698.5M219.0 683.5V696.3M220.0 680.6V693.0M221.0 676.7V688.2M222.0 671.9V684.5M223.0 671.1V682.1M224.0 671.7V683.0M225.0 669.7V683.6M226.0 670.0V684.7M227.0 671.8V684.4M228.0 669.5V683.6M229.0 670.5V683.9M230.0 671.7V683.2M231.0 671.7V682.2M233.0 669.0V683.6M234.0 671.5V683.3M235.0 673.1V685.2M236.0 675.2V686.2M237.0 676.6V689.9M238.0 679.6V692.5M239.0 681.0V692.4M240.0 683.7V694.8M241.0 685.6V697.8M242.0 689.6V698.6M243.0 692.8V702.6M244.0 692.9V703.7M246.0 674.6V693.9M247.0 673.0V692.8M248.0 675.8V694.1M249.0 686.9V698.7M250.0 687.2V696.9M251.0 682.1V694.3M252.0 680.4V692.0M253.0 675.5V687.3M254.0 673.5V685.3M255.0 670.1V680.9M256.0 669.9V682.8M258.0 669.9V681.7M259.0 669.0V683.1M260.0 670.4V682.3M261.0 669.6V681.4M262.0 669.7V682.1M263.0 669.6V682.9M264.0 669.4V682.6M265.0 668.4V683.5M266.0 668.0V681.2M267.0 672.0V682.5M268.0 673.1V684.1M269.0 674.2V687.6M270.0 679.1V690.8M271.0 680.9V691.4M273.0 684.7V696.8M274.0 687.2V699.4M275.0 688.8V699.2M276.0 689.7V700.4M277.0 688.9V701.4M278.0 674.5V692.3M279.0 672.8V692.0M280.0 672.5V693.4M281.0 688.0V697.4M282.0 685.7V697.2M283.0 681.9V694.1M284.0 678.8V691.6M286.0 672.2V683.7M288.0 666.8V680.6M289.0 667.5V680.1M290.0 667.0V680.4M291.0 668.5V679.4M292.0 666.5V680.7M293.0 667.9V679.6M294.0 666.3V681.7M295.0 667.8V680.9M296.0 667.9V679.3M297.0 666.5V680.2M298.0 666.5V680.0M299.0 668.6V681.4M300.0 670.4V682.8M301.0 672.3V686.5M302.0 674.7V688.7M303.0 679.8V690.7M304.0 679.7V691.1M305.0 682.6V693.4M306.0 687.1V697.3M307.0 688.1V698.5M308.0 687.9V700.8M309.0 688.4V700.0M310.0 672.5V690.1M311.0 672.4V690.4M312.0 670.4V691.0M313.0 684.4V697.1M314.0 683.4V695.8M315.0 679.8V693.0M316.0 676.5V691.5M317.0 673.1V686.5M318.0 672.1V682.9M319.0 667.8V681.3M320.0 667.6V680.7M321.0 667.7V678.3M322.0 664.9V678.1M323.0 666.1V680.0M324.0 667.3V679.5M325.0 667.4V678.0M326.0 665.2V680.0M327.0 665.3V680.2M328.0 667.0V679.6M329.0 665.2V679.6M330.0 666.0V678.3M331.0 666.7V680.5M332.0 670.8V683.4M333.0 671.0V684.3M334.0 675.5V687.0M335.0 678.1V686.8M336.0 677.9V691.9M337.0 683.1V691.3M338.0 683.3V693.9M339.0 685.6V697.6M340.0 686.5V697.8M341.0 688.4V697.9M342.0 669.0V689.1M343.0 671.4V690.8M344.0 671.3V687.9M345.0 687.9V701.2M346.0 688.2V700.1M347.0 685.8V696.5M348.0 683.0V696.0M349.0 677.7V690.7M350.0 676.7V689.4M351.0 670.9V685.7M352.0 670.9V684.5M353.0 671.4V683.3M354.0 671.6V682.4M355.0 671.6V684.1M356.0 669.7V682.2M357.0 670.9V684.6M358.0 671.0V684.6M359.0 671.7V682.5M360.0 671.5V682.1M361.0 669.6V682.1M362.0 670.4V682.1M363.0 669.9V682.9M364.0 671.7V685.8M365.0 674.2V686.8M366.0 676.5V690.0M367.0 679.3V690.5M368.0 683.2V692.8M369.0 684.3V695.4M370.0 687.9V698.4M371.0 690.0V699.1M372.0 690.2V703.1M373.0 691.1V703.8M374.0 674.0V692.8M375.0 674.0V692.2M376.0 674.4V692.8M377.0 674.6V693.9M378.0 686.1V700.5M379.0 685.8V696.4M380.0 681.7V694.1M381.0 678.6V691.2M382.0 674.7V686.1M383.0 669.6V684.6M384.0 668.2V680.5M385.0 667.1V682.4M386.0 669.4V680.9M387.0 669.1V682.5M388.0 668.9V680.9M389.0 669.7V680.9M390.0 669.1V682.2M391.0 668.7V680.6M392.0 669.6V682.6M393.0 667.6V682.1M394.0 667.8V680.9M395.0 668.5V682.6M396.0 670.9V684.6M397.0 673.6V684.1M398.0 676.0V688.1M399.0 677.5V690.8M400.0 680.2V692.1M401.0 684.1V695.5M402.0 684.6V696.8M403.0 689.0V697.5M404.0 690.0V700.0M405.0 690.0V699.8M406.0 671.3V690.6M407.0 672.5V690.7M408.0 671.5V690.3M409.0 672.4V690.3M410.0 687.8V697.6M411.0 683.2V697.5M412.0 681.5V694.2M413.0 678.5V690.6M414.0 673.0V688.0M415.0 671.5V683.7M416.0 668.5V680.2M417.0 668.4V680.0M418.0 666.6V680.2M419.0 667.8V679.8M420.0 668.3V681.3M421.0 667.2V680.9M422.0 667.2V680.5M423.0 666.9V681.6M424.0 668.8V681.6M425.0 668.5V682.4M426.0 668.0V682.3M428.0 668.7V682.3M429.0 672.6V683.7M430.0 674.7V687.3M431.0 677.8V689.9M432.0 678.6V691.7M433.0 680.6V694.0M434.0 685.3V696.1M435.0 687.0V695.8M436.0 689.8V700.2M437.0 688.0V699.0M438.0 688.5V700.6M439.0 672.0V691.2M440.0 671.7V691.1M441.0 672.1V692.5M442.0 689.2V702.2M443.0 688.1V699.9M444.0 684.8V694.7M445.0 679.7V691.2M446.0 675.5V689.0M447.0 672.3V685.5M448.0 670.6V683.1M449.0 670.6V682.6M450.0 669.9V684.2M451.0 670.0V683.0M452.0 671.0V682.3M453.0 668.8V683.7M454.0 668.5V681.6M455.0 671.0V682.3M456.0 669.6V681.3M457.0 670.9V682.7M458.0 668.7V682.9M459.0 670.0V682.5M460.0 670.8V683.2M461.0 674.1V687.1M462.0 676.5V689.6M463.0 677.1V689.4M464.0 681.6V692.5M465.0 683.9V695.5M466.0 685.8V697.0M467.0 687.9V699.4M468.0 689.7V701.9M469.0 689.5V701.1M470.0 690.2V700.6M471.0 674.8V691.8M472.0 673.5V691.6M473.0 674.1V691.4M474.0 686.9V698.6M475.0 685.3V696.1M476.0 680.1V694.3M477.0 676.3V688.4M478.0 675.1V686.4M479.0 670.2V683.5M480.0 667.9V679.9M481.0 667.4V678.7M482.0 665.9V678.5M483.0 668.1V680.7M484.0 667.0V679.8M485.0 667.6V679.3M486.0 667.7V681.0M487.0 666.0V679.5M488.0 667.7V680.0M489.0 666.6V680.0M490.0 666.2V681.1M491.0 665.5V681.0M492.0 667.7V679.7M493.0 669.0V683.9M495.0 674.2V687.1M496.0 676.5V690.4M497.0 680.3V690.4M498.0 683.0V692.8M499.0 684.1V694.5M500.0 687.2V698.9M501.0 687.4V699.3M502.0 687.9V700.0M503.0 671.2V688.8M504.0 670.1V690.1M505.0 669.5V688.7M506.0 687.5V698.0M507.0 687.0V698.3M508.0 681.9V695.2M509.0 678.1V691.5M510.0 676.7V688.0M511.0 672.2V684.8M512.0 668.0V680.6M513.0 668.7V681.7M514.0 667.1V680.6M515.0 666.6V681.2M516.0 668.5V679.4M517.0 666.0V680.5M518.0 667.4V679.9M519.0 668.8V679.1M520.0 666.3V681.2M521.0 667.5V681.8M522.0 667.5V679.7M523.0 666.9V679.4M524.0 668.2V680.5M525.0 669.1V683.4M526.0 673.7V684.9M527.0 674.7V687.8M528.0 677.9V688.0M529.0 679.2V690.0M530.0 682.7V693.5M531.0 686.1V694.5M532.0 687.6V698.4M533.0 689.6V698.1M534.0 689.4V698.7M535.0 671.5V689.5M536.0 671.8V690.0M537.0 670.4V691.9M538.0 688.9V701.8M539.0 688.8V700.6M540.0 684.6V698.7M541.0 681.0V693.0M542.0 678.3V692.4M543.0 676.3V688.1M544.0 672.6V684.3M545.0 669.8V682.5M546.0 669.8V682.9M547.0 670.3V681.8M548.0 670.1V683.6M549.0 671.4V681.9M551.0 670.9V684.2M552.0 670.7V681.9M553.0 670.1V683.8M554.0 669.5V684.0M555.0 670.6V684.2M556.0 669.7V684.3M557.0 672.8V684.8M558.0 675.1V688.4M559.0 676.5V690.7M561.0 683.4V694.9M562.0 686.2V697.1M563.0 688.1V699.1M564.0 690.6V698.9M565.0 691.7V701.7M566.0 691.1V701.0M567.0 675.6V693.9M568.0 673.3V692.8M569.0 674.2V694.2M570.0 673.8V693.8M571.0 686.2V697.1M572.0 682.9V693.2M573.0 679.0V691.7M574.0 674.2V686.7M575.0 671.5V684.2M576.0 669.0V681.0M577.0 666.6V678.5M578.0 666.2V679.0M579.0 664.9V678.2M580.0 664.9V679.0M581.0 666.1V679.5M582.0 666.4V678.6M583.0 665.1V680.0M584.0 666.6V678.7M585.0 666.2V678.3M587.0 665.6V680.1M588.0 666.6V677.8M589.0 668.4V681.5M590.0 670.3V683.9M591.0 674.7V684.7M592.0 676.8V688.2M593.0 679.5V688.7M594.0 680.6V691.7M595.0 684.0V695.1M596.0 686.8V696.5M597.0 688.2V697.4M598.0 686.2V697.6M599.0 670.9V688.6M600.0 670.8V688.1M601.0 670.6V688.7M602.0 669.2V690.2M603.0 686.8V700.7M604.0 685.0V695.9M605.0 680.5V695.0M607.0 675.6V687.6M608.0 671.2V684.3M609.0 668.2V681.6M610.0 667.5V680.5M611.0 669.8V681.0M612.0 668.3V680.5M613.0 669.7V682.7M614.0 669.1V681.5M615.0 667.5V680.3M616.0 668.3V681.5M617.0 668.2V680.7M618.0 668.2V683.0M619.0 670.0V683.0M620.0 670.0V680.3M621.0 670.4V683.0M622.0 673.5V685.9M623.0 675.6V686.7M624.0 676.2V688.3M625.0 680.1V692.4M626.0 684.0V694.5M627.0 685.8V694.6M628.0 688.1V697.8M629.0 690.4V698.6M630.0 688.9V699.4M631.0 689.1V701.2M632.0 672.4V690.8M633.0 674.0V692.0M634.0 674.0V692.8M635.0 685.1V698.6M636.0 682.2V697.0M637.0 679.0V693.1M638.0 675.8V688.9M639.0 674.3V686.0M640.0 669.8V681.0M641.0 666.1V679.8M642.0 666.8V678.4M643.0 665.1V679.8M644.0 666.5V678.8M645.0 665.0V678.2M646.0 667.6V678.0M647.0 665.4V678.0M648.0 666.4V680.3M649.0 667.8V679.6M650.0 665.3V679.1M651.0 666.7V680.2M652.0 666.1V680.3M653.0 668.0V679.1M654.0 669.3V681.5M655.0 673.0V684.1M656.0 673.6V687.3M657.0 678.7V688.0M658.0 679.0V691.6M659.0 681.5V693.1M661.0 687.1V696.4M662.0 688.8V699.4M663.0 688.1V699.1M664.0 668.9V690.8M665.0 671.3V689.2M666.0 670.8V688.1M667.0 688.1V700.4M668.0 687.1V697.5M669.0 681.3V695.9M670.0 679.4V691.1M671.0 674.4V688.1M672.0 671.4V685.5M673.0 669.2V681.8M674.0 669.4V681.1M675.0 668.2V682.4M676.0 668.1V681.7M677.0 667.8V681.7M678.0 669.1V680.3M679.0 667.2V682.5M680.0 667.5V679.9M681.0 667.8V680.9M682.0 668.1V680.7M683.0 669.6V682.7M684.0 669.4V680.2M685.0 669.6V682.3M686.0 670.4V684.2M687.0 675.1V685.9M688.0 676.3V689.8M689.0 679.2V689.2M690.0 680.1V692.3M691.0 683.5V694.9M692.0 684.8V696.1M693.0 689.3V698.1M694.0 690.3V700.6M695.0 687.9V699.7M696.0 671.6V691.3M697.0 673.4V692.2M698.0 670.8V691.3M699.0 687.6V701.7M700.0 687.7V698.6M701.0 684.7V697.4M702.0 680.1V692.2M703.0 676.1V688.9M704.0 674.8V687.6M705.0 671.9V684.9M706.0 669.8V681.1M707.0 668.7V682.5M708.0 669.2V681.7M709.0 670.1V682.7M710.0 669.4V682.7M711.0 668.6V684.0M712.0 669.8V681.3M713.0 668.4V683.5M714.0 669.2V682.5M715.0 669.5V682.9M716.0 670.1V681.5M717.0 670.5V682.9M718.0 673.7V684.7M719.0 675.5V687.2M720.0 677.6V689.2M721.0 681.2V690.9M722.0 681.8V692.3M723.0 685.9V694.3M724.0 688.3V697.0M725.0 688.4V700.4M726.0 690.5V702.6M727.0 689.7V702.3M728.0 672.7V693.4M729.0 673.9V692.4M730.0 674.9V693.3M731.0 688.8V700.5M732.0 689.3V699.0M733.0 683.7V696.1M734.0 680.4V692.7M735.0 676.5V691.6M736.0 673.3V688.6M737.0 672.4V685.3M738.0 669.1V683.2M739.0 669.7V682.4M740.0 670.7V682.0M741.0 670.7V683.0M742.0 668.3V683.5M743.0 670.4V681.6M744.0 668.0V683.5M745.0 670.4V683.4M746.0 668.0V681.1M747.0 668.2V681.4M748.0 668.9V682.4M749.0 668.5V683.6M750.0 673.2V686.0M751.0 674.0V688.0M752.0 677.5V687.9M753.0 680.8V690.3M754.0 682.9V692.6M755.0 684.8V695.8M756.0 688.1V698.6M757.0 688.7V699.0M758.0 689.3V700.9M759.0 691.2V702.7M760.0 672.9V693.9M761.0 672.6V691.0M762.0 674.0V692.4M763.0 672.4V692.4M764.0 684.8V695.8M765.0 682.4V695.6M766.0 678.9V689.5M767.0 675.4V686.9M768.0 671.4V683.5M769.0 669.1V681.6M770.0 666.6V680.1M771.0 667.0V679.4M772.0 665.0V679.1M773.0 665.0V680.3M774.0 665.9V677.9M775.0 666.6V678.1M776.0 666.6V679.5M777.0 667.2V677.9M778.0 667.5V679.4M779.0 665.5V678.0M780.0 666.5V678.9M781.0 665.1V678.0M782.0 669.2V679.6M783.0 670.8V682.4M784.0 673.7V685.2M785.0 676.8V686.8M786.0 679.2V688.9M787.0 681.4V692.0M788.0 683.4V692.5M789.0 683.9V694.2M790.0 687.5V698.1M791.0 686.4V697.0M792.0 671.1V687.9M793.0 670.5V690.2M794.0 670.5V688.6M795.0 669.6V689.1M796.0 686.5V697.9M797.0 683.0V695.4M798.0 679.6V694.0M799.0 677.5V689.3M800.0 673.4V686.8M801.0 671.2V684.6M803.0 666.3V681.7M804.0 667.4V681.1M806.0 667.1V681.6M807.0 668.7V680.3M808.0 667.6V680.4M809.0 667.6V682.1M810.0 668.4V681.9M811.0 668.1V680.5M812.0 667.7V681.6M813.0 667.7V679.6M814.0 669.4V682.9M815.0 671.4V685.2M816.0 675.0V686.9M817.0 677.0V687.6M818.0 678.1V692.0M819.0 682.6V693.1M820.0 683.6V694.2M821.0 686.3V696.0M822.0 688.5V698.7M823.0 688.4V698.6M824.0 688.1V701.2M825.0 672.2V689.9M826.0 671.6V689.3M827.0 672.1V691.8M828.0 689.7V700.9M829.0 689.1V699.3M830.0 683.8V696.4M831.0 681.3V693.0M832.0 675.9V691.0M833.0 674.7V687.3M834.0 671.8V683.1M835.0 669.8V684.7M836.0 670.5V683.7M837.0 669.8V683.7M838.0 670.6V682.8M839.0 670.3V685.0M840.0 669.8V683.3M841.0 671.9V683.3M842.0 671.4V683.8M843.0 670.0V684.4M844.0 669.2V682.1M845.0 670.9V682.2M846.0 672.1V685.1M847.0 675.1V686.6M848.0 676.9V689.2M849.0 678.5V690.7M850.0 681.1V692.7M851.0 683.8V694.2M852.0 686.7V696.8M853.0 687.5V698.5M854.0 690.8V702.2M855.0 690.9V701.6M856.0 692.2V702.0M857.0 674.1V694.4M858.0 675.9V695.0M859.0 674.1V693.1M860.0 687.6V698.2M861.0 684.2V697.5M862.0 681.9V693.8M863.0 678.8V689.6M864.0 676.4V687.4M865.0 672.0V684.3M866.0 668.7V680.8M867.0 666.4V679.3M869.0 668.6V680.4M870.0 667.4V679.9M871.0 668.6V680.2M872.0 667.9V679.6M873.0 667.4V681.5M874.0 667.2V681.1M875.0 666.8V679.5M876.0 668.3V680.7M877.0 666.4V680.8M878.0 667.3V682.8M879.0 672.3V683.8M880.0 674.4V685.8M881.0 675.8V688.4M882.0 679.0V689.8M883.0 680.1V692.4M884.0 683.4V695.6M885.0 685.6V694.9M886.0 687.0V699.6M887.0 687.6V700.7M888.0 687.4V700.5M889.0 672.3V691.7M890.0 670.2V691.5M891.0 671.2V689.8M892.0 687.6V698.6M893.0 686.3V698.8M894.0 684.2V695.6M895.0 681.7V693.7M896.0 677.4V688.9M897.0 673.6V685.8M898.0 669.3V683.6M899.0 667.4V683.1M900.0 668.9V683.2M901.0 670.0V682.3M902.0 667.3V682.9M903.0 669.8V683.1M904.0 668.1V681.2M905.0 667.8V681.6M906.0 669.9V682.6M907.0 668.4V682.1M908.0 669.5V681.8M909.0 668.5V680.4M910.0 669.9V682.2M911.0 670.3V685.2M912.0 673.4V686.7M913.0 676.8V689.7M914.0 679.5V690.3M915.0 681.0V691.7M916.0 682.6V695.4M917.0 685.4V698.3M918.0 690.0V698.8M919.0 689.3V701.1M920.0 691.3V699.6M921.0 672.3V691.6M922.0 671.5V691.4M923.0 673.1V692.9M925.0 684.7V697.0M926.0 683.2V695.0M927.0 679.4V690.7M928.0 674.7V686.2M929.0 672.0V683.1M930.0 666.8V679.7M931.0 666.5V679.7M932.0 667.2V678.4M933.0 665.8V680.3M934.0 665.7V678.8M935.0 666.1V678.2M936.0 667.1V679.8M937.0 667.2V679.2M938.0 667.2V679.8M939.0 667.3V680.7M940.0 665.6V679.8M941.0 667.3V679.9M942.0 667.0V680.0M943.0 668.5V682.4M944.0 671.4V684.9M945.0 674.0V685.2M946.0 676.5V687.3M947.0 678.7V689.1M948.0 679.7V690.6M949.0 684.3V694.0M950.0 687.0V695.2M951.0 686.2V698.4M952.0 688.6V696.7M954.0 669.3V688.6M955.0 669.0V688.5M956.0 670.3V687.9M957.0 687.8V699.3M958.0 683.5V696.9M959.0 679.7V693.1M960.0 678.7V690.2M961.0 675.6V686.6M962.0 669.7V682.2M963.0 670.0V682.2M964.0 667.9V681.3M965.0 668.0V680.3M966.0 668.5V682.7M967.0 669.7V682.1M968.0 667.8V682.2M969.0 669.1V682.7M970.0 668.2V681.1M971.0 667.9V680.7M972.0 667.1V681.4M973.0 669.7V680.6M974.0 668.5V680.5M975.0 669.4V683.1M976.0 672.1V684.0M977.0 674.8V687.3M978.0 679.2V690.7M979.0 679.6V692.3M980.0 682.0V692.8M981.0 684.3V696.6M982.0 686.9V697.0M983.0 689.9V699.6M984.0 688.8V699.9M985.0 671.7V691.4M986.0 671.1V691.7M987.0 673.0V690.7M988.0 673.0V690.6M989.0 686.7V700.2M990.0 686.7V698.6M991.0 680.4V694.4M992.0 678.1V691.4M993.0 674.2V686.6M994.0 671.5V683.7M995.0 667.5V682.7M996.0 667.1V681.1M997.0 668.9V681.1M998.0 668.7V683.0M999.0 669.0V681.7M1000.0 667.8V682.3M1001.0 668.6V682.3M1002.0 667.3V680.8M1003.0 668.2V680.1M1004.0 669.0V680.1M1005.0 668.5V681.8M1006.0 667.5V682.6M1007.0 670.0V681.9M1008.0 671.7V683.9M1009.0 676.3V687.5M1010.0 678.5V688.9M1011.0 678.5V692.7M1012.0 681.1V693.8M1013.0 684.7V696.2M1014.0 687.3V697.9M1015.0 690.5V700.5M1016.0 688.3V700.1M1017.0 690.8V699.8M1018.0 674.0V691.2M1019.0 671.3V690.3M1020.0 672.0V691.3M1021.0 687.0V698.2M1022.0 684.5V697.2M1023.0 681.4V692.5M1024.0 678.0V691.0M1025.0 675.2V685.4M1026.0 671.1V682.1M1027.0 668.6V678.8M1028.0 667.8V679.0M1029.0 667.5V681.3M1030.0 668.1V680.7M1031.0 666.8V681.1M1032.0 666.4V680.6M1033.0 667.4V681.6M1034.0 666.8V679.0M1035.0 666.1V679.1M1036.0 666.8V681.3M1037.0 667.6V680.7M1038.0 666.9V678.9M1039.0 667.2V682.0M1040.0 670.9V684.0M1041.0 671.9V685.8M1042.0 677.1V688.2M1043.0 679.3V689.8M1044.0 679.7V691.4M1045.0 682.8V692.5M1046.0 686.9V696.8M1047.0 689.4V697.9M1049.0 689.6V699.5M1050.0 671.7V690.1M1051.0 671.0V689.3M1052.0 671.6V691.5M1053.0 689.6V702.4M1054.0 687.6V700.4M1055.0 686.0V697.9M1056.0 682.6V694.9M1057.0 679.0V691.7M1058.0 675.1V688.4M1059.0 671.2V684.0M1060.0 669.9V683.8M1061.0 671.2V684.9M1062.0 669.8V684.8M1063.0 669.9V684.9M1064.0 669.9V684.8M1065.0 669.3V685.0M1066.0 669.1V682.6M1067.0 670.7V682.6M1068.0 671.7V682.4M1069.0 672.0V683.1M1070.0 669.6V684.2M1071.0 672.8V684.3M1072.0 674.1V686.0M1073.0 677.3V689.0M1074.0 677.5V691.1M1075.0 682.1V693.9M1076.0 684.8V695.9M1078.0 687.9V699.5M1079.0 692.2V699.8M1080.0 691.3V702.8M1081.0 690.5V702.2M1082.0 674.4V692.6M1083.0 673.9V694.5M1084.0 673.6V692.5M1085.0 686.6V697.6M1086.0 685.5V697.6M1087.0 684.1V693.6M1088.0 679.4V692.7M1089.0 675.4V689.8M1090.0 673.5V685.6M1091.0 669.4V681.7M1092.0 666.4V680.1M1093.0 667.8V680.7M1094.0 667.0V679.4M1095.0 668.9V680.0M1096.0 667.7V681.3M1097.0 668.9V679.7M1098.0 668.8V681.0M1099.0 669.2V681.7M1100.0 668.4V682.2M1101.0 668.6V681.8M1102.0 668.8V681.2M1103.0 667.2V682.4M1104.0 670.7V682.5M1105.0 673.1V684.8M1106.0 675.5V688.0M1107.0 678.8V688.1M1108.0 678.8V690.9M1109.0 682.1V695.2M1110.0 685.6V695.6M1111.0 687.1V698.2M1112.0 689.1V699.9M1113.0 689.4V699.6M1114.0 672.5V691.1M1115.0 672.5V690.4M1116.0 672.7V691.2M1117.0 672.3V691.5M1118.0 687.7V698.1M1119.0 683.6V694.3M1120.0 679.5V693.6M1121.0 676.1V689.3M1122.0 672.3V686.1M1123.0 669.2V680.9M1124.0 666.3V681.9M1125.0 667.7V680.2M1126.0 668.3V681.5M1127.0 667.6V681.2M1128.0 667.2V681.0M1130.0 668.4V680.4M1131.0 668.7V681.9M1132.0 667.5V680.0M1133.0 668.2V679.8M1134.0 668.4V681.9M1135.0 667.9V679.6M1136.0 669.0V682.0M1137.0 671.2V686.0M1138.0 673.7V687.6M1139.0 676.9V689.9M1140.0 678.6V692.6M1141.0 682.7V692.1M1142.0 684.6V694.8M1143.0 688.3V698.1M1144.0 688.6V699.5M1145.0 688.9V698.9M1146.0 672.6V689.4M1147.0 672.0V690.6M1148.0 672.9V689.8M1149.0 672.3V690.7M1150.0 687.8V697.5M1151.0 684.0V695.5M1152.0 679.4V692.7M1153.0 675.3V688.5M1154.0 674.1V686.1M1155.0 668.4V681.4M1156.0 667.6V680.4M1157.0 668.7V679.1M1158.0 668.2V681.3M1159.0 667.2V680.3M1160.0 667.7V679.8M1161.0 666.3V680.7M1162.0 668.0V679.0M1163.0 667.7V679.9M1164.0 667.1V680.8M1165.0 667.3V681.8M1166.0 668.3V680.4M1168.0 669.5V681.8M1169.0 671.1V685.2M1170.0 673.1V685.5M1171.0 677.0V688.3M1172.0 679.4V689.4M1173.0 682.0V693.5M1174.0 684.8V693.6M1175.0 687.7V696.4M1176.0 689.3V700.5M1177.0 687.7V699.3M1178.0 671.6V690.0M1179.0 670.7V689.9M1180.0 670.4V689.3M1181.0 670.2V689.7M1182.0 688.2V700.7M1183.0 686.6V697.4M1184.0 682.4V694.1M1186.0 674.3V687.5M1187.0 671.2V685.5M1188.0 667.0V680.4M1189.0 667.8V680.5M1190.0 667.6V680.5M1191.0 667.5V680.8M1192.0 667.2V680.3M1193.0 668.3V680.9M1194.0 668.2V680.6M1195.0 667.9V681.1M1196.0 667.9V681.2M1197.0 668.8V680.0M1198.0 668.9V681.5M1199.0 669.7V680.9M1200.0 669.7V682.8M1201.0 673.3V685.4M1202.0 674.7V685.6M1203.0 676.8V688.6M1204.0 679.2V690.0M1205.0 682.2V693.1M1206.0 684.3V695.7M1207.0 687.1V696.8M1208.0 688.8V699.1M1209.0 690.2V701.3M1210.0 690.9V699.2M1211.0 672.3V692.9M1212.0 672.1V690.8M1213.0 672.9V690.4M1214.0 690.0V702.0M1216.0 683.5V694.8M1217.0 681.2V692.8M1218.0 675.6V690.0M1219.0 674.1V686.3M1220.0 671.2V681.6M1221.0 669.7V682.5M1222.0 669.6V682.1M1223.0 670.3V683.7M1224.0 668.3V682.3M1225.0 669.4V681.7M1226.0 669.3V682.0M1228.0 669.6V683.8M1229.0 670.8V681.6M1230.0 671.2V681.8M1231.0 670.0V684.0M1232.0 670.9V684.4M1233.0 674.3V684.3M1234.0 674.6V686.7M1235.0 677.8V688.8M1236.0 679.6V690.8M1237.0 682.1V693.7M1238.0 685.9V697.4M1239.0 688.9V699.4M1240.0 689.7V700.5M1241.0 690.3V702.0M1242.0 691.2V700.5M1243.0 673.9V692.5M1244.0 675.1V693.8M1245.0 672.3V692.7M1246.0 688.1V700.7M1247.0 686.7V699.2M1248.0 685.3V698.0M1249.0 681.8V694.7M1250.0 679.0V691.4M1251.0 673.5V687.5M1252.0 671.3V682.8M1253.0 669.9V684.2M1254.0 669.0V683.8M1255.0 670.1V683.2M1256.0 671.1V683.1M1257.0 670.3V682.9M1258.0 670.9V683.1M1259.0 669.5V682.7M1260.0 670.6V683.5M1261.0 670.6V683.0M1262.0 670.3V683.1M1263.0 671.7V682.0M1264.0 672.1V684.9M1265.0 672.7V686.9M1266.0 676.4V688.4M1268.0 681.4V693.3M1269.0 682.8V694.3M1270.0 686.7V698.0M1271.0 687.5V699.2M1272.0 692.0V700.9M1273.0 690.4V703.7M1274.0 692.0V702.0M1275.0 673.7V693.3M1276.0 673.3V692.6M1277.0 675.7V693.0M1278.0 690.8V701.0M1279.0 689.5V701.2M1280.0 686.8V697.2M1281.0 683.0V695.9M1282.0 680.0V689.8M1283.0 674.5V688.6M1284.0 671.1V684.4M1285.0 669.4V682.4M1286.0 671.7V684.4M1287.0 669.8V682.9M1288.0 669.9V682.7M1289.0 670.3V682.9M1290.0 669.6V682.9M1291.0 669.5V683.0M1292.0 670.6V682.5M1293.0 671.3V684.4M1294.0 671.4V683.6M1295.0 670.7V683.6M1296.0 671.6V684.4M1297.0 672.1V685.0M1298.0 676.0V687.9M1299.0 677.3V690.3M1300.0 681.5V691.3M1301.0 682.1V694.4M1303.0 686.7V698.4M1304.0 691.2V699.8M1305.0 690.5V701.5M1306.0 692.0V703.4M1307.0 674.0V693.1M1308.0 675.9V693.1M1309.0 673.9V693.1M1310.0 675.6V692.3M1311.0 685.6V697.7M1312.0 681.1V693.6M1313.0 677.3V689.7M1314.0 675.0V686.8M1315.0 672.7V684.0M1316.0 667.3V681.6M1317.0 667.4V679.2M1318.0 666.4V679.6M1319.0 664.9V680.4M1320.0 667.3V679.9M1321.0 666.0V677.7M1322.0 665.3V679.7M1323.0 667.3V678.1M1324.0 666.3V680.5M1325.0 667.5V678.3M1326.0 666.9V679.9M1327.0 665.2V680.4M1329.0 669.4V680.9M1330.0 672.5V682.1" fill="none" stroke="#dd00dd" stroke-width="1.25"/>
<path d="M29.2 672.6v2.2M28.6 680.0v1.9M29.7 666.1v2.1M29.7 673.2v2.1M30.8 675.5v1.7M30.8 678.2v1.6M32.2 678.3v2.0M31.9 680.8v2.1M33.2 675.3v1.5M32.8 671.0v1.6M33.9 674.4v1.9M33.8 669.0v2.4M34.7 677.0v1.9M35.1 680.4v2.1M35.5 670.8v1.8M35.7 671.3v2.4M37.4 672.8v2.0M36.7 671.3v2.1M37.7 672.0v2.5M37.6 673.6v1.5M38.6 672.2v1.9M39.0 680.5v2.5M40.0 675.4v1.8M39.6 675.0v1.9M41.0 670.9v1.7M41.4 680.3v1.8M42.0 679.1v2.3M41.5 676.2v1.8M42.8 682.7v1.6M43.4 683.4v1.6M43.6 682.2v2.0M43.8 679.9v2.4M44.7 684.3v1.8M45.1 687.2v1.9M46.1 682.3v1.7M45.6 681.1v2.1M46.7 681.4v2.2M46.6 683.3v2.4M47.7 692.4v1.6M47.9 688.4v2.0M48.9 687.9v1.8M48.7 695.7v1.7M50.4 691.0v1.9M50.1 697.1v1.6M51.3 699.4v1.7M50.7 694.8v1.9M52.3 690.0v2.0M52.5 691.9v2.5M53.5 677.1v2.1M53.2 681.9v1.6M54.5 674.4v1.6M54.1 674.9v2.2M55.1 675.0v2.1M55.1 678.2v2.0M55.9 690.9v2.2M55.8 691.5v2.3M56.6 697.1v1.7M57.4 687.4v2.4M58.2 691.8v2.1M58.2 693.5v1.5M58.6 689.5v1.6M59.1 680.4v1.8M59.8 683.4v2.0M60.3 686.9v1.6M61.1 680.7v1.8M61.1 680.3v1.9M62.0 678.7v2.3M61.6 674.5v1.6M63.4 680.4v1.7M62.6 671.4v2.3M64.4 671.2v2.4M64.3 680.7v2.4M65.3 680.9v2.4M64.8 679.1v2.3M66.3 670.5v2.0M66.3 671.8v1.7M67.5 678.5v1.8M66.9 675.5v2.5M67.7 682.2v2.5M67.6 672.1v1.9M68.9 675.0v2.1M69.2 671.9v1.5M70.2 678.3v1.9M70.2 670.4v1.8M70.8 672.1v1.9M70.8 673.6v1.6M72.1 681.2v1.8M71.5 676.0v1.8M72.9 674.3v1.7M73.4 674.4v2.3M73.8 676.7v2.3M74.2 678.2v1.7M75.3 676.9v1.6M75.1 676.2v1.7M75.5 682.8v2.3M75.6 684.1v1.9M76.7 676.8v2.3M77.3 682.5v2.2M78.1 690.1v2.2M78.3 686.2v2.0M78.7 685.9v2.1M79.0 691.3v2.1M79.8 686.5v2.0M79.7 685.1v2.2M80.9 692.1v1.7M81.4 691.0v2.1M81.5 693.9v1.9M82.4 697.9v2.5M82.7 696.2v1.7M82.5 694.2v1.8M83.6 694.6v2.1M83.9 690.1v2.1M84.6 680.5v1.9M84.8 675.3v2.3M85.6 677.0v1.5M86.5 682.8v1.8M87.4 687.3v1.7M86.7 673.1v1.6M88.3 694.6v1.7M88.2 693.5v1.6M88.8 685.7v2.2M88.9 697.4v2.2M90.3 681.1v2.4M89.6 688.2v2.5M91.0 682.5v1.8M91.3 687.8v1.6M91.9 683.7v2.2M91.8 686.7v2.3M92.8 680.0v2.4M92.6 681.2v2.4M93.5 671.6v2.4M93.7 668.9v2.3M94.5 670.5v2.4M95.2 667.7v2.0M96.3 674.0v1.6M96.2 670.5v1.8M97.2 672.5v1.8M96.8 676.1v1.8M98.3 672.9v1.7M98.0 668.6v2.2M98.7 669.5v1.7M98.5 670.4v2.0M99.6 676.8v2.4M100.4 673.6v2.1M101.4 667.5v2.0M100.9 677.4v1.6M101.8 673.6v2.5M102.3 668.6v2.1M102.9 672.9v2.4M102.8 679.0v2.1M103.7 670.0v2.2M103.7 669.3v1.6M104.7 669.6v2.2M105.0 675.5v2.2M106.4 677.5v1.9M106.1 676.0v2.4M107.2 674.5v2.1M106.6 674.3v2.2M107.6 679.8v1.5M107.8 679.0v1.8M109.5 682.4v2.5M108.8 683.8v1.5M109.7 688.3v2.1M110.0 685.3v1.6M110.8 689.3v2.2M111.4 682.9v2.3M112.5 686.2v1.9M112.5 688.2v2.2M113.3 688.9v2.1M112.7 692.9v2.0M114.5 689.9v2.1M113.7 690.9v2.1M115.0 696.8v1.6M115.0 696.1v2.2M115.7 698.0v2.1M116.4 691.9v2.0M116.9 687.0v2.4M117.3 681.7v1.8M117.6 680.0v2.0M118.1 677.2v2.0M119.1 683.7v1.7M118.5 685.2v2.2M120.3 695.7v2.5M119.5 693.6v2.0M121.0 691.9v2.0M120.9 695.6v2.2M122.2 686.0v2.1M122.4 692.7v2.4M123.4 688.0v1.5M123.1 679.6v2.4M124.1 678.3v2.4M124.2 682.4v2.4M124.6 676.4v2.0M125.3 679.3v1.7M126.4 671.1v1.6M125.8 674.5v1.8M126.7 676.8v1.9M127.1 671.7v2.1M127.9 670.1v2.0M128.1 670.6v2.1M128.8 676.5v2.1M129.2 676.8v1.5M130.3 671.8v2.1M130.1 672.7v2.1M131.1 679.4v2.4M130.8 676.9v1.9M132.2 672.1v1.7M132.0 669.9v2.5M133.3 671.6v2.0M133.2 679.4v1.8M134.4 681.8v2.2M134.5 682.0v2.3M135.0 675.1v2.2M135.1 677.1v2.3M136.4 669.5v2.1M135.7 678.8v1.6M136.6 674.3v2.4M137.0 672.9v1.6M138.2 676.8v2.4M138.2 674.1v1.7M139.5 675.5v1.5M138.9 675.0v2.5M140.5 679.9v1.9M139.7 678.4v1.6M141.1 683.8v1.5M140.7 685.3v1.6M141.7 680.6v2.4M141.6 681.8v2.4M142.8 681.0v1.7M142.5 688.4v1.5M143.6 685.7v2.2M144.2 688.9v2.0M145.4 691.4v1.5M145.4 694.1v2.0M145.9 693.6v2.2M146.4 693.7v1.6M147.1 691.1v2.0M147.5 691.7v2.0M148.4 696.8v2.2M148.2 697.6v1.7M148.9 680.1v1.6M149.2 679.6v1.9M149.6 688.6v1.6M150.3 686.6v2.1M150.9 674.5v2.2M151.4 686.3v2.2M151.7 693.1v2.2M151.6 689.2v2.3M153.3 695.3v2.5M153.1 695.5v2.1M153.7 684.2v2.2M153.8 684.8v1.5M155.1 680.9v1.5M154.7 687.8v1.9M156.1 684.1v1.6M155.7 674.9v2.1M156.9 677.4v1.8M156.6 680.5v1.9M157.5 676.6v1.9M157.5 675.6v1.8M158.5 669.7v2.2M158.9 667.8v2.2M160.4 667.4v1.5M160.4 666.7v2.4M160.6 672.0v1.5M161.3 670.8v2.1M161.7 678.6v2.1M161.9 674.3v1.8M162.6 672.5v2.0M162.8 677.7v2.2M163.7 669.2v2.1M164.2 677.2v1.7M164.9 676.4v2.4M165.1 674.1v2.1M165.9 668.3v1.8M165.6 670.9v2.0M166.6 677.0v2.4M167.1 677.3v2.0M167.9 678.2v2.3M167.8 674.9v2.0M168.8 676.8v2.2M168.7 671.8v1.7M169.9 668.5v1.8M169.8 671.7v2.1M171.2 671.1v1.8M171.2 678.8v2.4M171.8 674.1v2.5M171.9 680.1v2.1M173.3 683.2v2.2M173.2 683.6v2.2M173.9 680.8v1.7M174.4 679.0v2.0M174.6 687.3v2.3M175.4 687.2v1.5M175.7 685.4v2.3M176.3 690.2v1.7M176.9 686.0v1.8M176.9 691.4v2.0M177.9 695.4v2.4M178.0 697.2v1.8M179.3 696.4v1.6M179.1 689.9v2.4M179.8 695.8v2.3M180.4 690.2v1.6M180.8 679.5v1.5M181.0 671.3v1.7M182.3 687.8v2.1M181.6 685.4v1.8M182.9 684.5v1.5M182.8 672.8v2.3M183.8 672.7v1.8M183.9 671.5v2.3M184.5 692.5v2.0M184.6 688.6v1.9M185.6 690.6v2.5M186.0 684.0v2.0M187.1 686.1v2.5M186.5 683.7v2.3M188.2 686.1v1.8M188.0 676.1v2.3M189.1 681.6v2.3M189.3 672.4v2.0M190.4 668.9v2.0M190.0 680.4v1.8M191.4 676.6v1.8M190.9 669.2v2.4M192.0 680.9v2.0M192.0 680.2v2.3M193.0 676.8v1.8M193.2 668.6v1.8M193.5 671.7v2.4M194.5 671.8v1.8M194.9 676.7v2.3M195.5 677.3v1.6M196.3 668.3v1.9M196.1 672.5v2.1M197.1 678.1v2.0M197.1 673.1v1.7M198.1 671.6v1.8M197.9 669.8v2.5M199.4 668.2v2.0M198.9 679.8v1.6M199.6 672.3v2.0M200.4 679.6v2.2M200.6 674.5v1.7M201.3 670.0v1.5M202.1 674.1v1.6M202.5 671.1v2.2M203.5 670.4v2.1M203.2 675.4v1.8M204.5 675.1v1.9M203.6 683.9v1.6M204.8 681.7v2.4M205.3 683.9v1.8M206.0 680.5v2.0M206.4 679.0v1.7M207.1 689.3v2.3M206.5 679.9v2.1M208.1 686.4v2.0M207.8 688.8v2.5M208.6 687.4v1.6M209.0 689.0v1.7M210.4 693.7v2.5M209.9 688.0v2.1M210.6 690.9v1.8M211.1 692.3v1.7M211.8 694.3v2.3M212.0 693.6v2.0M213.5 679.6v1.7M212.6 676.9v2.0M214.3 682.0v1.9M214.2 688.4v2.3M215.1 674.4v1.6M215.3 680.3v1.8M215.9 690.1v2.3M216.4 678.6v2.3M216.6 689.1v1.8M217.0 694.7v2.1M218.5 688.8v2.2M217.8 690.4v2.3M218.9 694.0v2.2M219.1 696.1v2.3M220.5 686.5v2.3M220.1 690.2v2.2M221.3 683.8v1.6M220.5 684.5v2.4M222.2 673.8v1.9M222.4 681.6v2.4M222.8 673.4v2.2M222.8 676.9v1.7M224.2 680.4v2.1M224.1 679.5v1.7M224.8 683.2v1.8M225.2 672.6v1.8M225.6 674.0v2.2M226.5 675.6v2.3M227.2 675.4v1.8M226.8 677.4v2.0M227.6 679.3v2.1M227.7 677.8v2.2M229.2 676.0v1.6M228.5 680.8v2.1M230.0 681.8v1.7M229.8 682.7v2.1M231.2 677.3v2.4M230.7 681.3v2.4M232.0 675.5v2.4M232.4 684.1v2.4M232.8 683.4v2.5M233.0 676.9v2.4M233.7 672.8v2.0M233.7 674.5v2.2M235.4 675.3v2.4M235.0 683.1v1.6M235.7 678.8v1.8M236.3 677.8v2.5M237.2 685.3v1.6M236.8 678.1v1.9M237.6 683.6v2.4M238.1 683.4v1.7M238.9 687.9v2.0M239.0 686.4v2.2M239.6 693.4v1.9M239.6 691.5v2.1M240.6 692.6v1.8M240.6 692.0v1.7M242.0 696.9v2.0M241.6 693.7v2.0M243.2 700.8v2.1M242.8 693.2v1.6M243.5 703.0v1.9M244.3 701.2v2.5M245.4 695.8v2.4M245.2 695.8v2.2M246.0 678.0v2.0M245.7 688.6v1.5M247.0 683.8v2.3M246.8 677.9v1.8M247.9 690.6v2.3M247.5 692.0v1.7M248.5 695.2v2.2M248.7 691.6v1.7M250.3 690.0v2.2M250.1 690.3v2.2M250.7 690.2v1.8M251.4 682.8v2.4M252.5 686.2v2.4M252.3 688.2v1.8M253.0 684.4v2.3M253.2 679.0v2.3M253.6 680.1v1.7M254.1 675.9v2.4M254.8 672.2v2.2M255.4 676.6v1.7M256.4 676.0v1.8M255.5 682.2v2.4M256.7 675.5v2.1M257.4 672.6v2.1M257.8 674.2v2.0M257.6 675.8v2.5M258.9 674.2v2.1M258.6 672.1v1.8M259.8 672.2v1.9M260.0 680.3v2.2M261.1 681.0v2.0M261.3 671.6v1.7M262.1 676.4v1.6M262.3 670.2v2.4M262.7 680.8v2.2M263.0 669.7v1.9M264.0 675.8v1.5M263.5 676.7v2.0M265.2 680.7v2.3M264.6 682.2v1.6M265.8 678.7v1.9M265.9 672.9v2.1M267.2 680.9v2.4M266.6 680.0v1.9M268.0 675.0v1.9M268.1 681.7v2.4M269.4 677.0v2.4M268.5 680.6v1.6M270.4 679.5v1.8M270.1 690.4v2.3M270.7 682.6v2.3M271.4 685.0v1.8M272.0 690.2v2.5M271.9 684.0v2.3M273.3 689.5v1.5M273.5 688.0v2.0M274.2 695.5v1.6M274.3 694.7v2.2M275.2 695.4v1.8M274.5 689.9v1.8M275.9 691.7v2.1M275.5 694.0v1.9M276.8 693.7v1.9M277.4 689.9v2.4M277.6 681.3v1.8M277.6 683.3v1.9M278.7 677.7v2.1M278.7 684.2v1.6M280.3 685.5v1.8M280.3 679.5v2.4M280.7 696.9v1.8M281.5 697.1v1.8M281.9 688.5v2.3M281.6 690.2v2.1M283.5 688.6v2.0M282.9 690.5v1.8M284.0 684.0v2.1M284.2 681.9v2.2M284.9 680.6v2.0M285.2 685.3v2.0M286.1 678.4v1.6M286.2 681.0v1.9M286.9 675.9v2.3M286.9 679.1v1.5M288.1 674.8v1.9M288.3 672.2v2.1M288.9 668.9v2.5M289.4 669.0v1.6M290.0 673.5v1.9M289.8 676.3v1.8M291.2 675.5v1.7M290.7 679.2v1.7M291.9 669.8v1.7M291.9 675.6v1.5M293.2 672.5v1.7M293.3 676.7v1.6M294.0 671.3v1.8M294.0 679.6v2.1M295.3 672.4v2.1M295.2 678.4v1.8M295.8 669.2v1.7M296.0 675.8v1.9M297.2 675.2v2.1M297.1 680.2v2.0M297.9 667.2v1.5M298.3 668.3v2.5M299.3 673.9v2.0M298.5 669.6v2.3M300.0 672.5v2.2M300.0 679.9v1.6M301.3 677.5v1.5M301.0 682.5v2.5M302.5 678.9v1.9M302.3 679.6v1.9M303.1 688.6v1.9M303.1 687.5v1.7M303.9 680.4v1.8M303.8 685.8v2.2M305.2 693.2v1.6M305.3 693.0v2.4M305.7 695.9v2.2M306.3 695.5v2.2M307.0 692.4v2.1M306.6 697.3v2.0M307.8 700.2v1.5M308.2 697.9v2.2M309.0 689.2v1.7M308.7 693.4v1.8M310.0 682.4v1.8M309.5 684.5v1.6M310.9 687.9v1.5M310.7 689.7v2.2M311.8 689.6v2.2M311.9 675.6v2.4M312.7 693.2v2.2M312.5 693.3v2.0M314.2 683.6v2.3M313.9 695.6v1.6M314.8 681.2v2.4M315.3 681.6v2.3M315.5 684.5v2.2M316.2 683.1v2.1M316.6 684.6v1.6M317.1 683.2v1.9M317.6 675.1v2.1M318.1 678.6v2.3M319.0 671.9v2.0M318.8 677.9v1.6M320.0 669.1v2.1M320.5 674.5v2.5M320.9 673.7v2.2M321.5 675.8v2.3M321.6 665.4v2.3M322.1 671.6v2.0M323.1 673.6v1.8M323.0 670.4v1.7M324.3 675.0v2.2M324.2 668.1v2.2M325.0 672.0v2.1M325.2 670.7v2.2M326.5 667.7v2.0M326.2 676.8v1.7M327.3 678.5v1.5M326.8 677.3v1.6M327.9 672.7v2.0M327.9 674.1v1.8M329.0 668.5v1.5M328.7 677.6v2.0M330.1 676.6v2.4M329.9 675.1v1.8M330.9 667.8v2.0M330.7 679.2v2.3M331.8 676.7v2.3M332.1 674.9v1.5M333.0 679.3v2.1M333.3 677.5v1.7M333.9 675.6v1.7M334.3 679.5v2.4M335.2 685.5v1.6M334.7 682.7v2.0M336.4 679.2v2.4M336.2 685.2v1.9M337.3 684.2v1.6M336.9 687.7v2.5M338.2 691.8v2.2M337.8 686.7v1.6M338.7 687.5v2.0M339.0 690.5v2.5M339.7 687.9v2.2M340.2 695.8v1.5M340.9 690.7v2.0M340.8 694.8v2.5M341.7 684.0v2.0M341.6 685.1v1.5M342.9 687.4v2.1M343.1 683.9v1.8M343.9 686.3v1.6M344.3 686.4v1.8M345.3 695.5v1.9M345.2 688.3v1.7M345.5 698.7v2.1M345.8 691.1v1.9M346.7 687.2v2.4M347.1 691.4v2.3M348.0 687.7v2.0M348.0 694.9v1.9M349.3 689.4v1.6M349.0 690.6v2.3M349.8 685.1v2.3M349.6 688.4v2.5M351.3 676.2v2.3M351.1 673.5v2.3M352.4 680.5v2.1M351.7 678.6v2.5M352.6 677.2v1.7M353.0 674.0v1.5M354.4 679.3v2.3M353.5 675.1v2.1M355.5 682.4v1.9M354.9 683.4v1.6M356.3 681.6v2.5M355.7 677.8v2.5M357.1 673.9v1.7M357.2 675.1v1.6M358.5 676.3v2.5M358.1 671.4v2.4M358.6 681.8v2.2M359.5 674.3v1.7M360.4 678.2v1.9M359.7 674.3v1.6M361.2 674.4v2.5M361.0 680.7v1.9M362.2 680.5v2.2M361.6 672.3v2.3M362.7 670.8v1.9M363.0 679.4v2.4M363.5 678.5v2.4M364.4 674.0v1.7M365.2 683.0v2.2M364.8 677.5v1.7M365.9 678.5v1.9M366.2 680.4v2.1M366.6 682.6v2.3M366.9 682.8v2.0M368.4 685.0v1.9M367.8 687.5v2.0M369.2 692.7v1.6M369.0 688.1v2.5M369.9 696.5v2.0M370.0 697.0v2.4M371.0 696.5v2.4M371.2 697.3v2.1M372.5 702.9v2.3M371.9 691.8v2.5M372.8 701.7v2.4M372.6 702.7v1.9M374.4 682.6v2.3M374.0 685.7v1.9M375.4 687.8v2.4M374.6 684.3v1.8M376.0 681.5v2.1M375.8 675.1v1.6M376.8 691.8v1.7M377.4 689.0v2.4M378.0 690.1v2.2M378.4 687.5v1.6M378.9 688.7v2.1M378.7 687.8v2.3M380.0 691.9v1.7M380.0 685.5v1.6M381.3 681.0v2.3M381.0 681.7v2.4M382.1 680.4v1.6M381.9 675.0v2.1M382.7 674.9v2.4M383.2 680.8v1.8M384.4 680.1v2.1M383.8 676.5v1.9M385.4 667.2v2.1M384.5 676.3v1.8M385.9 676.8v1.9M385.8 673.5v2.0M387.0 670.4v2.2M386.9 680.4v2.1M388.5 669.6v2.1M387.8 679.3v2.2M389.4 678.3v2.3M389.1 678.7v2.2M389.8 682.2v1.9M389.5 674.2v2.2M391.0 671.4v2.3M391.2 679.5v2.0M391.6 671.9v1.6M392.3 672.9v2.3M392.9 668.9v2.2M393.3 672.0v1.8M394.4 674.0v2.1M393.6 680.2v2.4M394.6 672.7v2.4M394.7 670.5v1.9M396.2 675.3v2.3M396.1 677.6v1.7M396.7 681.6v2.3M397.3 678.7v1.6M397.9 687.6v1.5M397.9 678.4v1.5M399.1 686.5v1.7M398.8 686.7v1.6M399.8 690.0v1.8M400.1 688.9v1.8M400.9 694.4v1.7M401.4 694.9v1.9M402.1 693.5v1.7M402.2 689.1v1.5M403.5 689.4v2.2M402.5 694.5v2.2M403.7 694.7v2.2M403.8 696.3v2.2M405.3 691.4v1.6M404.6 697.1v1.6M406.0 676.4v1.7M405.8 684.9v1.5M406.5 678.5v2.2M407.3 689.0v2.2M407.6 685.1v1.8M408.5 675.8v1.8M408.8 673.1v2.3M409.2 678.0v1.6M409.7 694.3v1.9M410.1 692.1v2.4M411.5 689.0v1.8M411.4 688.8v2.3M411.6 690.3v2.4M411.9 683.5v2.1M412.9 683.1v1.5M413.3 686.8v2.5M413.5 679.2v1.8M414.2 677.7v2.2M415.2 683.5v1.8M415.2 677.9v1.6M415.9 676.4v2.3M416.5 675.0v1.6M417.4 678.2v1.6M416.7 674.1v2.5M417.7 672.1v2.0M417.9 677.5v2.4M418.6 675.7v1.9M418.5 674.5v1.6M419.7 674.9v2.2M419.9 680.7v1.6M421.0 675.6v2.2M420.6 677.0v2.3M421.8 680.0v2.0M421.5 676.5v1.7M423.1 668.5v1.7M422.9 680.6v2.0M424.4 674.1v2.3M424.3 676.4v2.0M425.0 675.4v1.5M425.3 681.5v2.0M426.2 676.3v1.6M426.1 673.5v2.4M427.3 679.6v1.8M427.5 680.2v2.0M427.8 678.8v2.2M428.2 680.4v2.4M428.8 675.8v2.2M429.2 683.5v2.5M429.9 676.1v2.0M430.2 681.9v1.9M431.3 688.0v2.0M430.6 678.2v2.2M431.8 682.4v2.3M431.8 687.7v2.3M433.2 692.3v2.4M433.1 690.6v1.7M434.4 692.5v1.9M434.5 695.6v1.8M435.3 692.5v2.4M435.4 694.3v2.2M436.3 696.1v2.5M435.7 692.8v2.2M436.9 692.2v2.1M437.1 689.5v1.8M437.8 690.3v1.6M438.1 699.8v2.2M438.8 687.0v1.7M438.6 675.5v2.0M439.7 676.0v1.8M439.7 678.7v2.3M440.5 692.1v2.2M441.4 681.2v2.1M442.4 693.3v2.4M442.0 694.2v1.8M442.9 697.6v1.5M442.7 698.7v2.0M443.5 690.1v1.6M444.3 691.4v2.4M445.5 687.8v2.3M445.4 687.2v2.2M445.6 676.7v2.3M446.1 683.0v1.7M446.5 678.0v2.2M447.1 679.4v2.1M448.4 671.5v1.6M447.8 680.4v1.6M449.0 678.5v2.0M448.9 672.2v2.3M450.4 679.6v2.3M449.9 680.3v2.4M451.1 670.0v2.0M450.8 682.3v2.2M452.0 678.3v1.7M452.3 673.5v1.7M453.4 681.5v2.5M453.0 675.7v1.8M453.8 674.9v1.6M453.6 677.1v2.1M454.8 677.9v2.1M454.9 677.4v1.8M456.2 672.2v1.9M455.6 679.4v2.2M457.1 674.5v1.7M457.3 678.1v2.4M457.6 681.3v1.6M458.0 669.0v1.5M459.1 681.3v2.0M459.0 682.5v2.3M459.8 679.8v2.0M459.9 677.1v2.0M460.7 682.1v2.0M460.7 679.9v2.4M461.9 682.9v1.7M461.6 682.9v1.9M463.0 681.6v2.0M463.5 677.7v1.8M463.8 690.7v2.0M464.2 683.5v1.9M465.4 688.3v2.0M465.4 688.0v2.0M465.7 687.3v1.6M465.7 693.0v1.7M467.3 690.5v2.2M467.0 693.4v1.7M468.1 690.2v1.7M467.5 697.4v2.1M469.1 700.6v2.1M469.2 689.7v2.2M470.4 700.5v1.7M470.1 698.8v2.3M471.2 679.3v1.8M471.1 682.5v1.7M472.0 689.1v1.9M471.6 676.2v2.0M472.6 682.8v2.0M473.1 676.4v2.3M473.9 693.0v1.5M473.7 693.1v2.3M475.3 693.3v2.2M474.6 686.3v2.0M475.9 692.5v1.7M476.3 690.2v2.1M476.8 684.7v1.9M477.2 678.2v1.8M478.2 678.2v2.3M478.3 679.8v2.0M478.8 674.3v2.2M479.4 680.0v2.2M479.7 669.8v1.9M480.1 672.0v2.2M480.6 667.4v1.6M480.9 677.9v1.6M482.5 670.7v2.1M482.2 672.5v2.1M482.7 673.6v2.2M482.8 678.2v1.5M483.5 669.2v1.7M483.7 667.0v2.5M485.0 674.4v2.2M484.6 668.4v1.8M485.8 680.5v2.1M486.4 670.3v2.1M486.8 667.0v2.4M487.5 676.8v2.4M488.1 679.5v2.3M488.5 677.0v2.0M488.6 668.2v2.1M489.2 679.9v1.7M490.3 666.3v1.7M490.2 667.6v2.3M491.4 671.0v1.8M491.2 680.2v2.4M491.7 678.1v1.7M492.1 670.7v1.7M493.1 678.9v2.3M492.5 677.1v2.0M494.4 683.5v2.0M494.4 684.6v1.8M495.0 684.5v2.0M494.9 680.7v2.2M496.2 682.9v1.5M496.1 679.4v1.8M497.0 682.7v2.1M497.0 684.0v1.7M497.7 685.7v1.6M497.7 688.7v1.6M498.6 688.1v2.5M499.3 685.7v1.7M500.2 693.3v2.3M500.1 690.8v2.1M501.0 697.1v2.1M500.8 692.8v1.9M501.6 688.2v2.4M501.7 699.6v2.1M503.2 677.4v2.0M503.4 684.1v1.9M504.3 673.5v1.8M504.1 682.7v2.3M504.8 675.6v1.8M504.8 681.9v1.9M505.9 697.6v1.7M506.2 687.7v2.2M506.6 688.8v1.6M507.0 696.9v1.5M507.7 685.4v2.2M507.8 693.7v1.7M508.5 689.3v2.2M508.8 689.6v2.0M510.5 681.7v2.2M510.1 678.7v2.1M510.8 680.3v1.8M511.3 679.0v1.9M512.3 668.0v2.3M512.0 672.3v1.5M512.9 668.8v1.8M512.5 671.7v1.9M514.2 669.3v1.9M513.8 672.2v1.9M515.2 678.4v1.8M515.3 677.4v1.9M516.1 675.5v1.8M515.7 675.3v1.5M516.8 667.5v2.2M516.7 676.6v1.7M518.5 677.4v2.0M517.8 677.3v2.3M519.0 669.5v1.7M519.3 677.4v2.3M519.9 677.8v2.2M520.0 666.8v2.3M520.8 677.3v1.8M520.5 676.5v2.4M522.4 669.9v2.4M521.6 670.1v2.1M523.3 668.4v1.5M523.3 667.4v2.0M523.6 670.2v2.1M524.5 679.6v2.1M524.6 680.4v1.7M525.3 683.1v2.3M525.9 681.4v1.6M526.0 683.8v1.9M526.8 677.1v2.2M527.3 678.3v2.4M527.8 680.9v1.9M528.1 677.9v1.9M528.7 687.6v2.2M529.0 686.3v1.9M529.8 689.3v2.1M530.0 683.9v1.6M531.0 687.8v1.6M531.3 690.9v2.2M532.1 691.5v1.6M531.7 697.6v2.0M533.1 690.1v2.4M532.9 693.1v2.2M533.8 690.0v2.4M533.6 698.3v2.2M535.1 676.0v1.7M534.9 685.0v1.6M536.4 683.9v1.7M535.9 675.1v1.8M536.8 678.0v2.5M536.9 677.4v2.3M537.7 696.2v2.3M537.8 700.8v2.5M539.1 700.4v2.0M538.8 700.6v1.8M540.2 696.2v1.8M540.1 692.4v2.4M540.9 682.7v2.1M541.3 683.8v1.6M542.3 688.5v1.7M542.2 689.9v2.1M543.1 685.0v1.6M543.3 677.0v1.8M543.7 682.8v2.2M543.5 679.7v2.3M544.6 676.6v2.0M544.6 672.6v2.2M545.7 676.4v1.8M545.6 675.0v1.6M547.0 671.3v2.3M546.6 671.8v2.1M548.2 678.4v1.7M548.3 671.0v1.8M548.8 675.8v1.8M548.5 677.6v1.8M549.6 676.8v1.5M549.7 681.3v1.9M551.4 671.6v2.4M551.3 682.4v1.5M551.7 670.9v2.0M552.0 673.0v1.8M552.5 679.7v2.1M552.5 679.2v1.7M554.2 670.2v1.5M553.8 675.1v2.4M555.1 682.4v1.7M555.5 675.8v1.6M556.0 672.4v2.0M555.5 683.2v1.7M556.8 674.7v1.9M556.7 680.3v2.5M558.4 686.8v2.3M558.1 675.5v1.8M558.9 677.8v2.5M559.1 685.2v1.7M559.8 689.6v2.0M559.6 681.6v2.0M561.0 691.5v1.6M561.5 694.8v1.6M562.4 692.3v1.6M562.4 689.7v2.2M562.9 692.7v2.4M563.4 698.0v1.8M564.1 696.9v1.8M563.7 695.3v1.7M565.0 696.4v2.1M564.9 698.8v2.4M566.3 691.4v1.5M565.9 693.8v2.2M567.5 692.5v2.4M566.8 684.5v2.0M567.9 687.7v1.8M568.2 685.3v2.1M569.0 684.6v2.3M569.5 675.0v2.0M570.1 684.1v1.5M569.9 679.6v1.8M570.6 692.9v2.0M571.3 687.8v2.0M572.2 692.6v1.6M572.0 687.2v1.7M572.8 684.8v2.2M573.3 690.6v2.2M574.0 678.7v1.9M574.0 684.1v2.4M575.1 683.1v2.2M575.4 673.4v1.7M575.9 678.3v2.1M575.6 670.5v1.7M577.0 676.8v1.5M576.7 677.1v2.1M577.7 673.9v2.0M578.1 674.1v2.3M579.4 665.4v2.2M578.8 676.1v2.4M580.1 674.4v2.2M580.3 673.3v1.7M580.8 667.4v1.9M580.6 671.2v1.9M581.8 674.9v2.0M582.2 672.8v2.1M583.0 679.8v2.2M583.5 679.0v1.8M583.9 678.7v1.6M584.0 673.4v2.1M585.5 674.8v1.5M585.1 666.5v1.6M585.8 672.6v2.1M585.5 675.5v1.7M586.8 673.0v1.5M586.8 675.6v2.2M587.8 670.3v2.2M588.3 676.9v2.1M588.8 675.4v2.3M589.2 673.8v2.3M589.7 677.6v2.2M590.4 681.2v1.9M591.1 684.5v2.3M590.9 680.4v2.1M591.5 680.4v1.9M591.7 682.5v2.0M593.3 680.6v2.3M592.9 687.9v1.5M594.2 690.8v2.0M593.6 689.2v2.4M595.2 685.5v2.0M595.0 691.9v1.5M596.0 687.7v1.5M596.2 691.8v1.8M596.7 691.2v1.8M596.9 691.2v1.6M598.0 693.3v1.7M597.8 690.2v1.6M599.1 672.1v1.8M598.6 678.7v2.0M599.7 678.2v2.1M600.3 681.0v2.2M601.2 683.5v2.0M601.3 688.2v2.0M602.0 679.0v2.2M602.0 684.1v1.7M602.9 699.5v2.2M603.3 696.0v2.4M604.0 688.8v1.7M604.1 693.3v1.6M605.1 685.2v2.3M604.9 688.2v1.9M605.8 683.3v2.3M606.3 685.9v1.9M606.6 683.6v2.4M607.0 682.5v2.1M608.5 673.5v1.6M608.3 672.6v2.3M609.3 669.4v2.4M609.1 680.3v1.5M610.1 672.6v1.7M609.8 676.4v2.1M611.5 674.7v1.8M610.5 670.8v2.5M612.0 672.8v1.6M612.3 676.9v1.9M612.9 678.8v1.8M612.9 674.7v2.0M614.4 673.9v2.3M614.5 671.0v2.2M615.0 676.7v1.9M614.6 680.2v2.1M615.9 676.3v1.7M616.1 675.0v2.0M617.3 675.4v1.7M616.9 674.4v2.0M617.6 678.7v2.0M617.6 678.4v2.2M618.6 676.1v2.4M619.0 671.2v2.2M619.8 678.2v1.6M620.3 673.5v2.0M621.5 675.7v2.3M620.5 674.0v2.4M622.0 674.3v1.7M622.5 674.2v2.3M623.4 681.2v1.8M622.8 677.1v2.4M623.7 683.3v1.9M623.8 685.9v2.2M624.6 684.3v1.6M624.7 691.6v2.0M626.1 688.6v1.7M625.8 691.7v2.1M626.8 689.3v2.2M627.0 692.4v1.9M627.5 696.5v2.4M628.2 692.4v2.5M629.5 695.6v1.9M629.4 697.9v1.8M630.3 693.0v2.2M630.1 696.6v1.7M631.2 695.7v2.3M630.6 689.3v1.6M631.5 676.0v1.6M632.2 689.6v2.3M633.4 676.1v1.6M633.4 685.8v2.1M634.0 678.8v2.4M634.4 686.0v1.8M634.7 689.5v1.6M634.9 695.6v1.8M636.0 688.7v2.4M635.7 691.2v2.0M637.4 688.1v2.2M636.6 680.4v2.1M638.1 677.8v2.4M637.8 684.5v2.2M639.0 685.3v1.9M639.3 684.2v2.3M640.0 679.0v2.1M639.9 680.3v2.2M641.0 667.3v2.5M641.0 667.2v2.3M641.7 671.3v2.2M642.1 677.2v1.9M642.7 667.2v2.2M643.0 673.8v1.6M643.9 676.7v2.5M643.6 666.9v2.3M645.0 673.8v2.2M644.6 676.6v2.1M646.0 674.4v2.4M646.2 668.1v1.6M647.0 675.4v1.7M647.3 672.8v1.6M647.9 677.5v2.3M648.2 680.0v1.8M649.3 677.7v2.3M648.8 674.8v1.6M649.9 672.9v2.4M649.6 665.8v2.3M650.5 673.3v1.7M651.2 667.9v2.4M651.7 675.9v2.1M651.9 673.5v2.4M653.5 673.6v2.1M652.8 676.7v1.5M653.9 670.5v2.3M653.7 675.9v2.3M655.2 681.8v2.5M654.7 678.3v2.2M655.8 679.6v2.3M655.5 684.0v2.2M656.6 683.2v2.4M657.1 685.4v1.8M657.8 688.8v1.6M658.4 688.3v1.9M658.6 691.8v2.4M658.9 686.8v1.6M659.6 687.5v2.2M659.6 686.1v2.4M661.1 695.3v2.3M661.1 693.0v1.7M662.0 697.9v2.5M662.3 695.1v1.8M663.1 691.7v2.4M662.6 694.6v2.1M664.3 679.2v1.5M664.0 680.5v2.3M664.5 681.3v2.2M664.6 688.3v1.8M666.2 676.1v2.4M665.5 683.8v2.0M666.9 697.8v2.0M667.4 695.9v1.6M667.8 691.6v2.4M668.3 692.8v2.3M669.4 682.1v2.2M668.6 694.3v1.9M669.6 685.9v2.2M670.5 681.8v1.7M671.5 682.4v1.7M670.7 684.7v1.9M671.8 672.3v2.0M671.6 678.8v2.2M673.3 677.0v2.4M673.4 679.4v1.6M673.8 679.9v2.5M673.8 670.7v2.2M674.8 677.1v2.5M674.6 675.9v1.8M676.4 668.9v1.7M676.1 681.0v1.9M677.2 676.0v2.3M676.8 674.0v1.6M678.5 674.5v2.3M677.9 669.6v2.0M679.5 671.6v2.3M679.2 677.8v1.7M679.8 669.0v1.7M679.5 674.4v1.8M680.8 669.9v2.4M681.0 673.1v1.6M682.5 677.4v1.8M682.0 677.0v1.8M683.1 671.5v2.4M683.2 675.4v2.2M683.9 672.7v2.3M683.6 674.2v1.6M684.8 681.5v1.5M684.9 676.4v2.2M686.1 674.7v2.4M685.9 682.9v1.6M686.9 678.2v2.5M686.6 684.5v2.2M688.3 680.2v2.5M688.4 682.0v1.6M689.4 684.0v2.5M689.5 679.8v2.3M690.1 685.2v2.2M689.6 689.3v1.7M691.3 692.9v1.8M691.0 689.8v1.5M692.0 694.2v2.2M691.9 694.9v2.0M693.5 691.7v1.6M693.1 695.9v2.1M693.6 697.5v2.0M694.3 696.3v1.7M694.7 689.5v1.8M695.4 692.9v1.9M696.3 681.7v1.7M696.3 673.5v2.0M697.2 679.0v2.2M697.1 675.2v2.3M697.8 680.7v2.4M697.7 672.9v1.7M699.0 699.3v2.0M699.3 695.4v1.6M700.0 697.8v1.8M700.3 691.7v2.4M700.5 693.7v2.3M701.4 687.5v1.6M702.2 681.1v2.3M702.3 681.1v2.3M702.6 682.7v1.6M702.6 679.3v2.2M704.4 677.4v1.7M703.6 679.3v2.3M705.0 674.0v2.2M705.1 675.0v1.6M705.8 671.9v2.4M706.5 675.8v1.6M707.1 673.8v1.9M706.7 682.0v1.9M708.5 670.6v1.6M707.6 670.6v2.3M708.6 674.3v1.8M708.8 677.7v2.5M709.7 680.8v1.6M710.0 680.6v2.2M710.9 670.2v2.2M710.6 669.9v1.9M711.6 681.1v2.5M712.1 673.7v2.5M713.2 672.6v2.1M713.3 672.5v2.1M714.0 674.6v1.8M713.6 679.4v1.8M714.6 670.9v1.6M715.5 678.6v1.9M715.6 671.2v2.3M716.3 678.8v1.7M717.4 674.8v2.0M716.5 682.3v1.9M718.0 677.9v1.5M718.4 679.8v1.8M719.0 683.8v1.6M719.2 683.4v2.2M719.9 683.5v2.0M720.1 688.9v1.9M721.3 681.7v1.8M720.5 688.4v2.4M721.9 685.5v2.2M722.1 684.4v2.1M722.5 688.8v1.8M723.4 689.8v2.1M724.5 693.5v1.9M724.1 691.7v2.3M725.3 694.4v1.8M724.9 695.8v1.9M726.0 700.7v1.8M726.5 691.1v1.9M726.6 700.3v1.8M727.3 690.6v2.0M728.3 678.9v1.9M727.7 683.9v1.9M728.5 677.2v2.2M729.1 689.9v1.7M730.0 692.1v2.1M729.9 689.0v2.1M730.7 690.5v2.2M730.9 692.3v1.8M732.3 693.3v2.1M732.1 691.8v1.9M733.0 694.0v2.1M733.1 689.1v1.5M734.2 690.3v1.7M734.5 690.9v2.0M735.4 685.6v2.4M734.9 682.6v2.2M735.6 675.4v2.2M736.0 687.5v2.3M736.7 683.8v1.6M736.8 682.8v2.1M737.6 675.0v1.7M737.9 682.7v1.8M738.8 681.7v1.9M739.5 678.4v2.4M739.5 680.0v2.5M740.3 677.6v2.2M741.1 673.7v1.8M740.9 682.5v2.3M742.4 674.2v1.9M741.8 683.2v1.6M743.4 680.4v2.1M743.3 680.3v1.9M744.0 682.6v1.9M744.2 681.1v2.4M744.9 677.0v2.1M745.2 681.0v2.0M746.3 676.2v1.6M746.1 673.2v1.8M747.3 681.0v2.3M747.2 679.4v2.3M748.2 672.4v2.3M747.7 679.7v1.9M748.7 681.9v2.4M749.1 682.5v2.1M749.7 682.2v1.9M749.8 678.7v1.6M750.9 684.1v2.4M751.2 680.4v1.6M751.8 685.6v2.0M752.4 678.8v2.1M752.9 684.7v1.6M752.8 683.5v2.1M753.5 687.4v1.6M754.2 686.1v2.2M754.6 687.6v1.6M754.7 688.5v2.4M756.2 694.4v1.5M756.1 690.8v1.8M757.1 694.5v1.8M757.4 693.9v2.4M757.6 691.0v1.5M758.4 690.8v2.3M759.1 701.3v2.3M758.8 694.2v2.4M760.4 676.1v2.2M759.6 689.7v1.6M760.9 685.6v2.5M760.5 689.7v1.9M762.4 689.6v1.6M762.4 675.8v1.7M763.1 690.3v2.1M763.0 691.9v2.1M764.4 692.3v1.5M764.2 692.3v1.9M764.6 684.4v2.3M765.0 691.1v2.5M766.5 685.9v1.8M766.2 686.7v2.5M766.8 682.8v1.6M767.5 676.2v1.9M767.6 681.9v2.4M768.3 673.4v1.8M768.9 675.2v2.3M769.2 673.0v1.6M770.4 673.2v2.0M769.9 674.2v2.3M770.5 672.3v1.8M770.7 672.8v2.2M771.8 672.4v1.9M772.0 677.8v1.6M772.8 673.0v1.5M772.5 666.1v1.6M773.8 672.7v1.8M774.0 666.8v1.6M774.6 671.1v2.4M775.1 670.0v2.0M776.4 679.0v1.7M776.2 669.0v2.1M776.6 667.3v1.7M777.2 672.3v2.4M778.5 674.8v1.9M778.2 675.5v1.9M778.5 666.9v2.5M778.7 676.2v2.1M779.7 676.3v1.8M780.0 672.3v1.5M781.0 677.6v2.4M780.7 672.7v2.1M782.2 675.7v2.5M782.2 678.0v2.1M783.1 676.4v2.1M783.3 678.7v2.0M783.6 677.3v2.4M784.0 678.5v2.0M784.8 677.0v1.7M784.7 680.3v1.7M786.2 687.3v1.6M786.2 682.0v2.5M787.3 689.8v2.3M786.8 688.0v2.2M787.6 688.9v1.9M787.8 692.4v1.7M788.7 687.6v2.3M788.5 693.1v1.6M789.8 689.9v1.8M789.5 691.3v2.4M791.2 691.9v2.2M790.9 696.3v2.0M792.3 681.4v2.4M791.5 685.0v1.6M792.8 673.6v1.9M793.2 680.5v1.6M793.9 685.9v1.9M793.7 684.4v2.3M795.3 676.9v1.9M794.7 682.6v2.3M795.9 691.2v2.0M796.3 696.3v1.9M797.4 693.0v1.6M797.5 686.9v1.7M798.4 688.8v1.6M798.2 688.7v2.2M799.1 685.6v1.8M799.4 686.3v1.5M799.9 682.7v1.7M800.3 680.7v2.2M800.7 676.6v1.8M800.8 671.6v2.2M801.6 671.7v2.1M802.3 674.3v1.7M803.3 670.0v2.2M802.6 681.5v1.6M804.2 668.0v1.6M804.2 671.5v2.0M805.4 676.3v2.1M805.1 675.9v1.9M806.2 676.9v2.0M805.8 670.7v2.1M807.3 677.0v1.6M807.4 669.5v2.0M808.0 675.1v1.9M808.0 671.0v1.9M809.3 681.7v1.6M809.2 669.4v1.6M810.0 671.2v2.2M809.9 681.1v2.5M810.5 675.2v1.7M811.5 672.7v1.8M811.5 675.9v2.4M811.7 680.1v2.3M812.9 678.1v2.1M813.4 674.5v2.3M814.0 679.7v2.0M813.9 675.5v2.4M814.7 677.0v1.9M815.5 678.9v2.4M816.1 683.4v2.3M816.1 683.4v1.6M816.6 683.1v2.1M817.0 679.0v2.4M818.3 678.4v1.7M818.4 687.9v1.9M819.4 683.1v1.5M818.9 687.2v2.4M819.7 684.6v1.6M819.6 686.3v1.8M820.5 689.4v1.6M820.8 690.1v1.9M821.7 689.7v2.3M822.0 694.5v2.3M822.9 693.2v2.0M822.7 692.6v2.4M824.1 691.3v2.3M823.9 692.1v1.6M825.5 678.8v2.3M824.9 681.7v2.4M825.8 686.3v2.5M826.4 671.6v2.0M827.1 679.0v2.1M826.5 682.1v2.2M827.6 691.1v2.1M827.9 692.8v2.1M828.8 692.6v2.3M828.7 693.7v2.5M830.2 684.0v2.1M830.0 683.8v2.4M831.3 689.5v2.0M831.1 690.5v1.6M831.9 686.1v2.3M831.9 688.4v1.7M833.4 680.5v1.9M832.5 677.5v1.8M833.8 678.7v2.2M834.0 674.4v1.9M834.7 673.0v2.3M835.4 675.7v2.1M836.2 677.9v2.1M835.6 671.4v1.6M837.3 677.1v1.7M837.5 679.2v2.2M838.4 676.1v2.1M837.6 682.1v2.4M839.0 680.3v1.9M839.4 681.5v1.7M839.7 669.9v1.6M839.5 677.5v2.2M840.7 674.8v1.8M840.6 679.0v2.0M841.8 675.6v1.6M841.8 674.4v1.6M843.1 681.2v2.3M843.1 679.0v1.6M843.6 680.1v1.6M843.9 681.1v1.8M844.8 677.2v1.9M845.3 672.0v1.7M846.3 677.1v2.4M845.8 680.1v2.4M846.6 677.3v2.1M847.3 675.8v1.7M848.2 682.1v1.9M848.3 679.9v1.6M848.8 687.7v2.4M848.6 688.0v1.8M850.2 687.9v1.6M850.3 687.0v2.4M851.3 693.3v1.8M851.2 690.8v2.5M852.1 696.4v1.9M852.0 688.4v2.3M852.7 690.0v2.1M853.2 690.2v2.5M854.5 692.9v1.9M853.5 691.7v1.6M854.5 699.1v1.5M854.7 693.0v2.4M855.5 693.9v2.3M855.5 701.1v2.2M856.8 693.1v1.7M857.2 690.5v2.4M857.6 692.7v1.6M858.3 693.6v1.7M858.7 692.7v1.5M858.7 685.8v2.0M860.4 696.0v2.4M860.4 697.9v1.7M861.0 685.1v2.3M861.0 692.8v2.0M862.2 690.1v2.0M861.9 685.1v2.4M863.4 681.0v1.9M863.4 682.1v2.1M863.6 677.9v1.9M864.1 680.3v2.0M865.3 677.0v1.8M864.7 676.7v1.7M866.0 678.9v2.1M866.4 678.2v1.6M866.8 669.0v1.8M867.2 676.9v1.8M868.2 678.8v2.4M867.8 668.4v2.3M869.2 675.4v2.0M869.3 674.6v1.6M870.0 673.3v2.3M870.2 676.9v2.0M871.2 677.5v1.7M871.1 673.8v1.9M872.3 668.1v2.3M871.9 671.9v2.2M872.5 672.0v2.3M872.7 680.4v2.5M874.4 675.7v2.5M873.9 670.0v2.0M875.4 672.5v1.6M875.1 668.1v1.5M876.5 669.1v1.8M876.2 671.2v1.6M876.9 678.7v1.7M877.0 668.0v2.0M877.7 669.3v1.9M878.0 678.3v2.1M878.8 680.2v1.5M878.6 674.0v1.9M880.0 684.4v2.1M879.8 682.8v2.4M881.1 679.5v2.3M880.7 678.0v2.4M882.1 681.0v1.9M881.7 689.2v2.4M883.2 691.4v2.2M883.0 682.8v2.5M884.3 684.7v1.8M883.8 688.9v2.0M884.9 692.6v2.2M884.9 693.6v1.5M886.0 696.4v1.6M885.7 693.9v2.5M886.5 689.9v1.6M887.0 691.5v1.9M887.9 689.4v1.7M888.2 687.9v1.7M889.2 684.7v2.4M888.8 679.9v1.6M889.9 690.0v1.7M889.9 672.2v2.5M891.4 675.3v2.3M890.7 686.6v1.7M891.7 693.8v1.7M892.4 693.6v1.6M892.8 691.3v1.9M892.6 692.0v2.3M893.8 686.7v2.1M893.6 695.4v2.0M895.1 693.2v2.5M895.2 690.1v2.5M895.8 687.6v2.4M895.8 682.9v2.1M897.1 676.4v2.5M897.1 676.5v2.4M897.6 678.2v1.9M897.7 673.6v1.7M899.2 682.2v1.8M899.1 671.8v2.3M899.5 673.0v2.3M899.7 673.6v2.0M901.2 678.5v2.1M900.8 674.7v1.9M902.1 670.3v1.6M901.6 670.5v2.1M903.2 670.8v1.8M902.7 679.4v1.7M903.8 676.4v2.3M904.5 669.1v1.9M905.3 678.0v2.3M904.5 678.8v1.9M905.7 677.4v2.2M906.0 673.1v2.0M907.0 670.3v1.7M906.5 671.0v2.0M908.5 681.0v1.9M908.1 675.5v2.1M909.1 673.1v1.7M908.8 673.7v2.4M910.2 678.4v2.2M910.2 681.3v1.7M911.2 680.4v2.1M911.0 674.2v2.2M911.5 684.6v2.3M912.4 682.0v1.9M912.9 679.3v2.3M912.8 680.1v2.5M914.4 683.9v2.2M914.1 680.5v2.3M914.9 690.9v1.8M915.3 691.5v1.5M916.2 691.0v1.7M916.2 687.4v1.7M916.7 695.9v1.6M917.3 687.8v1.8M918.4 695.5v1.7M917.9 692.6v1.8M918.6 697.2v1.6M918.5 698.2v2.1M920.1 691.3v2.5M920.4 697.6v2.0M921.5 689.5v2.3M921.2 690.5v1.9M922.0 673.5v2.2M922.4 685.9v1.6M923.3 687.0v1.9M923.2 685.4v2.0M924.3 695.8v1.5M923.5 689.0v2.3M925.1 689.6v1.6M925.4 690.0v2.4M925.8 691.9v1.7M926.0 684.9v2.1M926.8 688.4v2.2M927.4 685.6v1.7M927.7 677.5v2.3M927.6 682.3v1.9M929.3 682.0v1.7M929.0 674.9v2.4M929.6 676.2v2.2M930.4 678.1v2.3M931.2 676.0v1.9M931.1 675.0v2.4M931.6 668.1v2.2M932.2 677.7v1.6M932.5 674.2v1.6M933.3 673.6v2.5M934.0 676.2v2.1M933.9 668.6v2.0M935.0 676.2v2.0M934.6 673.4v2.2M936.5 671.1v1.6M936.2 679.8v2.0M937.5 671.7v1.8M936.7 677.1v2.2M937.7 678.1v2.0M938.5 672.1v2.2M939.2 671.8v2.5M938.9 677.4v2.0M939.9 677.8v1.6M940.1 676.3v2.3M940.6 669.3v2.2M940.6 670.9v1.7M942.1 676.4v2.2M941.6 679.8v2.5M943.5 669.8v1.7M943.5 669.2v2.2M943.5 676.9v1.7M944.2 678.0v2.5M945.2 682.9v2.3M945.2 683.7v1.8M946.0 677.4v2.2M945.5 682.0v2.1M946.7 687.0v2.0M946.9 685.4v2.1M947.7 688.4v2.3M948.1 679.9v2.0M949.2 690.0v2.3M949.3 685.5v2.5M950.1 688.5v2.3M949.6 688.0v1.7M951.5 686.6v2.0M951.0 690.6v1.9M952.0 696.3v2.3M951.9 693.9v2.1M953.0 677.3v1.7M953.3 672.6v1.7M954.1 687.8v1.7M953.6 676.2v2.1M954.9 686.6v1.6M954.9 673.9v2.2M956.2 687.9v1.7M956.2 676.9v2.3M956.9 699.2v1.5M956.6 694.8v1.6M957.9 692.1v1.8M958.4 687.1v1.7M958.6 684.8v2.4M959.2 682.1v1.8M960.4 686.8v2.1M960.4 685.7v1.7M961.5 683.8v2.0M961.3 682.2v2.0M961.6 671.6v1.9M961.6 678.9v2.2M963.2 677.4v1.7M963.3 682.0v2.0M964.3 679.7v1.8M964.4 679.4v1.9M965.4 677.0v1.7M965.2 668.7v2.1M966.0 674.5v2.2M966.0 675.3v2.5M967.4 677.4v2.2M967.2 678.6v2.2M968.4 679.7v2.0M968.1 676.6v2.5M968.6 672.1v2.3M969.5 676.1v1.9M969.7 680.0v2.0M969.6 678.1v1.8M970.7 675.2v1.8M971.1 679.8v2.3M971.9 674.1v2.1M971.9 671.8v1.5M973.0 670.8v1.6M972.7 675.3v1.6M973.9 671.2v1.8M973.7 673.6v2.3M974.9 671.6v1.9M975.4 674.3v1.7M976.4 681.0v1.7M976.0 674.5v2.2M977.2 684.8v1.8M977.4 684.3v2.0M977.6 680.4v1.5M978.0 681.0v2.3M979.2 692.0v1.9M979.0 683.3v2.3M980.3 684.7v2.4M979.7 692.8v2.3M981.0 692.9v1.7M981.1 696.5v2.1M982.4 696.9v1.9M981.6 693.1v1.6M982.8 692.1v2.0M983.1 694.8v1.8M983.8 693.5v1.5M983.6 689.3v2.2M984.7 673.7v2.4M984.8 678.9v1.6M986.2 677.9v1.9M986.0 687.1v1.9M986.6 688.7v2.2M987.1 675.1v2.4M987.6 689.3v2.0M988.2 679.0v2.5M989.1 689.3v1.8M989.4 698.6v2.4M990.4 695.2v1.6M990.4 691.7v2.0M990.5 682.2v2.1M991.2 691.5v2.2M991.7 691.0v2.3M992.3 683.2v1.9M993.2 676.9v2.4M993.0 684.0v2.2M994.1 680.2v1.7M993.7 672.1v1.5M995.3 671.6v2.1M995.3 671.3v2.0M995.6 672.3v2.2M996.2 674.8v1.9M997.3 678.8v1.7M996.7 680.6v2.5M997.6 679.9v2.2M998.2 674.2v2.4M998.8 671.8v2.1M999.3 679.3v1.7M999.6 680.8v1.7M1000.4 670.5v1.7M1000.7 668.8v1.7M1001.1 674.0v1.6M1001.6 680.4v2.0M1002.3 677.1v2.1M1003.1 677.3v1.5M1002.6 671.2v1.6M1003.6 679.7v2.2M1004.2 672.7v1.7M1004.8 670.7v1.7M1005.2 669.3v2.1M1006.0 671.9v2.3M1006.4 669.6v1.5M1007.4 672.7v1.9M1007.3 680.6v1.6M1007.9 683.4v2.1M1008.4 673.1v2.4M1009.1 682.3v2.2M1009.2 678.0v1.8M1010.2 688.0v2.4M1010.2 686.9v1.6M1010.8 687.8v1.9M1011.3 688.8v2.0M1011.6 684.7v2.5M1011.9 683.4v1.8M1012.8 693.9v2.3M1012.7 692.2v1.9M1013.9 696.0v2.1M1014.1 691.8v2.2M1015.5 690.6v1.5M1015.5 696.1v2.4M1016.3 698.6v1.8M1016.4 690.0v2.5M1016.6 691.3v2.5M1016.9 697.2v1.5M1017.6 685.4v2.3M1017.5 689.0v1.9M1018.6 686.8v1.7M1019.2 685.4v2.2M1020.2 687.1v1.8M1020.4 675.0v1.5M1021.2 696.4v2.4M1021.3 693.2v2.4M1022.5 686.5v2.0M1021.6 696.9v1.7M1023.1 689.7v2.3M1023.0 690.4v1.8M1024.1 688.5v1.7M1023.6 679.4v2.1M1024.6 680.7v2.1M1024.8 682.9v2.1M1026.1 681.8v2.1M1025.5 679.8v1.8M1026.9 671.4v1.7M1027.2 676.2v2.5M1027.6 676.1v2.3M1028.1 669.5v1.9M1029.0 669.6v2.4M1029.2 668.8v2.4M1030.5 670.2v2.0M1030.2 677.3v2.4M1031.4 671.9v1.9M1031.3 679.5v1.9M1032.1 668.5v2.0M1031.6 677.8v2.4M1032.6 668.6v1.8M1032.7 680.7v1.8M1033.8 676.2v2.0M1034.4 669.9v2.2M1035.4 666.7v1.9M1035.4 677.2v1.6M1036.2 672.2v2.0M1036.4 670.6v2.2M1037.3 670.8v1.5M1036.8 678.7v1.7M1037.6 672.5v2.0M1038.4 674.6v2.0M1039.3 680.8v1.7M1038.8 672.1v2.5M1039.5 674.5v1.7M1040.1 677.0v1.8M1040.9 684.9v1.9M1040.6 678.5v2.4M1041.6 684.2v1.6M1041.8 681.6v2.2M1043.3 682.1v1.6M1042.8 688.8v2.3M1044.2 685.2v1.7M1043.9 687.8v2.2M1044.6 688.6v2.2M1044.8 688.8v2.5M1045.7 690.0v2.0M1046.4 688.3v1.6M1047.0 689.4v2.3M1046.9 690.5v2.5M1048.0 691.8v1.7M1047.8 691.3v2.5M1048.5 697.6v2.4M1049.4 694.6v2.2M1050.0 678.2v2.0M1049.6 685.8v1.7M1050.9 680.9v2.3M1050.9 683.6v1.8M1052.3 691.4v1.6M1052.1 684.5v1.9M1052.9 690.9v2.1M1052.8 690.0v1.9M1054.0 690.1v1.6M1054.4 700.0v1.9M1054.9 686.1v1.7M1055.4 689.3v1.8M1056.4 685.5v1.9M1055.7 682.8v1.9M1057.5 683.3v2.5M1057.5 682.1v1.7M1057.6 682.8v2.1M1057.7 688.1v2.4M1059.0 681.4v2.1M1059.3 681.2v2.1M1059.6 672.7v1.9M1060.1 678.6v1.5M1061.2 676.4v1.6M1061.1 677.4v1.9M1061.7 677.8v2.3M1062.3 681.6v2.2M1063.1 679.5v1.6M1063.1 676.8v1.6M1063.9 677.3v2.3M1064.0 675.7v1.5M1064.9 680.1v1.8M1065.3 683.5v1.7M1065.5 677.3v2.5M1066.0 682.5v2.1M1066.7 681.7v1.5M1067.0 671.0v1.7M1067.7 675.2v2.2M1067.8 681.8v2.0M1069.2 675.3v2.0M1068.9 677.7v1.7M1069.9 673.7v2.1M1069.8 680.8v2.3M1071.2 677.6v2.3M1071.1 679.9v1.9M1071.7 674.8v1.5M1072.1 680.2v1.8M1072.5 681.4v1.7M1073.3 681.0v1.9M1073.6 688.1v1.8M1073.8 677.6v2.0M1075.1 686.6v2.0M1074.8 683.3v2.1M1075.9 694.7v2.3M1075.8 688.3v1.7M1076.6 691.2v1.7M1076.9 690.2v2.1M1078.4 699.4v1.8M1077.9 697.7v2.4M1078.6 692.7v2.3M1078.8 697.7v2.3M1079.9 698.3v2.2M1080.3 696.5v2.5M1080.5 690.8v1.5M1080.8 691.7v2.2M1081.9 690.8v2.4M1082.4 692.4v2.4M1082.6 693.4v1.8M1083.3 686.5v1.8M1084.4 676.0v2.3M1084.5 690.4v1.9M1085.2 692.9v2.5M1085.2 690.1v1.7M1086.4 692.2v2.2M1085.7 694.4v1.6M1087.3 686.2v1.7M1086.7 685.1v2.1M1088.0 683.5v1.7M1088.4 686.1v1.7M1089.3 682.8v1.7M1088.7 679.4v1.8M1090.2 684.1v1.7M1089.7 684.3v1.5M1090.6 680.8v1.9M1091.0 671.2v2.0M1092.2 675.3v1.9M1091.9 670.4v2.1M1093.1 676.6v2.5M1092.6 670.7v1.5M1094.1 669.8v2.2M1093.6 671.9v2.2M1094.8 677.6v1.8M1095.2 675.5v1.6M1096.4 671.9v1.7M1095.6 672.0v1.7M1096.8 674.0v1.7M1096.6 671.8v2.2M1098.0 675.9v1.7M1098.3 670.1v2.1M1098.6 671.3v1.6M1099.2 673.0v2.0M1099.9 675.1v1.5M1100.2 673.3v2.4M1100.6 676.4v2.2M1100.5 678.2v2.5M1101.7 675.0v2.2M1101.9 680.9v2.2M1103.4 681.9v2.2M1102.9 680.9v2.5M1103.9 681.2v1.9M1103.8 682.4v1.5M1105.0 678.2v2.5M1104.8 682.4v2.5M1106.5 677.3v2.1M1105.8 683.8v1.8M1107.1 681.4v1.6M1106.9 681.6v2.2M1108.4 682.3v2.2M1107.7 688.1v1.6M1108.6 689.8v1.7M1108.9 688.3v2.3M1109.8 686.6v1.8M1110.1 688.7v2.2M1110.6 689.4v2.1M1110.6 690.5v2.1M1111.9 698.5v1.6M1111.8 693.9v2.4M1112.9 693.7v1.5M1113.5 695.1v1.9M1114.0 677.0v1.6M1114.1 682.6v1.8M1115.3 672.6v2.4M1114.6 680.7v1.6M1115.8 674.5v2.0M1115.6 678.8v2.2M1116.6 676.2v2.2M1116.7 681.8v2.2M1117.5 698.0v2.0M1117.6 694.8v1.5M1119.0 685.8v2.3M1118.6 688.3v1.6M1120.0 691.4v2.3M1120.4 689.1v2.1M1121.2 686.9v1.7M1121.0 685.9v2.0M1122.2 679.1v1.9M1121.6 681.9v1.9M1122.5 675.8v1.8M1123.4 676.8v2.1M1124.2 673.6v1.8M1123.9 681.6v2.4M1124.6 672.6v2.2M1125.2 672.1v1.8M1125.8 678.4v1.9M1126.1 680.4v1.9M1127.3 680.2v2.0M1126.8 669.3v2.5M1128.4 667.8v1.7M1127.6 668.6v2.4M1129.2 678.8v1.7M1128.7 680.1v2.4M1129.6 675.8v2.3M1130.3 669.3v2.1M1130.9 678.0v2.5M1130.7 676.3v1.8M1132.3 669.5v2.3M1132.1 669.9v2.1M1132.9 678.5v1.9M1132.6 674.5v1.7M1134.3 675.1v2.1M1133.9 674.8v2.1M1134.9 672.9v1.6M1135.3 668.8v1.8M1135.7 673.3v2.4M1135.8 680.9v2.2M1137.1 672.3v2.4M1137.0 685.0v1.9M1138.4 680.2v1.8M1137.8 674.1v1.8M1139.2 684.0v2.4M1139.4 685.5v1.7M1140.3 688.4v1.5M1140.4 692.3v2.1M1140.8 691.6v1.5M1141.0 683.0v2.2M1141.5 694.6v1.6M1142.3 692.5v2.0M1142.6 693.7v2.3M1142.9 695.1v1.9M1143.9 699.3v1.7M1143.6 693.3v1.7M1145.3 697.8v2.1M1144.5 698.8v2.2M1145.5 675.6v1.8M1145.7 683.6v1.8M1146.8 673.4v2.0M1147.2 681.2v1.9M1148.3 688.8v1.8M1148.0 684.0v1.8M1149.2 688.9v2.1M1148.7 677.4v1.6M1149.9 689.8v2.3M1150.5 689.2v2.2M1150.5 689.7v1.8M1151.3 688.4v1.6M1151.9 690.9v1.5M1151.7 682.1v1.9M1152.5 679.9v2.1M1153.4 687.1v2.4M1154.3 678.2v1.9M1154.2 679.2v2.2M1155.2 677.8v2.4M1155.0 680.6v2.1M1156.2 672.5v2.4M1155.5 669.3v2.3M1156.8 674.4v1.9M1156.9 675.1v2.2M1158.1 669.8v1.8M1157.7 671.7v2.0M1159.3 673.5v1.7M1159.4 667.9v1.8M1160.3 669.9v1.8M1159.6 678.2v2.1M1160.5 667.9v2.2M1161.1 678.7v1.5M1161.8 670.9v2.2M1161.9 677.5v2.2M1163.0 673.1v1.7M1162.9 671.6v2.3M1163.8 669.1v2.3M1163.9 671.7v2.2M1164.5 669.6v2.4M1164.5 680.5v2.1M1166.1 674.4v1.8M1166.3 670.9v1.5M1166.6 669.0v2.4M1167.0 670.7v2.1M1168.0 680.0v1.6M1168.0 675.3v1.9M1168.7 674.6v2.3M1169.0 676.2v2.2M1169.9 684.0v1.9M1170.4 679.4v2.2M1171.3 683.4v1.6M1171.3 683.1v1.9M1171.8 682.3v1.6M1172.5 683.6v2.1M1172.5 692.0v1.6M1173.1 685.0v2.4M1174.2 688.6v2.5M1174.4 685.9v2.4M1175.2 692.6v1.6M1175.4 695.5v2.1M1175.9 697.5v1.9M1175.9 693.8v2.3M1177.3 689.8v2.4M1176.6 698.6v2.4M1177.9 678.6v2.0M1178.4 682.4v1.6M1179.1 687.9v2.3M1178.8 678.9v1.8M1180.5 684.3v1.7M1180.1 680.2v2.1M1180.9 675.5v2.4M1181.4 675.8v2.5M1181.7 690.0v2.3M1181.5 697.7v2.4M1183.3 686.7v1.5M1183.4 688.8v2.1M1183.6 685.9v2.2M1183.9 692.3v1.9M1184.6 688.0v1.9M1185.3 678.7v2.2M1186.0 682.6v2.3M1185.8 683.6v2.4M1187.3 675.7v2.2M1186.5 683.8v2.1M1188.2 679.6v1.8M1188.3 669.0v2.2M1189.4 679.9v2.2M1188.6 667.8v2.1M1189.9 671.0v2.1M1190.0 675.8v2.2M1191.0 671.4v2.3M1190.9 672.7v2.0M1191.8 677.1v2.5M1192.2 671.5v1.6M1193.2 677.1v2.3M1193.3 674.4v2.0M1194.4 674.5v2.3M1194.3 668.9v1.8M1195.4 673.2v1.8M1194.8 677.5v2.3M1195.7 670.1v2.1M1196.1 680.5v1.8M1196.6 677.8v2.2M1197.3 679.0v2.1M1197.7 671.4v2.0M1197.7 679.7v2.3M1199.4 677.9v1.5M1199.4 669.9v1.6M1199.7 673.7v2.3M1199.8 673.0v1.6M1200.8 682.3v1.6M1201.2 674.2v2.3M1201.7 681.3v2.2M1201.7 683.3v2.1M1202.8 677.1v1.7M1203.2 679.9v2.0M1204.0 685.3v2.4M1203.7 685.0v1.5M1204.6 688.2v1.7M1204.9 692.8v1.7M1206.3 688.1v2.5M1205.7 685.4v2.4M1207.0 693.1v2.2M1206.7 692.6v2.3M1207.8 690.4v2.1M1207.5 693.0v2.2M1209.2 693.7v1.8M1209.0 698.1v2.4M1209.9 696.7v2.3M1210.2 692.3v1.7M1210.7 681.0v2.3M1211.2 682.3v2.0M1212.4 677.6v2.2M1212.1 681.9v1.9M1213.1 676.5v2.2M1212.8 682.0v2.0M1213.6 700.2v2.0M1213.5 699.9v1.9M1214.7 689.7v2.2M1214.8 692.4v1.6M1215.7 689.8v2.1M1215.8 694.0v2.3M1216.9 688.5v1.8M1217.2 687.5v1.6M1217.6 679.4v2.3M1218.3 684.1v1.8M1219.4 684.0v2.2M1218.7 679.9v2.3M1219.7 672.8v2.4M1220.4 674.6v1.6M1221.0 673.9v1.6M1220.9 676.9v1.9M1222.4 676.3v2.3M1222.4 681.6v2.3M1223.3 676.9v2.2M1222.9 677.8v1.8M1224.2 677.7v1.7M1224.5 676.1v2.4M1224.9 669.5v2.0M1224.8 669.4v1.6M1225.5 677.0v1.8M1225.5 675.4v2.2M1227.4 680.6v2.4M1227.1 683.0v2.0M1227.5 681.1v1.5M1227.7 682.3v2.2M1228.6 679.9v2.1M1228.6 671.5v2.0M1230.3 671.3v2.3M1230.2 674.5v2.4M1230.9 683.2v2.3M1230.6 679.4v2.3M1231.8 676.9v1.7M1231.7 677.7v2.2M1232.8 677.8v2.1M1233.1 681.3v2.0M1234.1 676.9v2.5M1234.3 683.9v1.7M1235.3 680.5v2.1M1234.7 687.7v2.3M1235.6 681.6v1.8M1235.7 682.1v2.4M1237.0 685.2v2.1M1237.1 686.2v1.9M1237.9 695.5v2.0M1238.2 688.4v1.8M1239.0 696.2v2.3M1238.6 697.2v2.3M1240.2 691.0v1.7M1240.1 691.2v1.9M1241.1 698.5v2.4M1240.9 690.4v1.8M1242.0 694.0v1.7M1242.3 691.4v2.0M1242.8 689.4v1.9M1243.2 680.2v1.8M1244.0 692.0v1.9M1244.5 689.6v1.9M1245.5 690.4v2.4M1245.5 676.4v2.3M1245.8 700.4v2.3M1246.0 698.2v1.7M1246.6 690.4v1.7M1246.6 689.2v1.7M1247.8 691.3v2.0M1248.2 694.0v2.4M1248.6 691.6v1.6M1248.6 691.6v2.3M1249.9 684.2v1.6M1250.2 685.0v2.1M1250.8 678.7v2.3M1251.3 682.0v2.4M1251.9 673.7v1.8M1251.9 678.8v1.8M1252.9 683.6v1.7M1253.3 679.7v2.0M1254.3 681.8v1.5M1254.1 673.7v1.9M1255.3 675.4v1.8M1255.1 673.5v2.1M1255.8 676.8v2.0M1256.3 675.5v2.5M1256.8 672.2v2.4M1256.7 677.7v2.3M1257.6 674.3v2.0M1258.4 675.4v2.2M1259.0 680.3v1.7M1258.5 674.2v1.8M1260.2 671.1v1.7M1259.6 671.7v2.2M1261.2 682.7v1.7M1261.3 680.9v2.2M1261.6 675.1v2.5M1262.4 678.5v1.9M1262.9 679.4v1.5M1262.8 681.5v2.2M1263.7 673.6v1.8M1264.0 676.0v2.4M1265.3 679.4v1.9M1265.3 683.3v1.8M1265.8 684.6v1.9M1265.9 676.6v1.6M1266.7 681.7v1.5M1266.6 681.8v1.8M1267.8 689.0v1.9M1267.5 692.5v1.8M1268.7 691.3v2.2M1268.8 690.5v1.5M1269.8 693.0v1.7M1269.9 697.8v1.8M1270.7 694.8v1.9M1271.5 692.6v1.5M1272.4 694.1v1.6M1272.3 697.4v1.6M1272.7 692.8v2.3M1272.9 700.2v1.9M1273.9 695.2v1.6M1274.5 700.8v2.3M1275.0 690.6v2.0M1274.9 689.9v2.4M1276.0 679.7v1.7M1275.9 690.8v2.2M1276.6 686.4v2.1M1277.1 692.9v2.2M1278.0 696.6v1.6M1278.2 694.6v2.4M1278.7 699.5v1.9M1278.7 699.7v2.4M1279.7 696.1v2.0M1280.1 689.4v2.5M1281.1 684.4v1.8M1280.7 694.9v2.0M1282.4 686.6v2.5M1281.6 688.4v1.9M1283.1 685.5v2.0M1283.0 674.8v2.2M1283.9 681.3v2.2M1284.1 677.9v1.9M1285.3 680.2v1.6M1284.9 671.6v1.8M1286.1 673.0v1.6M1286.0 683.1v1.7M1287.2 680.1v2.1M1287.3 677.6v1.6M1287.8 674.5v2.4M1288.1 671.9v2.0M1288.6 679.1v1.8M1289.1 675.2v1.5M1290.2 673.1v2.2M1289.9 682.9v2.1M1290.8 681.0v1.9M1291.0 681.2v1.7M1292.4 670.8v1.8M1291.7 674.3v1.8M1293.0 676.0v2.4M1293.3 683.2v2.3M1294.2 673.8v1.9M1293.8 672.6v1.6M1295.5 682.0v1.6M1294.7 678.0v1.8M1296.2 674.7v2.0M1296.1 672.1v2.1M1297.4 672.9v2.0M1296.7 672.9v2.1M1297.8 685.3v2.1M1297.6 678.3v1.6M1299.1 683.6v2.1M1298.6 688.5v2.4M1300.0 687.5v1.5M1300.1 688.9v2.0M1300.8 693.8v2.4M1300.8 685.2v2.1M1302.0 695.7v1.8M1302.0 696.0v1.7M1302.9 697.5v2.1M1302.7 693.0v2.3M1304.0 694.0v1.6M1304.1 693.8v2.1M1305.4 699.1v2.1M1305.5 692.2v2.5M1306.4 695.0v2.0M1305.8 701.7v1.6M1306.9 682.6v1.9M1307.3 682.0v1.9M1308.3 692.6v1.5M1307.7 688.0v2.2M1308.8 689.1v2.1M1308.7 677.7v2.0M1310.0 681.0v2.2M1310.5 683.4v1.5M1310.8 691.5v2.1M1310.6 690.2v2.1M1311.6 682.5v2.2M1312.3 685.2v1.9M1312.6 679.8v1.7M1313.3 684.4v1.8M1313.6 684.1v2.3M1313.8 683.4v2.4M1315.0 674.8v2.0M1315.2 676.4v2.2M1315.9 669.0v1.9M1315.5 674.3v2.0M1316.5 672.6v2.0M1317.3 676.8v2.0M1318.5 673.8v2.3M1318.3 673.4v2.3M1319.3 680.3v2.3M1318.8 671.6v2.0M1320.1 668.2v1.8M1320.2 673.9v2.3M1321.3 666.0v1.5M1320.9 668.6v1.8M1322.2 671.9v2.3M1321.9 673.6v2.4M1322.7 669.5v1.5M1323.3 673.8v2.3M1323.7 670.8v1.7M1323.9 670.6v1.8M1325.4 669.0v1.9M1324.9 676.5v1.9M1325.9 672.7v1.7M1326.3 671.8v1.6M1327.3 667.0v1.6M1327.1 672.6v2.2M1327.9 675.7v1.8M1328.0 667.0v1.5M1329.4 673.5v2.3M1329.3 674.4v1.8M1330.0 676.2v2.5M1330.1 675.1v1.8" fill="none" stroke="#700070" stroke-width="1.1"/>
<path d="M23.0 682.2V719.7M18.6 694.2V660.5M21.2 688.2V662.5M55.2 682.2V711.5M50.8 694.2V662.2M53.4 688.2V664.6M87.4 683.3V711.5M83.0 695.3V662.1M85.6 689.3V666.7M119.5 681.9V713.7M115.1 693.9V662.5M117.7 687.9V665.3M151.7 682.9V716.2M147.3 694.9V663.7M149.9 688.9V663.8M183.9 681.4V718.3M179.5 693.4V662.0M182.1 687.4V662.0M216.1 682.0V714.1M211.7 694.0V660.9M214.3 688.0V662.2M248.2 685.4V719.8M243.8 697.4V666.1M246.4 691.4V668.4M280.4 684.1V720.0M276.0 696.1V662.5M278.6 690.1V664.8M312.6 682.5V717.8M308.2 694.5V661.6M310.8 688.5V665.5M344.7 681.4V713.3M340.3 693.4V660.0M342.9 687.4V661.3M376.9 685.3V716.7M372.5 697.3V664.5M375.1 691.3V664.9M409.1 683.5V718.0M404.7 695.5V663.5M407.3 689.5V666.8M441.2 683.0V715.2M436.8 695.0V660.9M439.4 689.0V666.3M473.4 684.8V720.2M469.0 696.8V664.1M471.6 690.8V668.1M505.6 681.7V716.6M501.2 693.7V660.5M503.8 687.7V662.3M537.8 682.4V713.4M533.4 694.4V661.3M536.0 688.4V662.4M569.9 685.1V718.8M565.5 697.1V665.1M568.1 691.1V665.6M602.1 681.3V714.9M597.7 693.3V661.2M600.3 687.3V661.1M634.3 683.6V717.7M629.9 695.6V664.6M632.5 689.6V664.3M666.4 681.4V714.1M662.0 693.4V661.6M664.6 687.4V661.6M698.6 683.2V722.0M694.2 695.2V661.8M696.8 689.2V665.2M730.8 684.5V719.0M726.4 696.5V664.8M729.0 690.5V666.3M762.9 684.4V716.7M758.5 696.4V662.5M761.1 690.4V666.4M795.1 681.1V715.3M790.7 693.1V661.1M793.3 687.1V664.1M827.3 682.8V719.8M822.9 694.8V663.0M825.5 688.8V664.0M859.4 685.5V714.8M855.0 697.5V666.2M857.6 691.5V668.4M891.6 682.7V713.8M887.2 694.7V664.1M889.8 688.7V664.3M923.8 683.8V720.9M919.4 695.8V663.3M922.0 689.8V665.6M956.0 681.2V714.3M951.6 693.2V661.0M954.2 687.2V661.9M988.1 683.5V719.4M983.7 695.5V664.6M986.3 689.5V664.2M1020.3 683.6V720.4M1015.9 695.6V664.0M1018.5 689.6V664.6M1052.5 682.2V713.3M1048.1 694.2V662.4M1050.7 688.2V663.7M1084.6 685.6V717.2M1080.2 697.6V664.3M1082.8 691.6V665.8M1116.8 682.7V717.2M1112.4 694.7V661.8M1115.0 688.7V664.8M1149.0 682.7V713.4M1144.6 694.7V662.6M1147.2 688.7V663.1M1181.2 682.4V717.1M1176.8 694.4V661.4M1179.4 688.4V664.6M1213.3 683.4V718.5M1208.9 695.4V661.9M1211.5 689.4V665.4M1245.5 684.7V718.1M1241.1 696.7V664.7M1243.7 690.7V667.9M1277.7 685.2V716.4M1273.3 697.2V662.9M1275.9 691.2V668.0M1309.8 685.5V721.9M1305.4 697.5V665.6M1308.0 691.5V665.4M1342.0 681.2V717.8M1337.6 693.2V659.3M1340.2 687.2V663.2" fill="none" stroke="#8a0092" stroke-width="1.2"/>
</g>
<text x="1.41" y="19.00" font-size="26.7" fill="#000" font-weight="bold" textLength="13.72" lengthAdjust="spacingAndGlyphs" style="font-family:'Liberation Serif',serif" stroke="#000" stroke-width="0.2">T</text>
<text x="12.56" y="19.20" font-size="28.5" fill="#000" font-weight="bold" textLength="12.07" lengthAdjust="spacingAndGlyphs" style="font-family:'Liberation Serif',serif" stroke="#000" stroke-width="0.3">e</text>
<text x="26.36" y="19.00" font-size="26.2" fill="#000" font-weight="bold" textLength="14.64" lengthAdjust="spacingAndGlyphs" style="font-family:'Liberation Serif',serif" stroke="#000" stroke-width="0.2">k</text>
<text x="55.02" y="16.40" transform="scale(0.86,1)" font-size="20" fill="#000" font-weight="normal" textLength="69.80" lengthAdjust="spacing" stroke="#000" stroke-width="0.45">PreVu</text>
<path d="M371 2H368.6V18.6H371" fill="none" stroke="#a9a9b1" stroke-width="2.2"/>
<path d="M992.5 2H994.3V18.6H992.5" fill="none" stroke="#a9a9b1" stroke-width="2.2"/>
<rect x="370.5" y="8.5" width="622" height="1.9" fill="#22aa22"/>
<path d="M944.5 1.2H954.5L949.5 5.8Z" fill="#ff9a00"/>
<rect x="943" y="6" width="11" height="14" rx="1" fill="#ff9a00"/>
<path d="M945.4 8.2H951.6V10H949.3V18.5H947.7V10H945.4Z" fill="#fff"/>
<path d="M1234 22H1247.6L1240.8 29Z" fill="#ff9a00"/>
<rect x="1234" y="20.6" width="13.6" height="1.6" fill="#9a009a"/>
<path d="M1233.4 31H1247.6Q1248.4 31 1248.4 32V46.5L1240.5 50.8L1232.5 46.5V32Q1232.5 31 1233.4 31Z" fill="#ff9a00"/>
<path d="M1234.2 33.0H1246.6V35.6H1242.0V46.2H1239.0V35.6H1234.2Z" fill="#fff"/>
<path d="M1324.3 21.5L1331 29H1317.6Z" fill="#a400ac"/>
<rect x="1323.4" y="28" width="1.9" height="8" fill="#a400ac"/>
<path d="M2.5 422.5H18.5L27 433.2L18.5 443.8H2.5L1 441.8V424.5Z" fill="#00a000" stroke="#0b5e0b" stroke-width="0.8"/>
<text x="6.20" y="440.00" font-size="18" fill="#fff" font-weight="normal" textLength="11.50" lengthAdjust="spacing" stroke="#fff" stroke-width="0.3">4</text>
<path d="M3.2 690.3H18.8L26.2 700.2L18.8 710.2H3.2L1.8 708.5V692Z" fill="#fff" stroke="#9a00a6" stroke-width="1.8"/>
<text x="5.60" y="706.90" font-size="19" fill="#9a00a6" font-weight="normal" textLength="11.00" lengthAdjust="spacing" stroke="#9a00a6" stroke-width="0.3">3</text>
<rect x="29.2" y="421.5" width="139" height="19.5" fill="#fff"/>
<text x="31.70" y="438.90" font-size="20" fill="#000" font-weight="normal" stroke="#000" stroke-width="0.3">I</text>
<rect x="39" y="437.3" width="12.7" height="1.9" fill="#000"/>
<text x="54.02" y="438.90" font-size="20" fill="#000" font-weight="normal" textLength="111.82" lengthAdjust="spacing" stroke="#000" stroke-width="0.3">INDUCTOR</text>
<rect x="29.2" y="688.6" width="63" height="22" fill="#fff"/>
<text x="32.85" y="705.80" font-size="20" fill="#000" font-weight="normal" textLength="57.94" lengthAdjust="spacing" stroke="#000" stroke-width="0.3">VOUT</text>
<rect x="28.1" y="872.3" width="721.9" height="26.8" rx="6.5" fill="#fff" stroke="#3c3c3c" stroke-width="1.7"/>
<rect x="28.1" y="901.3" width="721.9" height="50.3" rx="6.5" fill="#fff" stroke="#3c3c3c" stroke-width="1.7"/>
<rect x="760.3" y="872.3" width="191.5" height="49.5" rx="6.5" fill="#fff" stroke="#3c3c3c" stroke-width="1.7"/>
<rect x="962.4" y="872.3" width="137.7" height="49.5" rx="6.5" fill="#fff" stroke="#3c3c3c" stroke-width="1.7"/>
<rect x="1111.2" y="872.3" width="221.2" height="49.5" rx="6.5" fill="#fff" stroke="#3c3c3c" stroke-width="1.7"/>
<rect x="33" y="871.2" width="1294" height="2.3" fill="#8a8c8a"/>
<rect x="1187.4" y="950.0" width="231.8" height="49.2" rx="6.5" fill="#fff" stroke="#3c3c3c" stroke-width="1.7"/>
<rect x="397.0" y="876.0" width="33.0" height="21.3" rx="10.6" fill="#9a00a6"/>
<text x="407.80" y="893.50" font-size="19.5" fill="#000" font-weight="normal" textLength="12.00" lengthAdjust="spacing" stroke="#000" stroke-width="0.3">3</text>
<text x="452.86" y="893.20" font-size="19.5" fill="#9a00a6" font-weight="normal" textLength="77.04" lengthAdjust="spacing" stroke="#9a00a6" stroke-width="0.3">20.0mV</text>
<text x="550.00" y="887.60" font-size="7.5" fill="#9a00a6" font-weight="normal" textLength="5.50" lengthAdjust="spacing" stroke="#9a00a6" stroke-width="0.3">B</text>
<text x="555.60" y="893.30" font-size="8.5" fill="#9a00a6" font-weight="normal" textLength="8.40" lengthAdjust="spacing" stroke="#9a00a6" stroke-width="0.3">W</text>
<rect x="578.5" y="876.3" width="32.6" height="21.2" rx="10.6" fill="#00a000"/>
<text x="588.70" y="893.50" font-size="19.5" fill="#000" font-weight="normal" textLength="12.00" lengthAdjust="spacing" stroke="#000" stroke-width="0.3">4</text>
<text x="633.45" y="893.30" font-size="19.5" fill="#00a000" font-weight="normal" textLength="70.55" lengthAdjust="spacing" stroke="#00a000" stroke-width="0.3">500mA</text>
<text x="713.17" y="893.30" font-size="19.5" fill="#00a000" font-weight="normal" textLength="18.93" lengthAdjust="spacingAndGlyphs" stroke="#00a000" stroke-width="0.3">Ω</text>
<text x="731.80" y="887.60" font-size="7.5" fill="#00a000" font-weight="normal" textLength="5.50" lengthAdjust="spacing" stroke="#00a000" stroke-width="0.3">B</text>
<text x="737.00" y="893.30" font-size="8.5" fill="#00a000" font-weight="normal" textLength="8.00" lengthAdjust="spacing" stroke="#00a000" stroke-width="0.3">W</text>
<text x="207.51" y="921.70" font-size="19.5" fill="#000" font-weight="normal" textLength="55.04" lengthAdjust="spacing" stroke="#000" stroke-width="0.3">Value</text>
<text x="321.34" y="921.70" font-size="19.5" fill="#000" font-weight="normal" textLength="54.86" lengthAdjust="spacing" stroke="#000" stroke-width="0.3">Mean</text>
<text x="429.88" y="921.70" font-size="19.5" fill="#000" font-weight="normal" textLength="38.74" lengthAdjust="spacing" stroke="#000" stroke-width="0.3">Min</text>
<text x="537.04" y="921.70" font-size="19.5" fill="#000" font-weight="normal" textLength="38.75" lengthAdjust="spacing" stroke="#000" stroke-width="0.3">Max</text>
<text x="642.54" y="921.70" font-size="19.5" fill="#000" font-weight="normal" textLength="78.80" lengthAdjust="spacing" stroke="#000" stroke-width="0.3">Std Dev</text>
<text x="208.36" y="945.40" font-size="19.5" fill="#9a00a6" font-weight="normal" textLength="76.61" lengthAdjust="spacing" stroke="#9a00a6" stroke-width="0.3">15.2mV</text>
<text x="323.24" y="945.40" font-size="19.5" fill="#9a00a6" font-weight="normal" textLength="63.63" lengthAdjust="spacing" stroke="#9a00a6" stroke-width="0.3">15.2m</text>
<text x="430.30" y="945.40" font-size="19.5" fill="#9a00a6" font-weight="normal" textLength="63.49" lengthAdjust="spacing" stroke="#9a00a6" stroke-width="0.3">15.2m</text>
<text x="537.24" y="945.40" font-size="19.5" fill="#9a00a6" font-weight="normal" textLength="62.32" lengthAdjust="spacing" stroke="#9a00a6" stroke-width="0.3">15.2m</text>
<text x="643.24" y="945.40" font-size="19.5" fill="#9a00a6" font-weight="normal" textLength="43.87" lengthAdjust="spacing" stroke="#9a00a6" stroke-width="0.3">0.00</text>
<rect x="34.9" y="928.4" width="32.7" height="20.5" rx="10.2" fill="#9a00a6"/>
<text x="45.40" y="945.20" font-size="19.5" fill="#000" font-weight="normal" textLength="12.00" lengthAdjust="spacing" stroke="#000" stroke-width="0.3">3</text>
<text x="73.63" y="945.40" font-size="19.5" fill="#9a00a6" font-weight="normal" textLength="109.47" lengthAdjust="spacing" stroke="#9a00a6" stroke-width="0.3">Peak–Peak</text>
<text x="766.92" y="893.40" font-size="19.5" fill="#000" font-weight="normal" textLength="71.01" lengthAdjust="spacing" stroke="#000" stroke-width="0.3">4.00µs</text>
<rect x="765.8" y="900.1" width="16.2" height="16.6" rx="2.2" fill="#ff9a00"/>
<path d="M767.8 902.1H780.0V905.6H775.8V914.4H772.2V905.6H767.8Z" fill="#fff"/>
<text x="790.68" y="915.30" font-size="19.5" fill="#ff9a00" font-weight="normal" textLength="78.59" lengthAdjust="spacing" stroke="#ff9a00" stroke-width="0.3">93.00 %</text>
<text x="969.46" y="893.10" font-size="19.5" fill="#000" font-weight="normal" textLength="93.18" lengthAdjust="spacing" stroke="#000" stroke-width="0.3">2.50GS/s</text>
<text x="969.63" y="915.20" font-size="19.5" fill="#000" font-weight="normal" textLength="124.02" lengthAdjust="spacing" stroke="#000" stroke-width="0.3">100k points</text>
<rect x="1150.4" y="876.0" width="32.6" height="21.5" rx="10.8" fill="#9a00a6"/>
<text x="1160.80" y="893.40" font-size="19.5" fill="#000" font-weight="normal" textLength="12.00" lengthAdjust="spacing" stroke="#000" stroke-width="0.3">3</text>
<path d="M1199.7 892H1204.6L1210.4 881.4Q1211.2 880.3 1212.6 880.3H1215.7" fill="none" stroke="#000" stroke-width="2.3"/>
<text x="1260.59" y="893.00" font-size="19.5" fill="#000" font-weight="normal" textLength="62.33" lengthAdjust="spacing" stroke="#000" stroke-width="0.3">1.43 V</text>
</svg></body></html>
